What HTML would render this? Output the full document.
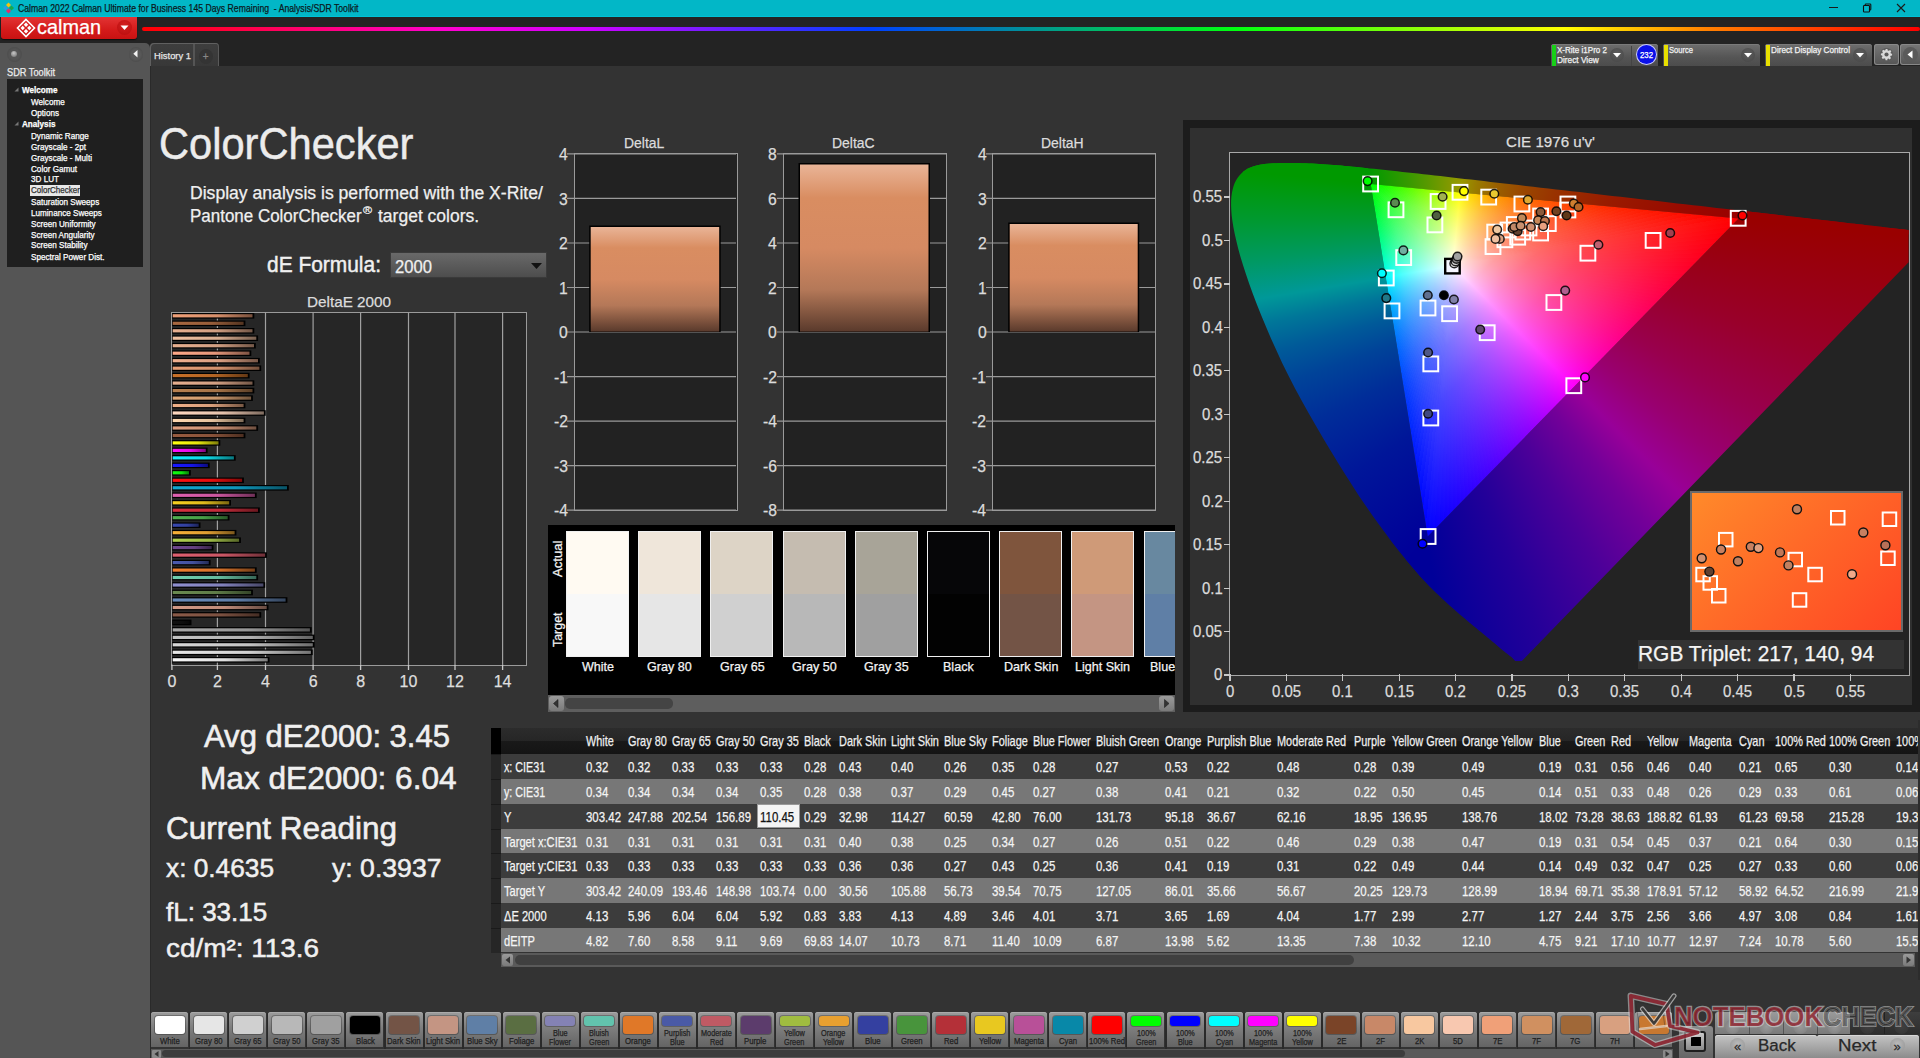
<!DOCTYPE html>
<html><head><meta charset="utf-8"><style>
html,body{margin:0;padding:0;width:1920px;height:1058px;overflow:hidden;background:#333;font-family:"Liberation Sans",sans-serif}
.a{position:absolute}
.t{position:absolute;white-space:nowrap;line-height:1;transform-origin:0 0;-webkit-text-stroke:.25px currentColor}
.wg stop{stop-color:#fff}
</style></head><body>
<div class="a" style="left:0;top:0;width:1920px;height:17px;background:#02b7c7;box-shadow:inset 0 -1px 0 #00c2d6"></div>
<svg class="a" style="left:1px;top:1px" width="14" height="14" viewBox="0 0 14 14">
<path d="M7.5 1.5 L10 4 L7.5 6.5 L5 4Z" fill="#f4c20d"/><path d="M10.5 4.5 L13 7 L10.5 9.5 L8 7Z" fill="#1aa84a"/>
<path d="M4.5 4.5 L7 7 L4.5 9.5 L2 7Z" fill="#2a9de0"/><path d="M7.5 7.5 L10 10 L7.5 12.5 L5 10Z" fill="#e0306a"/></svg>
<div class="t" style="left:18.0px;top:3.7px;font-size:10.20px;color:#0b1a1e;transform:scaleX(0.851);">Calman 2022 Calman Ultimate for Business 145 Days Remaining  - Analysis/SDR Toolkit</div>
<div class="a" style="left:1829px;top:7px;width:9px;height:1px;background:#1a1a1a"></div>
<svg class="a" style="left:1862px;top:3px" width="11" height="11"><rect x="1.5" y="2.5" width="6" height="6.5" rx=".8" fill="none" stroke="#111" stroke-width="1.1"/><path d="M3.2 2.3V1.5Q3.2 1 4 1H8Q8.8 1 8.8 1.8V6.2Q8.8 7 8 7H7.5" fill="none" stroke="#111" stroke-width="1.1"/></svg>
<svg class="a" style="left:1896px;top:3px" width="11" height="11"><path d="M1 1L9 9M9 1L1 9" stroke="#1a1a1a" stroke-width="1.1"/></svg>
<div class="a" style="left:0;top:17px;width:1920px;height:49px;background:#232323"></div>
<div class="a" style="left:1px;top:17px;width:136px;height:22px;border-radius:0 0 3px 3px;background:linear-gradient(#e23434,#d41a1a 60%,#c81212);box-shadow:0 1px 1px rgba(0,0,0,.6)"></div>
<svg class="a" style="left:16px;top:18px" width="20" height="20" viewBox="0 0 20 20">
<g fill="none" stroke="#fff" stroke-width="1.6"><path d="M10 1.5L18.5 10L10 18.5L1.5 10Z"/></g>
<g fill="#fff"><path d="M10 4.5L12.2 6.7L10 8.9L7.8 6.7Z"/><path d="M13.3 7.8L15.5 10L13.3 12.2L11.1 10Z"/><path d="M6.7 7.8L8.9 10L6.7 12.2L4.5 10Z"/><path d="M10 11.1L12.2 13.3L10 15.5L7.8 13.3Z"/></g></svg>
<div class="t" style="left:37.0px;top:17.1px;font-size:20.00px;color:#fff;transform:scaleX(0.993);">calman</div>
<div class="a" style="left:117px;top:20px;width:15px;height:15px;border-radius:50%;background:radial-gradient(circle at 50% 35%,#d42020,#b80c0c)"></div>
<svg class="a" style="left:120px;top:25px" width="9" height="6"><path d="M0.5 0.5H8.5L4.5 5Z" fill="#fff"/></svg>
<div class="a" style="left:142px;top:26.5px;width:1778px;height:4px;border-radius:2px;background:linear-gradient(90deg,#ff0000 0%,#ff00d0 17%,#d000ff 25%,#0040ff 41%,#00ff10 61.5%,#ffff00 80%,#ff8000 88%,#ff0000 100%)"></div>
<div class="a" style="left:0;top:43px;width:150px;height:1015px;background:#555;border-radius:0 5px 0 0"></div><div class="a" style="left:150px;top:66px;width:1px;height:992px;background:#2a2a2a"></div>
<div class="a" style="left:6.5px;top:47px;width:15px;height:15px;border-radius:50%;background:radial-gradient(circle,#555 45%,#4a4a4a 80%,#505050 100%)"></div><div class="a" style="left:11px;top:50.8px;width:6px;height:6px;border-radius:50%;background:radial-gradient(circle at 45% 35%,#c8c8c8,#7a7a7a 80%)"></div>
<div class="a" style="left:128.5px;top:47.2px;width:14.5px;height:14.5px;border-radius:50%;background:radial-gradient(circle,#585858 45%,#4a4a4a 80%,#525252 100%)"></div>
<svg class="a" style="left:133px;top:49.8px" width="6" height="8"><path d="M4.5 0V7.5L0.3 3.8Z" fill="#f4f4f4"/></svg>
<div class="t" style="left:7.0px;top:67.1px;font-size:10.50px;color:#ececec;transform:scaleX(0.878);">SDR Toolkit</div>
<div class="a" style="left:7px;top:79px;width:136px;height:188px;background:#1f1f1f"></div>
<div class="t" style="left:22.0px;top:86.1px;font-size:8.40px;color:#fff;font-weight:bold;transform:scaleX(0.970);">Welcome</div>
<div class="t" style="left:31.0px;top:98.1px;font-size:8.40px;color:#fff;transform:scaleX(0.970);">Welcome</div>
<div class="t" style="left:31.0px;top:109.1px;font-size:8.40px;color:#fff;transform:scaleX(0.970);">Options</div>
<div class="t" style="left:22.0px;top:120.1px;font-size:8.40px;color:#fff;font-weight:bold;transform:scaleX(0.970);">Analysis</div>
<div class="t" style="left:31.0px;top:132.1px;font-size:8.40px;color:#fff;transform:scaleX(0.970);">Dynamic Range</div>
<div class="t" style="left:31.0px;top:142.6px;font-size:8.40px;color:#fff;transform:scaleX(0.970);">Grayscale - 2pt</div>
<div class="t" style="left:31.0px;top:153.6px;font-size:8.40px;color:#fff;transform:scaleX(0.970);">Grayscale - Multi</div>
<div class="t" style="left:31.0px;top:164.6px;font-size:8.40px;color:#fff;transform:scaleX(0.970);">Color Gamut</div>
<div class="t" style="left:31.0px;top:175.1px;font-size:8.40px;color:#fff;transform:scaleX(0.970);">3D LUT</div>
<div class="a" style="left:30px;top:185.2px;width:50px;height:10.6px;background:#e8e8e8"></div>
<div class="t" style="left:31.0px;top:186.3px;font-size:8.40px;color:#333;transform:scaleX(0.954);">ColorChecker</div>
<div class="t" style="left:31.0px;top:197.6px;font-size:8.40px;color:#fff;transform:scaleX(0.970);">Saturation Sweeps</div>
<div class="t" style="left:31.0px;top:208.6px;font-size:8.40px;color:#fff;transform:scaleX(0.970);">Luminance Sweeps</div>
<div class="t" style="left:31.0px;top:219.6px;font-size:8.40px;color:#fff;transform:scaleX(0.970);">Screen Uniformity</div>
<div class="t" style="left:31.0px;top:230.6px;font-size:8.40px;color:#fff;transform:scaleX(0.970);">Screen Angularity</div>
<div class="t" style="left:31.0px;top:241.1px;font-size:8.40px;color:#fff;transform:scaleX(0.970);">Screen Stability</div>
<div class="t" style="left:31.0px;top:252.6px;font-size:8.40px;color:#fff;transform:scaleX(0.970);">Spectral Power Dist.</div>
<svg class="a" style="left:14px;top:87px" width="5" height="5"><path d="M4.5 0.5V4.5H0.5Z" fill="#777"/></svg>
<svg class="a" style="left:14px;top:121px" width="5" height="5"><path d="M4.5 0.5V4.5H0.5Z" fill="#777"/></svg>
<div class="a" style="left:150px;top:43px;width:69px;height:23px;background:linear-gradient(#3e3e3e,#383838);border-radius:4px 4px 0 0;box-shadow:inset 1px 1px 0 #606060,inset -1px 0 0 #5a5a5a"></div>
<div class="a" style="left:193px;top:44px;width:1.5px;height:22px;background:#555"></div>
<div class="t" style="left:154.0px;top:51.0px;font-size:9.40px;color:#e6e6e6;">History 1</div>
<div class="a" style="left:199px;top:48.5px;width:14px;height:15px;border-radius:50%;background:#343434"></div>
<div class="t" style="left:202.8px;top:51.5px;font-size:10.00px;color:#888;">+</div>
<div class="a" style="left:151px;top:66px;width:1769px;height:992px;background:#333"></div>
<div class="a" style="left:1551px;top:44px;width:107px;height:22px;border-radius:3px 3px 0 0;background:linear-gradient(#6e6e6e,#555 60%,#4c4c4c);box-shadow:inset 0 1px 0 #7a7a7a"></div><div class="a" style="left:1552px;top:45px;width:4px;height:21px;background:#18d018"></div>
<div class="t" style="left:1557.0px;top:46.0px;font-size:8.30px;color:#f2f2f2;transform:scaleX(0.968);">X-Rite i1Pro 2</div>
<div class="t" style="left:1557.0px;top:56.0px;font-size:8.30px;color:#f2f2f2;">Direct View</div>
<div class="a" style="left:1610.0px;top:48px;width:14px;height:14px;border-radius:50%;background:radial-gradient(circle at 50% 40%,#5e5e5e,#454545)"></div><svg class="a" style="left:1613.0px;top:53px" width="8" height="5"><path d="M0 0H8L4 4.5Z" fill="#fff"/></svg>
<div class="a" style="left:1631px;top:46px;width:1px;height:20px;background:#444"></div>
<div class="a" style="left:1637px;top:45px;width:19px;height:19px;border-radius:50%;background:#0a10e8;box-shadow:0 0 0 1px #c8c8ff"></div>
<div class="t" style="left:1640.0px;top:50.8px;font-size:8.50px;color:#fff;transform:scaleX(0.917);">232</div>
<div class="a" style="left:1663px;top:44px;width:97px;height:22px;border-radius:3px 3px 0 0;background:linear-gradient(#6e6e6e,#555 60%,#4c4c4c);box-shadow:inset 0 1px 0 #7a7a7a"></div><div class="a" style="left:1664px;top:45px;width:4px;height:21px;background:#e8e000"></div>
<div class="t" style="left:1669.0px;top:46.0px;font-size:8.30px;color:#f2f2f2;transform:scaleX(0.913);">Source</div>
<div class="a" style="left:1741.0px;top:48px;width:14px;height:14px;border-radius:50%;background:radial-gradient(circle at 50% 40%,#5e5e5e,#454545)"></div><svg class="a" style="left:1744.0px;top:53px" width="8" height="5"><path d="M0 0H8L4 4.5Z" fill="#fff"/></svg>
<div class="a" style="left:1765px;top:44px;width:107px;height:22px;border-radius:3px 3px 0 0;background:linear-gradient(#6e6e6e,#555 60%,#4c4c4c);box-shadow:inset 0 1px 0 #7a7a7a"></div><div class="a" style="left:1766px;top:45px;width:4px;height:21px;background:#e8e000"></div>
<div class="t" style="left:1771.0px;top:46.0px;font-size:8.30px;color:#f2f2f2;transform:scaleX(0.984);">Direct Display Control</div>
<div class="a" style="left:1853.0px;top:48px;width:14px;height:14px;border-radius:50%;background:radial-gradient(circle at 50% 40%,#5e5e5e,#454545)"></div><svg class="a" style="left:1856.0px;top:53px" width="8" height="5"><path d="M0 0H8L4 4.5Z" fill="#fff"/></svg>
<div class="a" style="left:1874px;top:44px;width:25px;height:21px;border-radius:3px;background:linear-gradient(#777,#555);box-shadow:inset 0 0 0 1px #888"></div>
<svg class="a" style="left:1879px;top:47px" width="15" height="15" viewBox="0 0 16 16"><circle cx="8" cy="8" r="7" fill="#5a5a5a"/><path fill="#d8d8d8" d="M7 2h2l.3 1.6 1.2.5 1.3-.9 1.4 1.4-.9 1.3.5 1.2L14 7v2l-1.6.3-.5 1.2.9 1.3-1.4 1.4-1.3-.9-1.2.5L9 14H7l-.3-1.6-1.2-.5-1.3.9-1.4-1.4.9-1.3-.5-1.2L2 9V7l1.6-.3.5-1.2-.9-1.3 1.4-1.4 1.3.9 1.2-.5Z"/><circle cx="8" cy="8" r="2.2" fill="#5a5a5a"/></svg>
<div class="a" style="left:1900px;top:44px;width:22px;height:21px;border-radius:3px;background:linear-gradient(#777,#555);box-shadow:inset 0 0 0 1px #888"></div>
<div class="a" style="left:1903px;top:47px;width:15px;height:15px;border-radius:50%;background:#5a5a5a"></div>
<svg class="a" style="left:1907px;top:50px" width="6" height="9"><path d="M5.5 0.5V8.5L0.5 4.5Z" fill="#fff"/></svg>
<div class="t" style="left:159.0px;top:120.5px;font-size:45.00px;color:#ececec;transform:scaleX(0.925);-webkit-text-stroke:.5px #ececec;">ColorChecker</div>
<div class="t" style="left:190.0px;top:184.7px;font-size:17.50px;color:#f0f0f0;transform:scaleX(1.005);">Display analysis is performed with the X-Rite/</div>
<div class="t" style="left:190.0px;top:207.7px;font-size:17.50px;color:#f0f0f0;transform:scaleX(0.969);">Pantone ColorChecker</div>
<div class="t" style="left:363.0px;top:205.5px;font-size:10.00px;color:#f0f0f0;transform:scaleX(1.222);">®</div>
<div class="t" style="left:378.0px;top:207.7px;font-size:17.50px;color:#f0f0f0;">target colors.</div>
<div class="t" style="left:267.0px;top:254.0px;font-size:22.50px;color:#f0f0f0;transform:scaleX(0.930);-webkit-text-stroke:.45px #f0f0f0;">dE Formula:</div>
<div class="a" style="left:390px;top:251.5px;width:156.5px;height:26.5px;background:linear-gradient(#6a6a6a,#4c4c4c);box-shadow:inset 0 0 0 1px #3a3a3a"></div>
<div class="t" style="left:395.0px;top:258.7px;font-size:17.50px;color:#f0f0f0;transform:scaleX(0.950);">2000</div>
<svg class="a" style="left:531px;top:262.5px" width="11" height="6"><path d="M0 0H11L5.5 6Z" fill="#111"/></svg>
<div class="t" style="left:307.0px;top:293.9px;font-size:15.50px;color:#dcdcdc;transform:scaleX(0.985);">DeltaE 2000</div>
<div class="a" style="left:172px;top:312.5px;width:354px;height:352px;background:#262626;box-shadow:0 0 0 1px #9a9a9a"></div>
<svg class="a" style="left:160px;top:300px" width="380" height="400">
<defs><linearGradient id="bg0"><stop offset="0" stop-color="#f8f8f8"/><stop offset="0.55" stop-color="#f8f8f8" stop-opacity=".9"/><stop offset="1" stop-color="#f8f8f8" stop-opacity=".5"/></linearGradient><linearGradient id="bg1"><stop offset="0" stop-color="#e8e8e8"/><stop offset="0.55" stop-color="#e8e8e8" stop-opacity=".9"/><stop offset="1" stop-color="#e8e8e8" stop-opacity=".5"/></linearGradient><linearGradient id="bg2"><stop offset="0" stop-color="#d8d8d8"/><stop offset="0.55" stop-color="#d8d8d8" stop-opacity=".9"/><stop offset="1" stop-color="#d8d8d8" stop-opacity=".5"/></linearGradient><linearGradient id="bg3"><stop offset="0" stop-color="#c4c4c4"/><stop offset="0.55" stop-color="#c4c4c4" stop-opacity=".9"/><stop offset="1" stop-color="#c4c4c4" stop-opacity=".5"/></linearGradient><linearGradient id="bg4"><stop offset="0" stop-color="#a8a8a8"/><stop offset="0.55" stop-color="#a8a8a8" stop-opacity=".9"/><stop offset="1" stop-color="#a8a8a8" stop-opacity=".5"/></linearGradient><linearGradient id="bg5"><stop offset="0" stop-color="#101010"/><stop offset="0.55" stop-color="#101010" stop-opacity=".9"/><stop offset="1" stop-color="#101010" stop-opacity=".5"/></linearGradient><linearGradient id="bg6"><stop offset="0" stop-color="#8a5a48"/><stop offset="0.55" stop-color="#8a5a48" stop-opacity=".9"/><stop offset="1" stop-color="#8a5a48" stop-opacity=".5"/></linearGradient><linearGradient id="bg7"><stop offset="0" stop-color="#d49a86"/><stop offset="0.55" stop-color="#d49a86" stop-opacity=".9"/><stop offset="1" stop-color="#d49a86" stop-opacity=".5"/></linearGradient><linearGradient id="bg8"><stop offset="0" stop-color="#6a8cbc"/><stop offset="0.55" stop-color="#6a8cbc" stop-opacity=".9"/><stop offset="1" stop-color="#6a8cbc" stop-opacity=".5"/></linearGradient><linearGradient id="bg9"><stop offset="0" stop-color="#6a8a50"/><stop offset="0.55" stop-color="#6a8a50" stop-opacity=".9"/><stop offset="1" stop-color="#6a8a50" stop-opacity=".5"/></linearGradient><linearGradient id="bg10"><stop offset="0" stop-color="#9090d0"/><stop offset="0.55" stop-color="#9090d0" stop-opacity=".9"/><stop offset="1" stop-color="#9090d0" stop-opacity=".5"/></linearGradient><linearGradient id="bg11"><stop offset="0" stop-color="#70d0b0"/><stop offset="0.55" stop-color="#70d0b0" stop-opacity=".9"/><stop offset="1" stop-color="#70d0b0" stop-opacity=".5"/></linearGradient><linearGradient id="bg12"><stop offset="0" stop-color="#f08030"/><stop offset="0.55" stop-color="#f08030" stop-opacity=".9"/><stop offset="1" stop-color="#f08030" stop-opacity=".5"/></linearGradient><linearGradient id="bg13"><stop offset="0" stop-color="#4a5ab0"/><stop offset="0.55" stop-color="#4a5ab0" stop-opacity=".9"/><stop offset="1" stop-color="#4a5ab0" stop-opacity=".5"/></linearGradient><linearGradient id="bg14"><stop offset="0" stop-color="#e06070"/><stop offset="0.55" stop-color="#e06070" stop-opacity=".9"/><stop offset="1" stop-color="#e06070" stop-opacity=".5"/></linearGradient><linearGradient id="bg15"><stop offset="0" stop-color="#704890"/><stop offset="0.55" stop-color="#704890" stop-opacity=".9"/><stop offset="1" stop-color="#704890" stop-opacity=".5"/></linearGradient><linearGradient id="bg16"><stop offset="0" stop-color="#b0d050"/><stop offset="0.55" stop-color="#b0d050" stop-opacity=".9"/><stop offset="1" stop-color="#b0d050" stop-opacity=".5"/></linearGradient><linearGradient id="bg17"><stop offset="0" stop-color="#f8b038"/><stop offset="0.55" stop-color="#f8b038" stop-opacity=".9"/><stop offset="1" stop-color="#f8b038" stop-opacity=".5"/></linearGradient><linearGradient id="bg18"><stop offset="0" stop-color="#3848b0"/><stop offset="0.55" stop-color="#3848b0" stop-opacity=".9"/><stop offset="1" stop-color="#3848b0" stop-opacity=".5"/></linearGradient><linearGradient id="bg19"><stop offset="0" stop-color="#50b050"/><stop offset="0.55" stop-color="#50b050" stop-opacity=".9"/><stop offset="1" stop-color="#50b050" stop-opacity=".5"/></linearGradient><linearGradient id="bg20"><stop offset="0" stop-color="#d83040"/><stop offset="0.55" stop-color="#d83040" stop-opacity=".9"/><stop offset="1" stop-color="#d83040" stop-opacity=".5"/></linearGradient><linearGradient id="bg21"><stop offset="0" stop-color="#f8d020"/><stop offset="0.55" stop-color="#f8d020" stop-opacity=".9"/><stop offset="1" stop-color="#f8d020" stop-opacity=".5"/></linearGradient><linearGradient id="bg22"><stop offset="0" stop-color="#e060b0"/><stop offset="0.55" stop-color="#e060b0" stop-opacity=".9"/><stop offset="1" stop-color="#e060b0" stop-opacity=".5"/></linearGradient><linearGradient id="bg23"><stop offset="0" stop-color="#10a8d0"/><stop offset="0.55" stop-color="#10a8d0" stop-opacity=".9"/><stop offset="1" stop-color="#10a8d0" stop-opacity=".5"/></linearGradient><linearGradient id="bg24"><stop offset="0" stop-color="#ff1010"/><stop offset="0.55" stop-color="#ff1010" stop-opacity=".9"/><stop offset="1" stop-color="#ff1010" stop-opacity=".5"/></linearGradient><linearGradient id="bg25"><stop offset="0" stop-color="#10ff10"/><stop offset="0.55" stop-color="#10ff10" stop-opacity=".9"/><stop offset="1" stop-color="#10ff10" stop-opacity=".5"/></linearGradient><linearGradient id="bg26"><stop offset="0" stop-color="#1818ff"/><stop offset="0.55" stop-color="#1818ff" stop-opacity=".9"/><stop offset="1" stop-color="#1818ff" stop-opacity=".5"/></linearGradient><linearGradient id="bg27"><stop offset="0" stop-color="#10f0ff"/><stop offset="0.55" stop-color="#10f0ff" stop-opacity=".9"/><stop offset="1" stop-color="#10f0ff" stop-opacity=".5"/></linearGradient><linearGradient id="bg28"><stop offset="0" stop-color="#ff10ff"/><stop offset="0.55" stop-color="#ff10ff" stop-opacity=".9"/><stop offset="1" stop-color="#ff10ff" stop-opacity=".5"/></linearGradient><linearGradient id="bg29"><stop offset="0" stop-color="#ffff10"/><stop offset="0.55" stop-color="#ffff10" stop-opacity=".9"/><stop offset="1" stop-color="#ffff10" stop-opacity=".5"/></linearGradient><linearGradient id="bg30"><stop offset="0" stop-color="#985c40"/><stop offset="0.55" stop-color="#985c40" stop-opacity=".9"/><stop offset="1" stop-color="#985c40" stop-opacity=".5"/></linearGradient><linearGradient id="bg31"><stop offset="0" stop-color="#e0a080"/><stop offset="0.55" stop-color="#e0a080" stop-opacity=".9"/><stop offset="1" stop-color="#e0a080" stop-opacity=".5"/></linearGradient><linearGradient id="bg32"><stop offset="0" stop-color="#ffd8b0"/><stop offset="0.55" stop-color="#ffd8b0" stop-opacity=".9"/><stop offset="1" stop-color="#ffd8b0" stop-opacity=".5"/></linearGradient><linearGradient id="bg33"><stop offset="0" stop-color="#ffd8c0"/><stop offset="0.55" stop-color="#ffd8c0" stop-opacity=".9"/><stop offset="1" stop-color="#ffd8c0" stop-opacity=".5"/></linearGradient><linearGradient id="bg34"><stop offset="0" stop-color="#f0b088"/><stop offset="0.55" stop-color="#f0b088" stop-opacity=".9"/><stop offset="1" stop-color="#f0b088" stop-opacity=".5"/></linearGradient><linearGradient id="bg35"><stop offset="0" stop-color="#e0a878"/><stop offset="0.55" stop-color="#e0a878" stop-opacity=".9"/><stop offset="1" stop-color="#e0a878" stop-opacity=".5"/></linearGradient><linearGradient id="bg36"><stop offset="0" stop-color="#b88050"/><stop offset="0.55" stop-color="#b88050" stop-opacity=".9"/><stop offset="1" stop-color="#b88050" stop-opacity=".5"/></linearGradient><linearGradient id="bg37"><stop offset="0" stop-color="#e8b090"/><stop offset="0.55" stop-color="#e8b090" stop-opacity=".9"/><stop offset="1" stop-color="#e8b090" stop-opacity=".5"/></linearGradient><linearGradient id="bg38"><stop offset="0" stop-color="#c87028"/><stop offset="0.55" stop-color="#c87028" stop-opacity=".9"/><stop offset="1" stop-color="#c87028" stop-opacity=".5"/></linearGradient><linearGradient id="bg39"><stop offset="0" stop-color="#e8a078"/><stop offset="0.55" stop-color="#e8a078" stop-opacity=".9"/><stop offset="1" stop-color="#e8a078" stop-opacity=".5"/></linearGradient><linearGradient id="bg40"><stop offset="0" stop-color="#f0b090"/><stop offset="0.55" stop-color="#f0b090" stop-opacity=".9"/><stop offset="1" stop-color="#f0b090" stop-opacity=".5"/></linearGradient><linearGradient id="bg41"><stop offset="0" stop-color="#ffa888"/><stop offset="0.55" stop-color="#ffa888" stop-opacity=".9"/><stop offset="1" stop-color="#ffa888" stop-opacity=".5"/></linearGradient><linearGradient id="bg42"><stop offset="0" stop-color="#e8b090"/><stop offset="0.55" stop-color="#e8b090" stop-opacity=".9"/><stop offset="1" stop-color="#e8b090" stop-opacity=".5"/></linearGradient><linearGradient id="bg43"><stop offset="0" stop-color="#f0c0a0"/><stop offset="0.55" stop-color="#f0c0a0" stop-opacity=".9"/><stop offset="1" stop-color="#f0c0a0" stop-opacity=".5"/></linearGradient><linearGradient id="bg44"><stop offset="0" stop-color="#e8b090"/><stop offset="0.55" stop-color="#e8b090" stop-opacity=".9"/><stop offset="1" stop-color="#e8b090" stop-opacity=".5"/></linearGradient><linearGradient id="bg45"><stop offset="0" stop-color="#a86840"/><stop offset="0.55" stop-color="#a86840" stop-opacity=".9"/><stop offset="1" stop-color="#a86840" stop-opacity=".5"/></linearGradient><linearGradient id="bg46"><stop offset="0" stop-color="#f0a078"/><stop offset="0.55" stop-color="#f0a078" stop-opacity=".9"/><stop offset="1" stop-color="#f0a078" stop-opacity=".5"/></linearGradient></defs>
<line x1="57.4" y1="12" x2="57.4" y2="364.5" stroke="#a0a0a0" stroke-width="1.2"/>
<line x1="105.5" y1="12" x2="105.5" y2="364.5" stroke="#a0a0a0" stroke-width="1.2"/>
<line x1="153.1" y1="12" x2="153.1" y2="364.5" stroke="#a0a0a0" stroke-width="1.2"/>
<line x1="200.6" y1="12" x2="200.6" y2="364.5" stroke="#a0a0a0" stroke-width="1.2"/>
<line x1="248.5" y1="12" x2="248.5" y2="364.5" stroke="#a0a0a0" stroke-width="1.2"/>
<line x1="295.0" y1="12" x2="295.0" y2="364.5" stroke="#a0a0a0" stroke-width="1.2"/>
<line x1="342.6" y1="12" x2="342.6" y2="364.5" stroke="#a0a0a0" stroke-width="1.2"/>
<line x1="11.9" y1="364.5" x2="11.9" y2="370" stroke="#c8c8c8" stroke-width="1.3"/>
<line x1="57.4" y1="364.5" x2="57.4" y2="370" stroke="#c8c8c8" stroke-width="1.3"/>
<line x1="105.5" y1="364.5" x2="105.5" y2="370" stroke="#c8c8c8" stroke-width="1.3"/>
<line x1="153.1" y1="364.5" x2="153.1" y2="370" stroke="#c8c8c8" stroke-width="1.3"/>
<line x1="200.6" y1="364.5" x2="200.6" y2="370" stroke="#c8c8c8" stroke-width="1.3"/>
<line x1="248.5" y1="364.5" x2="248.5" y2="370" stroke="#c8c8c8" stroke-width="1.3"/>
<line x1="295.0" y1="364.5" x2="295.0" y2="370" stroke="#c8c8c8" stroke-width="1.3"/>
<line x1="342.6" y1="364.5" x2="342.6" y2="370" stroke="#c8c8c8" stroke-width="1.3"/>
<rect x="12.2" y="357.0" width="97.3" height="5.6" fill="#000"/>
<rect x="12.7" y="358.2" width="95.0" height="3.2" fill="url(#bg0)"/>
<rect x="12.2" y="349.5" width="140.5" height="5.6" fill="#000"/>
<rect x="12.7" y="350.7" width="138.2" height="3.2" fill="url(#bg1)"/>
<rect x="12.2" y="342.0" width="142.4" height="5.6" fill="#000"/>
<rect x="12.7" y="343.2" width="140.1" height="3.2" fill="url(#bg2)"/>
<rect x="12.2" y="334.6" width="142.4" height="5.6" fill="#000"/>
<rect x="12.7" y="335.8" width="140.1" height="3.2" fill="url(#bg3)"/>
<rect x="12.2" y="327.1" width="139.5" height="5.6" fill="#000"/>
<rect x="12.7" y="328.3" width="137.2" height="3.2" fill="url(#bg4)"/>
<rect x="12.2" y="319.6" width="19.3" height="5.6" fill="#000"/>
<rect x="12.7" y="320.8" width="17.0" height="3.2" fill="url(#bg5)"/>
<rect x="12.2" y="312.1" width="89.0" height="5.6" fill="#000"/>
<rect x="12.7" y="313.3" width="86.7" height="3.2" fill="url(#bg6)"/>
<rect x="12.2" y="304.7" width="96.3" height="5.6" fill="#000"/>
<rect x="12.7" y="305.9" width="94.0" height="3.2" fill="url(#bg7)"/>
<rect x="12.2" y="297.2" width="115.2" height="5.6" fill="#000"/>
<rect x="12.7" y="298.4" width="112.9" height="3.2" fill="url(#bg8)"/>
<rect x="12.2" y="289.7" width="80.7" height="5.6" fill="#000"/>
<rect x="12.7" y="290.9" width="78.4" height="3.2" fill="url(#bg9)"/>
<rect x="12.2" y="282.2" width="93.0" height="5.6" fill="#000"/>
<rect x="12.7" y="283.4" width="90.7" height="3.2" fill="url(#bg10)"/>
<rect x="12.2" y="274.7" width="85.9" height="5.6" fill="#000"/>
<rect x="12.7" y="275.9" width="83.6" height="3.2" fill="url(#bg11)"/>
<rect x="12.2" y="267.3" width="84.5" height="5.6" fill="#000"/>
<rect x="12.7" y="268.5" width="82.2" height="3.2" fill="url(#bg12)"/>
<rect x="12.2" y="259.8" width="38.4" height="5.6" fill="#000"/>
<rect x="12.7" y="261.0" width="36.1" height="3.2" fill="url(#bg13)"/>
<rect x="12.2" y="252.3" width="94.7" height="5.6" fill="#000"/>
<rect x="12.7" y="253.5" width="92.4" height="3.2" fill="url(#bg14)"/>
<rect x="12.2" y="244.8" width="41.3" height="5.6" fill="#000"/>
<rect x="12.7" y="246.0" width="39.0" height="3.2" fill="url(#bg15)"/>
<rect x="12.2" y="237.4" width="68.7" height="5.6" fill="#000"/>
<rect x="12.7" y="238.6" width="66.4" height="3.2" fill="url(#bg16)"/>
<rect x="12.2" y="229.9" width="64.2" height="5.6" fill="#000"/>
<rect x="12.7" y="231.1" width="61.9" height="3.2" fill="url(#bg17)"/>
<rect x="12.2" y="222.4" width="28.3" height="5.6" fill="#000"/>
<rect x="12.7" y="223.6" width="26.0" height="3.2" fill="url(#bg18)"/>
<rect x="12.2" y="214.9" width="57.3" height="5.6" fill="#000"/>
<rect x="12.7" y="216.1" width="55.0" height="3.2" fill="url(#bg19)"/>
<rect x="12.2" y="207.4" width="87.6" height="5.6" fill="#000"/>
<rect x="12.7" y="208.6" width="85.3" height="3.2" fill="url(#bg20)"/>
<rect x="12.2" y="200.0" width="58.8" height="5.6" fill="#000"/>
<rect x="12.7" y="201.2" width="56.5" height="3.2" fill="url(#bg21)"/>
<rect x="12.2" y="192.5" width="84.5" height="5.6" fill="#000"/>
<rect x="12.7" y="193.7" width="82.2" height="3.2" fill="url(#bg22)"/>
<rect x="12.2" y="185.0" width="116.6" height="5.6" fill="#000"/>
<rect x="12.7" y="186.2" width="114.3" height="3.2" fill="url(#bg23)"/>
<rect x="12.2" y="177.5" width="71.7" height="5.6" fill="#000"/>
<rect x="12.7" y="178.7" width="69.4" height="3.2" fill="url(#bg24)"/>
<rect x="12.2" y="170.0" width="18.6" height="5.6" fill="#000"/>
<rect x="12.7" y="171.2" width="16.3" height="3.2" fill="url(#bg25)"/>
<rect x="12.2" y="162.6" width="37.5" height="5.6" fill="#000"/>
<rect x="12.7" y="163.8" width="35.2" height="3.2" fill="url(#bg26)"/>
<rect x="12.2" y="155.1" width="63.5" height="5.6" fill="#000"/>
<rect x="12.7" y="156.3" width="61.2" height="3.2" fill="url(#bg27)"/>
<rect x="12.2" y="147.6" width="35.4" height="5.6" fill="#000"/>
<rect x="12.7" y="148.8" width="33.1" height="3.2" fill="url(#bg28)"/>
<rect x="12.2" y="140.1" width="48.1" height="5.6" fill="#000"/>
<rect x="12.7" y="141.3" width="45.8" height="3.2" fill="url(#bg29)"/>
<rect x="12.2" y="132.7" width="73.2" height="5.6" fill="#000"/>
<rect x="12.7" y="133.9" width="70.9" height="3.2" fill="url(#bg30)"/>
<rect x="12.2" y="125.2" width="85.9" height="5.6" fill="#000"/>
<rect x="12.7" y="126.4" width="83.6" height="3.2" fill="url(#bg31)"/>
<rect x="12.2" y="117.7" width="73.2" height="5.6" fill="#000"/>
<rect x="12.7" y="118.9" width="70.9" height="3.2" fill="url(#bg32)"/>
<rect x="12.2" y="110.2" width="93.5" height="5.6" fill="#000"/>
<rect x="12.7" y="111.4" width="91.2" height="3.2" fill="url(#bg33)"/>
<rect x="12.2" y="102.7" width="73.2" height="5.6" fill="#000"/>
<rect x="12.7" y="103.9" width="70.9" height="3.2" fill="url(#bg34)"/>
<rect x="12.2" y="95.3" width="80.7" height="5.6" fill="#000"/>
<rect x="12.7" y="96.5" width="78.4" height="3.2" fill="url(#bg35)"/>
<rect x="12.2" y="87.8" width="82.1" height="5.6" fill="#000"/>
<rect x="12.7" y="89.0" width="79.8" height="3.2" fill="url(#bg36)"/>
<rect x="12.2" y="80.3" width="82.1" height="5.6" fill="#000"/>
<rect x="12.7" y="81.5" width="79.8" height="3.2" fill="url(#bg37)"/>
<rect x="12.2" y="72.8" width="77.4" height="5.6" fill="#000"/>
<rect x="12.7" y="74.0" width="75.1" height="3.2" fill="url(#bg38)"/>
<rect x="12.2" y="65.4" width="89.0" height="5.6" fill="#000"/>
<rect x="12.7" y="66.6" width="86.7" height="3.2" fill="url(#bg39)"/>
<rect x="12.2" y="57.9" width="87.6" height="5.6" fill="#000"/>
<rect x="12.7" y="59.1" width="85.3" height="3.2" fill="url(#bg40)"/>
<rect x="12.2" y="50.4" width="79.1" height="5.6" fill="#000"/>
<rect x="12.7" y="51.6" width="76.8" height="3.2" fill="url(#bg41)"/>
<rect x="12.2" y="42.9" width="83.6" height="5.6" fill="#000"/>
<rect x="12.7" y="44.1" width="81.3" height="3.2" fill="url(#bg42)"/>
<rect x="12.2" y="35.4" width="85.9" height="5.6" fill="#000"/>
<rect x="12.7" y="36.6" width="83.6" height="3.2" fill="url(#bg43)"/>
<rect x="12.2" y="28.0" width="82.1" height="5.6" fill="#000"/>
<rect x="12.7" y="29.2" width="79.8" height="3.2" fill="url(#bg44)"/>
<rect x="12.2" y="20.5" width="73.2" height="5.6" fill="#000"/>
<rect x="12.7" y="21.7" width="70.9" height="3.2" fill="url(#bg45)"/>
<rect x="12.2" y="13.0" width="82.1" height="5.6" fill="#000"/>
<rect x="12.7" y="14.2" width="79.8" height="3.2" fill="url(#bg46)"/>
</svg>
<div class="t" style="left:167.5px;top:674.3px;font-size:16.00px;color:#dedede;">0</div>
<div class="t" style="left:213.0px;top:674.3px;font-size:16.00px;color:#dedede;">2</div>
<div class="t" style="left:261.1px;top:674.3px;font-size:16.00px;color:#dedede;">4</div>
<div class="t" style="left:308.7px;top:674.3px;font-size:16.00px;color:#dedede;">6</div>
<div class="t" style="left:356.2px;top:674.3px;font-size:16.00px;color:#dedede;">8</div>
<div class="t" style="left:399.6px;top:674.3px;font-size:16.00px;color:#dedede;">10</div>
<div class="t" style="left:446.1px;top:674.3px;font-size:16.00px;color:#dedede;">12</div>
<div class="t" style="left:493.7px;top:674.3px;font-size:16.00px;color:#dedede;">14</div>
<div class="t" style="left:204.3px;top:719.9px;font-size:32.00px;color:#f0f0f0;transform:scaleX(0.969);-webkit-text-stroke:.6px #f0f0f0;">Avg dE2000: 3.45</div>
<div class="t" style="left:199.5px;top:761.9px;font-size:32.00px;color:#f0f0f0;transform:scaleX(0.988);-webkit-text-stroke:.6px #f0f0f0;">Max dE2000: 6.04</div>
<div class="t" style="left:166.0px;top:813.3px;font-size:31.50px;color:#f0f0f0;-webkit-text-stroke:.6px #f0f0f0;">Current Reading</div>
<div class="t" style="left:166.0px;top:855.0px;font-size:26.00px;color:#f0f0f0;transform:scaleX(1.010);-webkit-text-stroke:.5px #f0f0f0;">x: 0.4635</div>
<div class="t" style="left:331.5px;top:855.0px;font-size:26.00px;color:#f0f0f0;transform:scaleX(1.024);-webkit-text-stroke:.5px #f0f0f0;">y: 0.3937</div>
<div class="t" style="left:166.0px;top:898.5px;font-size:26.00px;color:#f0f0f0;-webkit-text-stroke:.5px #f0f0f0;">fL: 33.15</div>
<div class="t" style="left:166.0px;top:935.0px;font-size:26.00px;color:#f0f0f0;transform:scaleX(1.073);-webkit-text-stroke:.5px #f0f0f0;">cd/m²: 113.6</div>
<div class="t" style="left:623.6px;top:135.3px;font-size:15.50px;color:#dcdcdc;transform:scaleX(0.900);">DeltaL</div>
<div class="a" style="left:574.8px;top:153.9px;width:162.0px;height:356.3px;background:#222;box-shadow:0 0 0 1px #9a9a9a"></div>
<svg class="a" style="left:554px;top:140px" width="192" height="390">
<line x1="13" y1="13.9" x2="182.0" y2="13.9" stroke="#9a9a9a" stroke-width="1.2"/>
<line x1="13" y1="58.4" x2="182.0" y2="58.4" stroke="#9a9a9a" stroke-width="1.2"/>
<line x1="13" y1="103.0" x2="182.0" y2="103.0" stroke="#9a9a9a" stroke-width="1.2"/>
<line x1="13" y1="147.5" x2="182.0" y2="147.5" stroke="#9a9a9a" stroke-width="1.2"/>
<line x1="13" y1="192.0" x2="182.0" y2="192.0" stroke="#9a9a9a" stroke-width="1.2"/>
<line x1="13" y1="236.6" x2="182.0" y2="236.6" stroke="#9a9a9a" stroke-width="1.2"/>
<line x1="13" y1="281.1" x2="182.0" y2="281.1" stroke="#9a9a9a" stroke-width="1.2"/>
<line x1="13" y1="325.7" x2="182.0" y2="325.7" stroke="#9a9a9a" stroke-width="1.2"/>
<line x1="13" y1="370.2" x2="182.0" y2="370.2" stroke="#9a9a9a" stroke-width="1.2"/>
<defs><linearGradient id="gDeltaL" x1="0" y1="0" x2="0" y2="1"><stop offset="0" stop-color="#e9b497"/><stop offset="0.2" stop-color="#d98d61"/><stop offset="0.5" stop-color="#d68a62"/><stop offset="0.75" stop-color="#b47858"/><stop offset="1" stop-color="#5a3a2c"/></linearGradient></defs>
<rect x="35.2" y="85.5" width="131.5" height="106.6" fill="#000"/>
<rect x="36.7" y="87.0" width="128.5" height="104.6" fill="url(#gDeltaL)"/>
</svg>
<div class="t" style="left:559.1px;top:146.1px;font-size:16.50px;color:#dcdcdc;transform:scaleX(0.950);">4</div>
<div class="t" style="left:559.1px;top:190.7px;font-size:16.50px;color:#dcdcdc;transform:scaleX(0.950);">3</div>
<div class="t" style="left:559.1px;top:235.2px;font-size:16.50px;color:#dcdcdc;transform:scaleX(0.950);">2</div>
<div class="t" style="left:559.1px;top:279.7px;font-size:16.50px;color:#dcdcdc;transform:scaleX(0.950);">1</div>
<div class="t" style="left:559.1px;top:324.3px;font-size:16.50px;color:#dcdcdc;transform:scaleX(0.950);">0</div>
<div class="t" style="left:553.9px;top:368.8px;font-size:16.50px;color:#dcdcdc;transform:scaleX(0.950);">-1</div>
<div class="t" style="left:553.9px;top:413.4px;font-size:16.50px;color:#dcdcdc;transform:scaleX(0.950);">-2</div>
<div class="t" style="left:553.9px;top:457.9px;font-size:16.50px;color:#dcdcdc;transform:scaleX(0.950);">-3</div>
<div class="t" style="left:553.9px;top:502.4px;font-size:16.50px;color:#dcdcdc;transform:scaleX(0.950);">-4</div>
<div class="t" style="left:831.8px;top:135.3px;font-size:15.50px;color:#dcdcdc;transform:scaleX(0.900);">DeltaC</div>
<div class="a" style="left:784.0px;top:153.9px;width:162.2px;height:356.3px;background:#222;box-shadow:0 0 0 1px #9a9a9a"></div>
<svg class="a" style="left:764px;top:140px" width="192" height="390">
<line x1="13" y1="13.9" x2="182.2" y2="13.9" stroke="#9a9a9a" stroke-width="1.2"/>
<line x1="13" y1="58.4" x2="182.2" y2="58.4" stroke="#9a9a9a" stroke-width="1.2"/>
<line x1="13" y1="103.0" x2="182.2" y2="103.0" stroke="#9a9a9a" stroke-width="1.2"/>
<line x1="13" y1="147.5" x2="182.2" y2="147.5" stroke="#9a9a9a" stroke-width="1.2"/>
<line x1="13" y1="192.0" x2="182.2" y2="192.0" stroke="#9a9a9a" stroke-width="1.2"/>
<line x1="13" y1="236.6" x2="182.2" y2="236.6" stroke="#9a9a9a" stroke-width="1.2"/>
<line x1="13" y1="281.1" x2="182.2" y2="281.1" stroke="#9a9a9a" stroke-width="1.2"/>
<line x1="13" y1="325.7" x2="182.2" y2="325.7" stroke="#9a9a9a" stroke-width="1.2"/>
<line x1="13" y1="370.2" x2="182.2" y2="370.2" stroke="#9a9a9a" stroke-width="1.2"/>
<defs><linearGradient id="gDeltaC" x1="0" y1="0" x2="0" y2="1"><stop offset="0" stop-color="#e9b497"/><stop offset="0.2" stop-color="#d98d61"/><stop offset="0.5" stop-color="#d68a62"/><stop offset="0.75" stop-color="#b47858"/><stop offset="1" stop-color="#5a3a2c"/></linearGradient></defs>
<rect x="34.5" y="23.0" width="131.5" height="169.1" fill="#000"/>
<rect x="36.0" y="24.5" width="128.5" height="167.1" fill="url(#gDeltaC)"/>
</svg>
<div class="t" style="left:768.3px;top:146.1px;font-size:16.50px;color:#dcdcdc;transform:scaleX(0.950);">8</div>
<div class="t" style="left:768.3px;top:190.7px;font-size:16.50px;color:#dcdcdc;transform:scaleX(0.950);">6</div>
<div class="t" style="left:768.3px;top:235.2px;font-size:16.50px;color:#dcdcdc;transform:scaleX(0.950);">4</div>
<div class="t" style="left:768.3px;top:279.7px;font-size:16.50px;color:#dcdcdc;transform:scaleX(0.950);">2</div>
<div class="t" style="left:768.3px;top:324.3px;font-size:16.50px;color:#dcdcdc;transform:scaleX(0.950);">0</div>
<div class="t" style="left:763.1px;top:368.8px;font-size:16.50px;color:#dcdcdc;transform:scaleX(0.950);">-2</div>
<div class="t" style="left:763.1px;top:413.4px;font-size:16.50px;color:#dcdcdc;transform:scaleX(0.950);">-4</div>
<div class="t" style="left:763.1px;top:457.9px;font-size:16.50px;color:#dcdcdc;transform:scaleX(0.950);">-6</div>
<div class="t" style="left:763.1px;top:502.4px;font-size:16.50px;color:#dcdcdc;transform:scaleX(0.950);">-8</div>
<div class="t" style="left:1041.0px;top:135.3px;font-size:15.50px;color:#dcdcdc;transform:scaleX(0.900);">DeltaH</div>
<div class="a" style="left:993.3px;top:153.9px;width:162.0px;height:356.3px;background:#222;box-shadow:0 0 0 1px #9a9a9a"></div>
<svg class="a" style="left:973px;top:140px" width="192" height="390">
<line x1="13" y1="13.9" x2="182.0" y2="13.9" stroke="#9a9a9a" stroke-width="1.2"/>
<line x1="13" y1="58.4" x2="182.0" y2="58.4" stroke="#9a9a9a" stroke-width="1.2"/>
<line x1="13" y1="103.0" x2="182.0" y2="103.0" stroke="#9a9a9a" stroke-width="1.2"/>
<line x1="13" y1="147.5" x2="182.0" y2="147.5" stroke="#9a9a9a" stroke-width="1.2"/>
<line x1="13" y1="192.0" x2="182.0" y2="192.0" stroke="#9a9a9a" stroke-width="1.2"/>
<line x1="13" y1="236.6" x2="182.0" y2="236.6" stroke="#9a9a9a" stroke-width="1.2"/>
<line x1="13" y1="281.1" x2="182.0" y2="281.1" stroke="#9a9a9a" stroke-width="1.2"/>
<line x1="13" y1="325.7" x2="182.0" y2="325.7" stroke="#9a9a9a" stroke-width="1.2"/>
<line x1="13" y1="370.2" x2="182.0" y2="370.2" stroke="#9a9a9a" stroke-width="1.2"/>
<defs><linearGradient id="gDeltaH" x1="0" y1="0" x2="0" y2="1"><stop offset="0" stop-color="#e9b497"/><stop offset="0.2" stop-color="#d98d61"/><stop offset="0.5" stop-color="#d68a62"/><stop offset="0.75" stop-color="#b47858"/><stop offset="1" stop-color="#5a3a2c"/></linearGradient></defs>
<rect x="35.2" y="82.5" width="131.0" height="109.6" fill="#000"/>
<rect x="36.7" y="84.0" width="128.0" height="107.6" fill="url(#gDeltaH)"/>
</svg>
<div class="t" style="left:977.6px;top:146.1px;font-size:16.50px;color:#dcdcdc;transform:scaleX(0.950);">4</div>
<div class="t" style="left:977.6px;top:190.7px;font-size:16.50px;color:#dcdcdc;transform:scaleX(0.950);">3</div>
<div class="t" style="left:977.6px;top:235.2px;font-size:16.50px;color:#dcdcdc;transform:scaleX(0.950);">2</div>
<div class="t" style="left:977.6px;top:279.7px;font-size:16.50px;color:#dcdcdc;transform:scaleX(0.950);">1</div>
<div class="t" style="left:977.6px;top:324.3px;font-size:16.50px;color:#dcdcdc;transform:scaleX(0.950);">0</div>
<div class="t" style="left:972.4px;top:368.8px;font-size:16.50px;color:#dcdcdc;transform:scaleX(0.950);">-1</div>
<div class="t" style="left:972.4px;top:413.4px;font-size:16.50px;color:#dcdcdc;transform:scaleX(0.950);">-2</div>
<div class="t" style="left:972.4px;top:457.9px;font-size:16.50px;color:#dcdcdc;transform:scaleX(0.950);">-3</div>
<div class="t" style="left:972.4px;top:502.4px;font-size:16.50px;color:#dcdcdc;transform:scaleX(0.950);">-4</div>
<div class="a" style="left:548px;top:525px;width:627px;height:170px;background:#000;overflow:hidden">
<div class="a" style="left:18.0px;top:6px;width:61px;height:124px;border:1px solid #f0f0f0;background:linear-gradient(#fffaf2 0,#fffaf2 50%,#f8f8f8 50%,#f8f8f8 100%)"></div>
<div class="t" style="left:33.5px;top:136.0px;font-size:12.80px;color:#f4f4f4;transform:scaleX(0.980);">White</div>
<div class="a" style="left:90.2px;top:6px;width:61px;height:124px;border:1px solid #f0f0f0;background:linear-gradient(#efe6da 0,#efe6da 50%,#e6e6e6 50%,#e6e6e6 100%)"></div>
<div class="t" style="left:99.4px;top:136.0px;font-size:12.80px;color:#f4f4f4;transform:scaleX(0.980);">Gray 80</div>
<div class="a" style="left:162.4px;top:6px;width:61px;height:124px;border:1px solid #f0f0f0;background:linear-gradient(#ddd4c6 0,#ddd4c6 50%,#d0d0d0 50%,#d0d0d0 100%)"></div>
<div class="t" style="left:171.6px;top:136.0px;font-size:12.80px;color:#f4f4f4;transform:scaleX(0.980);">Gray 65</div>
<div class="a" style="left:234.6px;top:6px;width:61px;height:124px;border:1px solid #f0f0f0;background:linear-gradient(#c5bcb0 0,#c5bcb0 50%,#b8b8b8 50%,#b8b8b8 100%)"></div>
<div class="t" style="left:243.8px;top:136.0px;font-size:12.80px;color:#f4f4f4;transform:scaleX(0.980);">Gray 50</div>
<div class="a" style="left:306.8px;top:6px;width:61px;height:124px;border:1px solid #f0f0f0;background:linear-gradient(#a8a498 0,#a8a498 50%,#a0a0a0 50%,#a0a0a0 100%)"></div>
<div class="t" style="left:316.0px;top:136.0px;font-size:12.80px;color:#f4f4f4;transform:scaleX(0.980);">Gray 35</div>
<div class="a" style="left:379.0px;top:6px;width:61px;height:124px;border:1px solid #f0f0f0;background:linear-gradient(#060608 0,#060608 50%,#020202 50%,#020202 100%)"></div>
<div class="t" style="left:395.2px;top:136.0px;font-size:12.80px;color:#f4f4f4;transform:scaleX(0.980);">Black</div>
<div class="a" style="left:451.2px;top:6px;width:61px;height:124px;border:1px solid #f0f0f0;background:linear-gradient(#7f553d 0,#7f553d 50%,#735446 50%,#735446 100%)"></div>
<div class="t" style="left:455.5px;top:136.0px;font-size:12.80px;color:#f4f4f4;transform:scaleX(0.980);">Dark Skin</div>
<div class="a" style="left:523.4px;top:6px;width:61px;height:124px;border:1px solid #f0f0f0;background:linear-gradient(#cf9a78 0,#cf9a78 50%,#c49583 50%,#c49583 100%)"></div>
<div class="t" style="left:527.4px;top:136.0px;font-size:12.80px;color:#f4f4f4;transform:scaleX(0.980);">Light Skin</div>
<div class="a" style="left:595.6px;top:6px;width:61px;height:124px;border:1px solid #f0f0f0;background:linear-gradient(#6888a0 0,#6888a0 50%,#5f7fa6 50%,#5f7fa6 100%)"></div>
<div class="t" style="left:602.3px;top:136.0px;font-size:12.80px;color:#f4f4f4;transform:scaleX(0.980);">Blue Sky</div>
<div class="t" style="left:2px;top:34px;width:22px;font-size:12px;transform:rotate(-90deg);transform-origin:0 0;"></div>
</div>
<div class="t" style="left:550.5px;top:577px;font-size:13.5px;color:#f4f4f4;transform:rotate(-90deg) scaleX(.97);transform-origin:0 0">Actual</div>
<div class="t" style="left:550.5px;top:647px;font-size:13.5px;color:#f4f4f4;transform:rotate(-90deg) scaleX(.92);transform-origin:0 0">Target</div>
<div class="a" style="left:548px;top:695px;width:627px;height:17px;background:#5e5e5e"></div>
<div class="a" style="left:565px;top:698px;width:108px;height:11px;border-radius:5px;background:#444"></div>
<div class="a" style="left:549px;top:696px;width:15px;height:15px;background:linear-gradient(#9a9a9a,#7a7a7a);border-radius:3px"></div>
<svg class="a" style="left:553px;top:699px" width="6" height="9"><path d="M5 0.5V8.5L0.5 4.5Z" fill="#333" stroke="#222" stroke-width=".6"/></svg>
<div class="a" style="left:1159px;top:696px;width:15px;height:15px;background:linear-gradient(#9a9a9a,#7a7a7a);border-radius:3px"></div>
<svg class="a" style="left:1164px;top:699px" width="6" height="9"><path d="M0.5 0.5V8.5L5 4.5Z" fill="#333" stroke="#222" stroke-width=".6"/></svg>
<div class="a" style="left:1183px;top:120px;width:737px;height:592px;background:#1c1c1c"></div>
<div class="a" style="left:1190px;top:128px;width:722px;height:577px;background:#303030"></div>
<div class="t" style="left:1506.0px;top:134.8px;font-size:14.80px;color:#dedede;transform:scaleX(1.022);">CIE 1976 u'v'</div>
<div class="a" style="left:1229.5px;top:152.5px;width:679px;height:522px;background:#232323;box-shadow:0 0 0 1px #a8a8a8"></div>
<div class="a" style="left:1229px;top:152px;width:690px;height:525px;clip-path:polygon(286.2px 509.0px,282.4px 505.1px,281.7px 504.6px,281.0px 504.1px,280.2px 503.5px,279.4px 502.8px,278.5px 502.1px,277.5px 501.3px,276.4px 500.4px,275.3px 499.5px,274.0px 498.5px,272.8px 497.5px,271.5px 496.4px,270.1px 495.2px,268.7px 494.0px,267.2px 492.7px,265.6px 491.3px,263.9px 489.9px,262.2px 488.5px,260.4px 487.0px,258.5px 485.5px,256.5px 483.8px,254.3px 482.0px,252.0px 480.1px,249.6px 478.2px,247.1px 476.1px,244.5px 474.0px,241.9px 471.8px,239.1px 469.5px,236.3px 467.1px,233.3px 464.6px,230.2px 461.9px,226.9px 459.1px,223.5px 456.1px,220.0px 452.9px,216.3px 449.6px,212.5px 446.0px,208.6px 442.2px,204.6px 438.3px,200.5px 434.2px,196.1px 429.6px,191.3px 424.4px,186.2px 418.5px,180.8px 412.2px,175.2px 405.5px,169.3px 398.2px,163.2px 390.4px,157.0px 382.1px,150.5px 373.2px,143.8px 363.9px,136.9px 354.1px,130.0px 343.9px,123.0px 333.1px,115.8px 321.8px,108.5px 310.1px,101.2px 298.1px,94.0px 286.0px,86.9px 273.8px,79.7px 261.2px,72.6px 248.6px,65.8px 235.9px,59.4px 223.5px,53.3px 211.2px,47.6px 198.8px,42.1px 186.7px,37.0px 174.8px,32.3px 163.4px,27.9px 152.5px,23.9px 141.9px,20.2px 131.7px,16.9px 121.9px,13.9px 112.8px,11.3px 104.3px,9.1px 96.3px,7.3px 88.8px,5.7px 81.8px,4.4px 75.2px,3.4px 69.1px,2.7px 63.5px,2.3px 58.3px,2.1px 53.5px,2.1px 49.0px,2.4px 44.7px,2.9px 40.9px,3.7px 37.3px,4.6px 34.0px,5.7px 31.0px,7.1px 28.2px,8.7px 25.7px,10.4px 23.4px,12.3px 21.4px,14.4px 19.5px,16.6px 18.0px,18.9px 16.6px,21.4px 15.5px,24.0px 14.6px,26.6px 13.7px,29.4px 13.0px,32.2px 12.5px,35.1px 12.1px,38.1px 11.8px,41.2px 11.6px,44.3px 11.3px,47.4px 11.2px,50.6px 11.1px,53.8px 11.1px,57.0px 11.0px,60.2px 11.0px,63.4px 11.0px,66.7px 11.1px,69.9px 11.1px,73.2px 11.2px,76.5px 11.3px,79.8px 11.5px,83.1px 11.6px,86.5px 11.8px,90.0px 12.0px,93.5px 12.2px,97.1px 12.5px,100.7px 12.7px,104.4px 13.0px,108.1px 13.3px,111.9px 13.6px,115.8px 14.0px,119.7px 14.3px,123.7px 14.7px,127.8px 15.1px,132.0px 15.5px,136.2px 15.9px,140.5px 16.4px,144.9px 16.8px,149.4px 17.3px,154.0px 17.8px,158.7px 18.3px,163.5px 18.8px,168.4px 19.3px,173.4px 19.9px,178.5px 20.4px,183.7px 21.0px,189.0px 21.6px,194.4px 22.2px,200.0px 22.8px,205.6px 23.5px,211.4px 24.1px,217.2px 24.8px,223.2px 25.5px,229.3px 26.2px,235.6px 26.9px,241.9px 27.6px,248.3px 28.3px,254.9px 29.1px,261.6px 29.9px,268.4px 30.7px,275.3px 31.5px,282.4px 32.3px,289.6px 33.1px,296.8px 33.9px,304.2px 34.8px,311.7px 35.7px,319.3px 36.5px,327.0px 37.4px,334.8px 38.3px,342.7px 39.2px,350.6px 40.1px,358.7px 41.1px,366.8px 42.0px,375.0px 42.9px,383.2px 43.9px,391.4px 44.8px,399.8px 45.8px,408.0px 46.8px,416.2px 47.7px,424.3px 48.6px,432.4px 49.6px,440.4px 50.5px,448.3px 51.4px,456.2px 52.3px,464.1px 53.2px,472.1px 54.1px,479.9px 55.0px,487.6px 55.9px,495.2px 56.8px,502.5px 57.6px,509.7px 58.5px,516.8px 59.3px,523.7px 60.0px,530.4px 60.8px,537.0px 61.6px,543.4px 62.3px,549.7px 63.0px,555.7px 63.7px,561.6px 64.4px,567.3px 65.1px,572.8px 65.7px,578.1px 66.3px,583.2px 66.9px,588.1px 67.5px,592.9px 68.0px,597.5px 68.6px,601.9px 69.1px,606.2px 69.6px,610.3px 70.0px,614.3px 70.5px,618.2px 70.9px,621.9px 71.4px,625.5px 71.8px,629.1px 72.2px,632.5px 72.6px,635.9px 73.0px,639.1px 73.4px,642.3px 73.7px,645.3px 74.1px,648.3px 74.4px,651.1px 74.7px,653.9px 75.1px,656.5px 75.4px,659.0px 75.7px,661.5px 75.9px,663.8px 76.2px,666.0px 76.4px,668.1px 76.7px,670.1px 76.9px,672.1px 77.1px,673.9px 77.3px,675.6px 77.5px,677.2px 77.7px,678.8px 77.9px,679.6px 78.0px,679.6px 110.2px,292.8px 509.0px)">
<div class="a" style="left:0;top:0;width:690px;height:525px;background:conic-gradient(at 509.6px 66.6px,#009900 0deg,#009900 44deg,#000000 44.5deg,#000000 95deg,#000099 95.5deg,#000199 225deg,#001699 236.5deg,#002d99 244.5deg,#004399 250deg,#005a99 254deg,#007699 257.5deg,#009299 260deg,#009899 260.5deg,#009962 265deg,#00992e 270deg,#009903 275deg,#009900 275.5deg,#009900 360deg);clip-path:polygon(-337.3px -2929.4px,620.7px 2993.7px,-2340.8px 3472.7px,-3298.8px -2450.3px)"></div>
<div class="a" style="left:0;top:0;width:690px;height:525px;background:conic-gradient(at 198.7px 384.4px,#589900 0deg,#8e9900 4.5deg,#999700 5.5deg,#997a00 8deg,#996100 11deg,#994900 15deg,#993200 20.5deg,#991b00 28.5deg,#990600 40deg,#990000 45.5deg,#990000 170.5deg,#000000 171deg,#000000 224deg,#009900 224.5deg,#009900 350.5deg,#019900 351deg,#389900 357deg,#589900 360deg);clip-path:polygon(-2845.2px -247.8px,3128.6px 312.1px,3408.6px -2674.8px,-2565.2px -3234.7px)"></div>
<div class="a" style="left:0;top:0;width:690px;height:525px;background:conic-gradient(at 141.7px 32.1px,#990000 0deg,#990000 95.5deg,#99002a 110.5deg,#99004e 120.5deg,#990070 128deg,#990093 134deg,#980099 135deg,#730099 141deg,#4d0099 149deg,#240099 159.5deg,#000099 171deg,#000099 275deg,#000000 275.5deg,#000000 350.5deg,#990000 351deg,#990000 360deg);clip-path:polygon(2607.8px -2077.6px,-1588.6px 2210.8px,555.6px 4309.0px,4752.0px 20.6px)"></div>
<div class="a" style="left:0;top:0;width:690px;height:525px;clip-path:polygon(509.6px 66.6px,141.7px 32.1px,198.7px 384.4px)">
<div class="a" style="left:0;top:0;width:690px;height:525px;background:conic-gradient(at 223.9px 114.1px,#e6ff00 0deg,#fffe00 5.5deg,#ffd600 15deg,#ffa700 28.5deg,#ff3a00 65deg,#ff0e00 77.25deg,#ff0001 80.75deg,#ff008a 113.5deg,#ff00c0 124.5deg,#ff00f1 132.75deg,#fe00ff 135deg,#c900ff 143.5deg,#8d00ff 155deg,#0001ff 185.5deg,#0029ff 195deg,#0058ff 208.5deg,#00c5ff 245deg,#00f1ff 257.25deg,#00fffe 260.75deg,#00ff75 293.5deg,#00ff3f 304.5deg,#00ff0e 312.75deg,#01ff00 315deg,#34ff00 323.25deg,#70ff00 334.5deg,#e6ff00 360deg)"></div>
<svg class="a wg" style="left:0;top:0" width="690" height="525"><defs>
<radialGradient id="w0" gradientUnits="userSpaceOnUse" cx="223.9" cy="114.1" r="74.2"><stop offset="0" stop-opacity="1"/><stop offset=".05" stop-opacity=".952"/><stop offset=".15" stop-opacity=".856"/><stop offset=".3" stop-opacity=".717"/><stop offset=".5" stop-opacity=".535"/><stop offset=".75" stop-opacity=".303"/><stop offset="1" stop-opacity="0"/></radialGradient>
<radialGradient id="w1" gradientUnits="userSpaceOnUse" cx="223.9" cy="114.1" r="74.1"><stop offset="0" stop-opacity="1"/><stop offset=".05" stop-opacity=".952"/><stop offset=".15" stop-opacity=".857"/><stop offset=".3" stop-opacity=".718"/><stop offset=".5" stop-opacity=".536"/><stop offset=".75" stop-opacity=".304"/><stop offset="1" stop-opacity="0"/></radialGradient>
<radialGradient id="w2" gradientUnits="userSpaceOnUse" cx="223.9" cy="114.1" r="74.0"><stop offset="0" stop-opacity="1"/><stop offset=".05" stop-opacity=".952"/><stop offset=".15" stop-opacity=".857"/><stop offset=".3" stop-opacity=".719"/><stop offset=".5" stop-opacity=".537"/><stop offset=".75" stop-opacity=".305"/><stop offset="1" stop-opacity="0"/></radialGradient>
<radialGradient id="w3" gradientUnits="userSpaceOnUse" cx="223.9" cy="114.1" r="74.0"><stop offset="0" stop-opacity="1"/><stop offset=".05" stop-opacity=".952"/><stop offset=".15" stop-opacity=".858"/><stop offset=".3" stop-opacity=".72"/><stop offset=".5" stop-opacity=".538"/><stop offset=".75" stop-opacity=".306"/><stop offset="1" stop-opacity="0"/></radialGradient>
<radialGradient id="w4" gradientUnits="userSpaceOnUse" cx="223.9" cy="114.1" r="74.0"><stop offset="0" stop-opacity="1"/><stop offset=".05" stop-opacity=".952"/><stop offset=".15" stop-opacity=".859"/><stop offset=".3" stop-opacity=".721"/><stop offset=".5" stop-opacity=".539"/><stop offset=".75" stop-opacity=".307"/><stop offset="1" stop-opacity="0"/></radialGradient>
<radialGradient id="w5" gradientUnits="userSpaceOnUse" cx="223.9" cy="114.1" r="73.9"><stop offset="0" stop-opacity="1"/><stop offset=".05" stop-opacity=".952"/><stop offset=".15" stop-opacity=".859"/><stop offset=".3" stop-opacity=".721"/><stop offset=".5" stop-opacity=".54"/><stop offset=".75" stop-opacity=".307"/><stop offset="1" stop-opacity="0"/></radialGradient>
<radialGradient id="w6" gradientUnits="userSpaceOnUse" cx="223.9" cy="114.1" r="74.0"><stop offset="0" stop-opacity="1"/><stop offset=".05" stop-opacity=".952"/><stop offset=".15" stop-opacity=".857"/><stop offset=".3" stop-opacity=".718"/><stop offset=".5" stop-opacity=".537"/><stop offset=".75" stop-opacity=".305"/><stop offset="1" stop-opacity="0"/></radialGradient>
<radialGradient id="w7" gradientUnits="userSpaceOnUse" cx="223.9" cy="114.1" r="74.0"><stop offset="0" stop-opacity="1"/><stop offset=".05" stop-opacity=".951"/><stop offset=".15" stop-opacity=".855"/><stop offset=".3" stop-opacity=".716"/><stop offset=".5" stop-opacity=".533"/><stop offset=".75" stop-opacity=".302"/><stop offset="1" stop-opacity="0"/></radialGradient>
<radialGradient id="w8" gradientUnits="userSpaceOnUse" cx="223.9" cy="114.1" r="74.1"><stop offset="0" stop-opacity="1"/><stop offset=".05" stop-opacity=".951"/><stop offset=".15" stop-opacity=".854"/><stop offset=".3" stop-opacity=".713"/><stop offset=".5" stop-opacity=".53"/><stop offset=".75" stop-opacity=".299"/><stop offset="1" stop-opacity="0"/></radialGradient>
<radialGradient id="w9" gradientUnits="userSpaceOnUse" cx="223.9" cy="114.1" r="74.1"><stop offset="0" stop-opacity="1"/><stop offset=".05" stop-opacity=".95"/><stop offset=".15" stop-opacity=".852"/><stop offset=".3" stop-opacity=".71"/><stop offset=".5" stop-opacity=".527"/><stop offset=".75" stop-opacity=".297"/><stop offset="1" stop-opacity="0"/></radialGradient>
<radialGradient id="w10" gradientUnits="userSpaceOnUse" cx="223.9" cy="114.1" r="74.2"><stop offset="0" stop-opacity="1"/><stop offset=".05" stop-opacity=".949"/><stop offset=".15" stop-opacity=".85"/><stop offset=".3" stop-opacity=".708"/><stop offset=".5" stop-opacity=".524"/><stop offset=".75" stop-opacity=".295"/><stop offset="1" stop-opacity="0"/></radialGradient>
<radialGradient id="w11" gradientUnits="userSpaceOnUse" cx="223.9" cy="114.1" r="74.4"><stop offset="0" stop-opacity="1"/><stop offset=".05" stop-opacity=".949"/><stop offset=".15" stop-opacity=".849"/><stop offset=".3" stop-opacity=".705"/><stop offset=".5" stop-opacity=".521"/><stop offset=".75" stop-opacity=".292"/><stop offset="1" stop-opacity="0"/></radialGradient>
<radialGradient id="w12" gradientUnits="userSpaceOnUse" cx="223.9" cy="114.1" r="74.5"><stop offset="0" stop-opacity="1"/><stop offset=".05" stop-opacity=".948"/><stop offset=".15" stop-opacity=".847"/><stop offset=".3" stop-opacity=".702"/><stop offset=".5" stop-opacity=".518"/><stop offset=".75" stop-opacity=".29"/><stop offset="1" stop-opacity="0"/></radialGradient>
<radialGradient id="w13" gradientUnits="userSpaceOnUse" cx="223.9" cy="114.1" r="74.7"><stop offset="0" stop-opacity="1"/><stop offset=".05" stop-opacity=".947"/><stop offset=".15" stop-opacity=".845"/><stop offset=".3" stop-opacity=".7"/><stop offset=".5" stop-opacity=".515"/><stop offset=".75" stop-opacity=".288"/><stop offset="1" stop-opacity="0"/></radialGradient>
<radialGradient id="w14" gradientUnits="userSpaceOnUse" cx="223.9" cy="114.1" r="74.9"><stop offset="0" stop-opacity="1"/><stop offset=".05" stop-opacity=".947"/><stop offset=".15" stop-opacity=".844"/><stop offset=".3" stop-opacity=".697"/><stop offset=".5" stop-opacity=".512"/><stop offset=".75" stop-opacity=".285"/><stop offset="1" stop-opacity="0"/></radialGradient>
<radialGradient id="w15" gradientUnits="userSpaceOnUse" cx="223.9" cy="114.1" r="75.1"><stop offset="0" stop-opacity="1"/><stop offset=".05" stop-opacity=".946"/><stop offset=".15" stop-opacity=".842"/><stop offset=".3" stop-opacity=".695"/><stop offset=".5" stop-opacity=".509"/><stop offset=".75" stop-opacity=".283"/><stop offset="1" stop-opacity="0"/></radialGradient>
<radialGradient id="w16" gradientUnits="userSpaceOnUse" cx="223.9" cy="114.1" r="75.4"><stop offset="0" stop-opacity="1"/><stop offset=".05" stop-opacity=".945"/><stop offset=".15" stop-opacity=".84"/><stop offset=".3" stop-opacity=".692"/><stop offset=".5" stop-opacity=".506"/><stop offset=".75" stop-opacity=".281"/><stop offset="1" stop-opacity="0"/></radialGradient>
<radialGradient id="w17" gradientUnits="userSpaceOnUse" cx="223.9" cy="114.1" r="75.6"><stop offset="0" stop-opacity="1"/><stop offset=".05" stop-opacity=".945"/><stop offset=".15" stop-opacity=".839"/><stop offset=".3" stop-opacity=".689"/><stop offset=".5" stop-opacity=".503"/><stop offset=".75" stop-opacity=".279"/><stop offset="1" stop-opacity="0"/></radialGradient>
<radialGradient id="w18" gradientUnits="userSpaceOnUse" cx="223.9" cy="114.1" r="75.9"><stop offset="0" stop-opacity="1"/><stop offset=".05" stop-opacity=".944"/><stop offset=".15" stop-opacity=".837"/><stop offset=".3" stop-opacity=".687"/><stop offset=".5" stop-opacity=".5"/><stop offset=".75" stop-opacity=".276"/><stop offset="1" stop-opacity="0"/></radialGradient>
<radialGradient id="w19" gradientUnits="userSpaceOnUse" cx="223.9" cy="114.1" r="76.3"><stop offset="0" stop-opacity="1"/><stop offset=".05" stop-opacity=".943"/><stop offset=".15" stop-opacity=".835"/><stop offset=".3" stop-opacity=".684"/><stop offset=".5" stop-opacity=".497"/><stop offset=".75" stop-opacity=".274"/><stop offset="1" stop-opacity="0"/></radialGradient>
<radialGradient id="w20" gradientUnits="userSpaceOnUse" cx="223.9" cy="114.1" r="76.6"><stop offset="0" stop-opacity="1"/><stop offset=".05" stop-opacity=".943"/><stop offset=".15" stop-opacity=".834"/><stop offset=".3" stop-opacity=".682"/><stop offset=".5" stop-opacity=".495"/><stop offset=".75" stop-opacity=".272"/><stop offset="1" stop-opacity="0"/></radialGradient>
<radialGradient id="w21" gradientUnits="userSpaceOnUse" cx="223.9" cy="114.1" r="77.0"><stop offset="0" stop-opacity="1"/><stop offset=".05" stop-opacity=".942"/><stop offset=".15" stop-opacity=".832"/><stop offset=".3" stop-opacity=".679"/><stop offset=".5" stop-opacity=".492"/><stop offset=".75" stop-opacity=".27"/><stop offset="1" stop-opacity="0"/></radialGradient>
<radialGradient id="w22" gradientUnits="userSpaceOnUse" cx="223.9" cy="114.1" r="77.4"><stop offset="0" stop-opacity="1"/><stop offset=".05" stop-opacity=".941"/><stop offset=".15" stop-opacity=".83"/><stop offset=".3" stop-opacity=".676"/><stop offset=".5" stop-opacity=".489"/><stop offset=".75" stop-opacity=".268"/><stop offset="1" stop-opacity="0"/></radialGradient>
<radialGradient id="w23" gradientUnits="userSpaceOnUse" cx="223.9" cy="114.1" r="77.8"><stop offset="0" stop-opacity="1"/><stop offset=".05" stop-opacity=".941"/><stop offset=".15" stop-opacity=".828"/><stop offset=".3" stop-opacity=".674"/><stop offset=".5" stop-opacity=".486"/><stop offset=".75" stop-opacity=".266"/><stop offset="1" stop-opacity="0"/></radialGradient>
<radialGradient id="w24" gradientUnits="userSpaceOnUse" cx="223.9" cy="114.1" r="78.3"><stop offset="0" stop-opacity="1"/><stop offset=".05" stop-opacity=".94"/><stop offset=".15" stop-opacity=".827"/><stop offset=".3" stop-opacity=".671"/><stop offset=".5" stop-opacity=".483"/><stop offset=".75" stop-opacity=".264"/><stop offset="1" stop-opacity="0"/></radialGradient>
<radialGradient id="w25" gradientUnits="userSpaceOnUse" cx="223.9" cy="114.1" r="78.8"><stop offset="0" stop-opacity="1"/><stop offset=".05" stop-opacity=".939"/><stop offset=".15" stop-opacity=".825"/><stop offset=".3" stop-opacity=".669"/><stop offset=".5" stop-opacity=".48"/><stop offset=".75" stop-opacity=".262"/><stop offset="1" stop-opacity="0"/></radialGradient>
<radialGradient id="w26" gradientUnits="userSpaceOnUse" cx="223.9" cy="114.1" r="79.3"><stop offset="0" stop-opacity="1"/><stop offset=".05" stop-opacity=".938"/><stop offset=".15" stop-opacity=".823"/><stop offset=".3" stop-opacity=".666"/><stop offset=".5" stop-opacity=".478"/><stop offset=".75" stop-opacity=".26"/><stop offset="1" stop-opacity="0"/></radialGradient>
<radialGradient id="w27" gradientUnits="userSpaceOnUse" cx="223.9" cy="114.1" r="79.8"><stop offset="0" stop-opacity="1"/><stop offset=".05" stop-opacity=".938"/><stop offset=".15" stop-opacity=".821"/><stop offset=".3" stop-opacity=".663"/><stop offset=".5" stop-opacity=".475"/><stop offset=".75" stop-opacity=".258"/><stop offset="1" stop-opacity="0"/></radialGradient>
<radialGradient id="w28" gradientUnits="userSpaceOnUse" cx="223.9" cy="114.1" r="80.4"><stop offset="0" stop-opacity="1"/><stop offset=".05" stop-opacity=".937"/><stop offset=".15" stop-opacity=".82"/><stop offset=".3" stop-opacity=".661"/><stop offset=".5" stop-opacity=".472"/><stop offset=".75" stop-opacity=".256"/><stop offset="1" stop-opacity="0"/></radialGradient>
<radialGradient id="w29" gradientUnits="userSpaceOnUse" cx="223.9" cy="114.1" r="81.0"><stop offset="0" stop-opacity="1"/><stop offset=".05" stop-opacity=".936"/><stop offset=".15" stop-opacity=".818"/><stop offset=".3" stop-opacity=".658"/><stop offset=".5" stop-opacity=".469"/><stop offset=".75" stop-opacity=".254"/><stop offset="1" stop-opacity="0"/></radialGradient>
<radialGradient id="w30" gradientUnits="userSpaceOnUse" cx="223.9" cy="114.1" r="81.7"><stop offset="0" stop-opacity="1"/><stop offset=".05" stop-opacity=".936"/><stop offset=".15" stop-opacity=".816"/><stop offset=".3" stop-opacity=".655"/><stop offset=".5" stop-opacity=".466"/><stop offset=".75" stop-opacity=".252"/><stop offset="1" stop-opacity="0"/></radialGradient>
<radialGradient id="w31" gradientUnits="userSpaceOnUse" cx="223.9" cy="114.1" r="82.4"><stop offset="0" stop-opacity="1"/><stop offset=".05" stop-opacity=".935"/><stop offset=".15" stop-opacity=".814"/><stop offset=".3" stop-opacity=".653"/><stop offset=".5" stop-opacity=".463"/><stop offset=".75" stop-opacity=".25"/><stop offset="1" stop-opacity="0"/></radialGradient>
<radialGradient id="w32" gradientUnits="userSpaceOnUse" cx="223.9" cy="114.1" r="83.1"><stop offset="0" stop-opacity="1"/><stop offset=".05" stop-opacity=".934"/><stop offset=".15" stop-opacity=".812"/><stop offset=".3" stop-opacity=".65"/><stop offset=".5" stop-opacity=".461"/><stop offset=".75" stop-opacity=".248"/><stop offset="1" stop-opacity="0"/></radialGradient>
<radialGradient id="w33" gradientUnits="userSpaceOnUse" cx="223.9" cy="114.1" r="83.9"><stop offset="0" stop-opacity="1"/><stop offset=".05" stop-opacity=".933"/><stop offset=".15" stop-opacity=".81"/><stop offset=".3" stop-opacity=".647"/><stop offset=".5" stop-opacity=".458"/><stop offset=".75" stop-opacity=".246"/><stop offset="1" stop-opacity="0"/></radialGradient>
<radialGradient id="w34" gradientUnits="userSpaceOnUse" cx="223.9" cy="114.1" r="84.7"><stop offset="0" stop-opacity="1"/><stop offset=".05" stop-opacity=".932"/><stop offset=".15" stop-opacity=".808"/><stop offset=".3" stop-opacity=".644"/><stop offset=".5" stop-opacity=".455"/><stop offset=".75" stop-opacity=".244"/><stop offset="1" stop-opacity="0"/></radialGradient>
<radialGradient id="w35" gradientUnits="userSpaceOnUse" cx="223.9" cy="114.1" r="85.5"><stop offset="0" stop-opacity="1"/><stop offset=".05" stop-opacity=".932"/><stop offset=".15" stop-opacity=".806"/><stop offset=".3" stop-opacity=".642"/><stop offset=".5" stop-opacity=".452"/><stop offset=".75" stop-opacity=".242"/><stop offset="1" stop-opacity="0"/></radialGradient>
<radialGradient id="w36" gradientUnits="userSpaceOnUse" cx="223.9" cy="114.1" r="86.4"><stop offset="0" stop-opacity="1"/><stop offset=".05" stop-opacity=".931"/><stop offset=".15" stop-opacity=".804"/><stop offset=".3" stop-opacity=".639"/><stop offset=".5" stop-opacity=".449"/><stop offset=".75" stop-opacity=".24"/><stop offset="1" stop-opacity="0"/></radialGradient>
<radialGradient id="w37" gradientUnits="userSpaceOnUse" cx="223.9" cy="114.1" r="87.3"><stop offset="0" stop-opacity="1"/><stop offset=".05" stop-opacity=".93"/><stop offset=".15" stop-opacity=".802"/><stop offset=".3" stop-opacity=".636"/><stop offset=".5" stop-opacity=".446"/><stop offset=".75" stop-opacity=".238"/><stop offset="1" stop-opacity="0"/></radialGradient>
<radialGradient id="w38" gradientUnits="userSpaceOnUse" cx="223.9" cy="114.1" r="88.3"><stop offset="0" stop-opacity="1"/><stop offset=".05" stop-opacity=".929"/><stop offset=".15" stop-opacity=".8"/><stop offset=".3" stop-opacity=".633"/><stop offset=".5" stop-opacity=".443"/><stop offset=".75" stop-opacity=".236"/><stop offset="1" stop-opacity="0"/></radialGradient>
<radialGradient id="w39" gradientUnits="userSpaceOnUse" cx="223.9" cy="114.1" r="89.4"><stop offset="0" stop-opacity="1"/><stop offset=".05" stop-opacity=".928"/><stop offset=".15" stop-opacity=".798"/><stop offset=".3" stop-opacity=".63"/><stop offset=".5" stop-opacity=".44"/><stop offset=".75" stop-opacity=".233"/><stop offset="1" stop-opacity="0"/></radialGradient>
<radialGradient id="w40" gradientUnits="userSpaceOnUse" cx="223.9" cy="114.1" r="90.4"><stop offset="0" stop-opacity="1"/><stop offset=".05" stop-opacity=".927"/><stop offset=".15" stop-opacity=".796"/><stop offset=".3" stop-opacity=".627"/><stop offset=".5" stop-opacity=".437"/><stop offset=".75" stop-opacity=".231"/><stop offset="1" stop-opacity="0"/></radialGradient>
<radialGradient id="w41" gradientUnits="userSpaceOnUse" cx="223.9" cy="114.1" r="91.6"><stop offset="0" stop-opacity="1"/><stop offset=".05" stop-opacity=".926"/><stop offset=".15" stop-opacity=".794"/><stop offset=".3" stop-opacity=".624"/><stop offset=".5" stop-opacity=".434"/><stop offset=".75" stop-opacity=".229"/><stop offset="1" stop-opacity="0"/></radialGradient>
<radialGradient id="w42" gradientUnits="userSpaceOnUse" cx="223.9" cy="114.1" r="92.8"><stop offset="0" stop-opacity="1"/><stop offset=".05" stop-opacity=".925"/><stop offset=".15" stop-opacity=".792"/><stop offset=".3" stop-opacity=".621"/><stop offset=".5" stop-opacity=".431"/><stop offset=".75" stop-opacity=".227"/><stop offset="1" stop-opacity="0"/></radialGradient>
<radialGradient id="w43" gradientUnits="userSpaceOnUse" cx="223.9" cy="114.1" r="94.0"><stop offset="0" stop-opacity="1"/><stop offset=".05" stop-opacity=".924"/><stop offset=".15" stop-opacity=".79"/><stop offset=".3" stop-opacity=".618"/><stop offset=".5" stop-opacity=".428"/><stop offset=".75" stop-opacity=".225"/><stop offset="1" stop-opacity="0"/></radialGradient>
<radialGradient id="w44" gradientUnits="userSpaceOnUse" cx="223.9" cy="114.1" r="95.4"><stop offset="0" stop-opacity="1"/><stop offset=".05" stop-opacity=".923"/><stop offset=".15" stop-opacity=".787"/><stop offset=".3" stop-opacity=".615"/><stop offset=".5" stop-opacity=".425"/><stop offset=".75" stop-opacity=".223"/><stop offset="1" stop-opacity="0"/></radialGradient>
<radialGradient id="w45" gradientUnits="userSpaceOnUse" cx="223.9" cy="114.1" r="96.7"><stop offset="0" stop-opacity="1"/><stop offset=".05" stop-opacity=".922"/><stop offset=".15" stop-opacity=".785"/><stop offset=".3" stop-opacity=".612"/><stop offset=".5" stop-opacity=".422"/><stop offset=".75" stop-opacity=".221"/><stop offset="1" stop-opacity="0"/></radialGradient>
<radialGradient id="w46" gradientUnits="userSpaceOnUse" cx="223.9" cy="114.1" r="98.2"><stop offset="0" stop-opacity="1"/><stop offset=".05" stop-opacity=".921"/><stop offset=".15" stop-opacity=".783"/><stop offset=".3" stop-opacity=".609"/><stop offset=".5" stop-opacity=".419"/><stop offset=".75" stop-opacity=".219"/><stop offset="1" stop-opacity="0"/></radialGradient>
<radialGradient id="w47" gradientUnits="userSpaceOnUse" cx="223.9" cy="114.1" r="99.7"><stop offset="0" stop-opacity="1"/><stop offset=".05" stop-opacity=".92"/><stop offset=".15" stop-opacity=".78"/><stop offset=".3" stop-opacity=".605"/><stop offset=".5" stop-opacity=".416"/><stop offset=".75" stop-opacity=".217"/><stop offset="1" stop-opacity="0"/></radialGradient>
<radialGradient id="w48" gradientUnits="userSpaceOnUse" cx="223.9" cy="114.1" r="101.4"><stop offset="0" stop-opacity="1"/><stop offset=".05" stop-opacity=".919"/><stop offset=".15" stop-opacity=".778"/><stop offset=".3" stop-opacity=".602"/><stop offset=".5" stop-opacity=".412"/><stop offset=".75" stop-opacity=".215"/><stop offset="1" stop-opacity="0"/></radialGradient>
<radialGradient id="w49" gradientUnits="userSpaceOnUse" cx="223.9" cy="114.1" r="103.1"><stop offset="0" stop-opacity="1"/><stop offset=".05" stop-opacity=".918"/><stop offset=".15" stop-opacity=".775"/><stop offset=".3" stop-opacity=".599"/><stop offset=".5" stop-opacity=".409"/><stop offset=".75" stop-opacity=".213"/><stop offset="1" stop-opacity="0"/></radialGradient>
<radialGradient id="w50" gradientUnits="userSpaceOnUse" cx="223.9" cy="114.1" r="104.8"><stop offset="0" stop-opacity="1"/><stop offset=".05" stop-opacity=".917"/><stop offset=".15" stop-opacity=".772"/><stop offset=".3" stop-opacity=".595"/><stop offset=".5" stop-opacity=".406"/><stop offset=".75" stop-opacity=".211"/><stop offset="1" stop-opacity="0"/></radialGradient>
<radialGradient id="w51" gradientUnits="userSpaceOnUse" cx="223.9" cy="114.1" r="106.7"><stop offset="0" stop-opacity="1"/><stop offset=".05" stop-opacity=".916"/><stop offset=".15" stop-opacity=".77"/><stop offset=".3" stop-opacity=".591"/><stop offset=".5" stop-opacity=".402"/><stop offset=".75" stop-opacity=".208"/><stop offset="1" stop-opacity="0"/></radialGradient>
<radialGradient id="w52" gradientUnits="userSpaceOnUse" cx="223.9" cy="114.1" r="108.7"><stop offset="0" stop-opacity="1"/><stop offset=".05" stop-opacity=".914"/><stop offset=".15" stop-opacity=".767"/><stop offset=".3" stop-opacity=".588"/><stop offset=".5" stop-opacity=".399"/><stop offset=".75" stop-opacity=".206"/><stop offset="1" stop-opacity="0"/></radialGradient>
<radialGradient id="w53" gradientUnits="userSpaceOnUse" cx="223.9" cy="114.1" r="110.8"><stop offset="0" stop-opacity="1"/><stop offset=".05" stop-opacity=".913"/><stop offset=".15" stop-opacity=".764"/><stop offset=".3" stop-opacity=".584"/><stop offset=".5" stop-opacity=".395"/><stop offset=".75" stop-opacity=".204"/><stop offset="1" stop-opacity="0"/></radialGradient>
<radialGradient id="w54" gradientUnits="userSpaceOnUse" cx="223.9" cy="114.1" r="113.0"><stop offset="0" stop-opacity="1"/><stop offset=".05" stop-opacity=".912"/><stop offset=".15" stop-opacity=".761"/><stop offset=".3" stop-opacity=".58"/><stop offset=".5" stop-opacity=".392"/><stop offset=".75" stop-opacity=".202"/><stop offset="1" stop-opacity="0"/></radialGradient>
<radialGradient id="w55" gradientUnits="userSpaceOnUse" cx="223.9" cy="114.1" r="115.4"><stop offset="0" stop-opacity="1"/><stop offset=".05" stop-opacity=".91"/><stop offset=".15" stop-opacity=".758"/><stop offset=".3" stop-opacity=".576"/><stop offset=".5" stop-opacity=".388"/><stop offset=".75" stop-opacity=".199"/><stop offset="1" stop-opacity="0"/></radialGradient>
<radialGradient id="w56" gradientUnits="userSpaceOnUse" cx="223.9" cy="114.1" r="117.9"><stop offset="0" stop-opacity="1"/><stop offset=".05" stop-opacity=".909"/><stop offset=".15" stop-opacity=".755"/><stop offset=".3" stop-opacity=".572"/><stop offset=".5" stop-opacity=".384"/><stop offset=".75" stop-opacity=".197"/><stop offset="1" stop-opacity="0"/></radialGradient>
<radialGradient id="w57" gradientUnits="userSpaceOnUse" cx="223.9" cy="114.1" r="120.5"><stop offset="0" stop-opacity="1"/><stop offset=".05" stop-opacity=".908"/><stop offset=".15" stop-opacity=".752"/><stop offset=".3" stop-opacity=".568"/><stop offset=".5" stop-opacity=".381"/><stop offset=".75" stop-opacity=".195"/><stop offset="1" stop-opacity="0"/></radialGradient>
<radialGradient id="w58" gradientUnits="userSpaceOnUse" cx="223.9" cy="114.1" r="123.3"><stop offset="0" stop-opacity="1"/><stop offset=".05" stop-opacity=".906"/><stop offset=".15" stop-opacity=".748"/><stop offset=".3" stop-opacity=".564"/><stop offset=".5" stop-opacity=".377"/><stop offset=".75" stop-opacity=".192"/><stop offset="1" stop-opacity="0"/></radialGradient>
<radialGradient id="w59" gradientUnits="userSpaceOnUse" cx="223.9" cy="114.1" r="126.2"><stop offset="0" stop-opacity="1"/><stop offset=".05" stop-opacity=".904"/><stop offset=".15" stop-opacity=".745"/><stop offset=".3" stop-opacity=".56"/><stop offset=".5" stop-opacity=".373"/><stop offset=".75" stop-opacity=".19"/><stop offset="1" stop-opacity="0"/></radialGradient>
<radialGradient id="w60" gradientUnits="userSpaceOnUse" cx="223.9" cy="114.1" r="129.4"><stop offset="0" stop-opacity="1"/><stop offset=".05" stop-opacity=".903"/><stop offset=".15" stop-opacity=".741"/><stop offset=".3" stop-opacity=".555"/><stop offset=".5" stop-opacity=".369"/><stop offset=".75" stop-opacity=".187"/><stop offset="1" stop-opacity="0"/></radialGradient>
<radialGradient id="w61" gradientUnits="userSpaceOnUse" cx="223.9" cy="114.1" r="132.7"><stop offset="0" stop-opacity="1"/><stop offset=".05" stop-opacity=".901"/><stop offset=".15" stop-opacity=".737"/><stop offset=".3" stop-opacity=".55"/><stop offset=".5" stop-opacity=".365"/><stop offset=".75" stop-opacity=".185"/><stop offset="1" stop-opacity="0"/></radialGradient>
<radialGradient id="w62" gradientUnits="userSpaceOnUse" cx="223.9" cy="114.1" r="136.3"><stop offset="0" stop-opacity="1"/><stop offset=".05" stop-opacity=".899"/><stop offset=".15" stop-opacity=".734"/><stop offset=".3" stop-opacity=".546"/><stop offset=".5" stop-opacity=".36"/><stop offset=".75" stop-opacity=".182"/><stop offset="1" stop-opacity="0"/></radialGradient>
<radialGradient id="w63" gradientUnits="userSpaceOnUse" cx="223.9" cy="114.1" r="140.1"><stop offset="0" stop-opacity="1"/><stop offset=".05" stop-opacity=".897"/><stop offset=".15" stop-opacity=".729"/><stop offset=".3" stop-opacity=".541"/><stop offset=".5" stop-opacity=".356"/><stop offset=".75" stop-opacity=".179"/><stop offset="1" stop-opacity="0"/></radialGradient>
<radialGradient id="w64" gradientUnits="userSpaceOnUse" cx="223.9" cy="114.1" r="144.2"><stop offset="0" stop-opacity="1"/><stop offset=".05" stop-opacity=".895"/><stop offset=".15" stop-opacity=".725"/><stop offset=".3" stop-opacity=".536"/><stop offset=".5" stop-opacity=".351"/><stop offset=".75" stop-opacity=".177"/><stop offset="1" stop-opacity="0"/></radialGradient>
<radialGradient id="w65" gradientUnits="userSpaceOnUse" cx="223.9" cy="114.1" r="148.6"><stop offset="0" stop-opacity="1"/><stop offset=".05" stop-opacity=".893"/><stop offset=".15" stop-opacity=".721"/><stop offset=".3" stop-opacity=".53"/><stop offset=".5" stop-opacity=".347"/><stop offset=".75" stop-opacity=".174"/><stop offset="1" stop-opacity="0"/></radialGradient>
<radialGradient id="w66" gradientUnits="userSpaceOnUse" cx="223.9" cy="114.1" r="153.2"><stop offset="0" stop-opacity="1"/><stop offset=".05" stop-opacity=".89"/><stop offset=".15" stop-opacity=".716"/><stop offset=".3" stop-opacity=".525"/><stop offset=".5" stop-opacity=".342"/><stop offset=".75" stop-opacity=".171"/><stop offset="1" stop-opacity="0"/></radialGradient>
<radialGradient id="w67" gradientUnits="userSpaceOnUse" cx="223.9" cy="114.1" r="158.3"><stop offset="0" stop-opacity="1"/><stop offset=".05" stop-opacity=".888"/><stop offset=".15" stop-opacity=".711"/><stop offset=".3" stop-opacity=".519"/><stop offset=".5" stop-opacity=".337"/><stop offset=".75" stop-opacity=".168"/><stop offset="1" stop-opacity="0"/></radialGradient>
<radialGradient id="w68" gradientUnits="userSpaceOnUse" cx="223.9" cy="114.1" r="163.7"><stop offset="0" stop-opacity="1"/><stop offset=".05" stop-opacity=".885"/><stop offset=".15" stop-opacity=".706"/><stop offset=".3" stop-opacity=".513"/><stop offset=".5" stop-opacity=".332"/><stop offset=".75" stop-opacity=".165"/><stop offset="1" stop-opacity="0"/></radialGradient>
<radialGradient id="w69" gradientUnits="userSpaceOnUse" cx="223.9" cy="114.1" r="169.6"><stop offset="0" stop-opacity="1"/><stop offset=".05" stop-opacity=".883"/><stop offset=".15" stop-opacity=".701"/><stop offset=".3" stop-opacity=".507"/><stop offset=".5" stop-opacity=".327"/><stop offset=".75" stop-opacity=".162"/><stop offset="1" stop-opacity="0"/></radialGradient>
<radialGradient id="w70" gradientUnits="userSpaceOnUse" cx="223.9" cy="114.1" r="175.9"><stop offset="0" stop-opacity="1"/><stop offset=".05" stop-opacity=".88"/><stop offset=".15" stop-opacity=".695"/><stop offset=".3" stop-opacity=".5"/><stop offset=".5" stop-opacity=".321"/><stop offset=".75" stop-opacity=".159"/><stop offset="1" stop-opacity="0"/></radialGradient>
<radialGradient id="w71" gradientUnits="userSpaceOnUse" cx="223.9" cy="114.1" r="182.9"><stop offset="0" stop-opacity="1"/><stop offset=".05" stop-opacity=".877"/><stop offset=".15" stop-opacity=".689"/><stop offset=".3" stop-opacity=".494"/><stop offset=".5" stop-opacity=".316"/><stop offset=".75" stop-opacity=".156"/><stop offset="1" stop-opacity="0"/></radialGradient>
<radialGradient id="w72" gradientUnits="userSpaceOnUse" cx="223.9" cy="114.1" r="190.4"><stop offset="0" stop-opacity="1"/><stop offset=".05" stop-opacity=".873"/><stop offset=".15" stop-opacity=".682"/><stop offset=".3" stop-opacity=".486"/><stop offset=".5" stop-opacity=".31"/><stop offset=".75" stop-opacity=".152"/><stop offset="1" stop-opacity="0"/></radialGradient>
<radialGradient id="w73" gradientUnits="userSpaceOnUse" cx="223.9" cy="114.1" r="198.7"><stop offset="0" stop-opacity="1"/><stop offset=".05" stop-opacity=".87"/><stop offset=".15" stop-opacity=".676"/><stop offset=".3" stop-opacity=".479"/><stop offset=".5" stop-opacity=".304"/><stop offset=".75" stop-opacity=".149"/><stop offset="1" stop-opacity="0"/></radialGradient>
<radialGradient id="w74" gradientUnits="userSpaceOnUse" cx="223.9" cy="114.1" r="207.7"><stop offset="0" stop-opacity="1"/><stop offset=".05" stop-opacity=".866"/><stop offset=".15" stop-opacity=".668"/><stop offset=".3" stop-opacity=".471"/><stop offset=".5" stop-opacity=".298"/><stop offset=".75" stop-opacity=".145"/><stop offset="1" stop-opacity="0"/></radialGradient>
<radialGradient id="w75" gradientUnits="userSpaceOnUse" cx="223.9" cy="114.1" r="217.7"><stop offset="0" stop-opacity="1"/><stop offset=".05" stop-opacity=".861"/><stop offset=".15" stop-opacity=".661"/><stop offset=".3" stop-opacity=".463"/><stop offset=".5" stop-opacity=".291"/><stop offset=".75" stop-opacity=".142"/><stop offset="1" stop-opacity="0"/></radialGradient>
<radialGradient id="w76" gradientUnits="userSpaceOnUse" cx="223.9" cy="114.1" r="228.8"><stop offset="0" stop-opacity="1"/><stop offset=".05" stop-opacity=".857"/><stop offset=".15" stop-opacity=".652"/><stop offset=".3" stop-opacity=".454"/><stop offset=".5" stop-opacity=".284"/><stop offset=".75" stop-opacity=".138"/><stop offset="1" stop-opacity="0"/></radialGradient>
<radialGradient id="w77" gradientUnits="userSpaceOnUse" cx="223.9" cy="114.1" r="241.2"><stop offset="0" stop-opacity="1"/><stop offset=".05" stop-opacity=".852"/><stop offset=".15" stop-opacity=".643"/><stop offset=".3" stop-opacity=".445"/><stop offset=".5" stop-opacity=".277"/><stop offset=".75" stop-opacity=".134"/><stop offset="1" stop-opacity="0"/></radialGradient>
<radialGradient id="w78" gradientUnits="userSpaceOnUse" cx="223.9" cy="114.1" r="255.0"><stop offset="0" stop-opacity="1"/><stop offset=".05" stop-opacity=".846"/><stop offset=".15" stop-opacity=".634"/><stop offset=".3" stop-opacity=".435"/><stop offset=".5" stop-opacity=".27"/><stop offset=".75" stop-opacity=".13"/><stop offset="1" stop-opacity="0"/></radialGradient>
<radialGradient id="w79" gradientUnits="userSpaceOnUse" cx="223.9" cy="114.1" r="270.7"><stop offset="0" stop-opacity="1"/><stop offset=".05" stop-opacity=".84"/><stop offset=".15" stop-opacity=".623"/><stop offset=".3" stop-opacity=".425"/><stop offset=".5" stop-opacity=".262"/><stop offset=".75" stop-opacity=".125"/><stop offset="1" stop-opacity="0"/></radialGradient>
<radialGradient id="w80" gradientUnits="userSpaceOnUse" cx="223.9" cy="114.1" r="284.3"><stop offset="0" stop-opacity="1"/><stop offset=".05" stop-opacity=".835"/><stop offset=".15" stop-opacity=".615"/><stop offset=".3" stop-opacity=".416"/><stop offset=".5" stop-opacity=".255"/><stop offset=".75" stop-opacity=".122"/><stop offset="1" stop-opacity="0"/></radialGradient>
<radialGradient id="w81" gradientUnits="userSpaceOnUse" cx="223.9" cy="114.1" r="288.0"><stop offset="0" stop-opacity="1"/><stop offset=".05" stop-opacity=".833"/><stop offset=".15" stop-opacity=".612"/><stop offset=".3" stop-opacity=".414"/><stop offset=".5" stop-opacity=".254"/><stop offset=".75" stop-opacity=".121"/><stop offset="1" stop-opacity="0"/></radialGradient>
<radialGradient id="w82" gradientUnits="userSpaceOnUse" cx="223.9" cy="114.1" r="283.2"><stop offset="0" stop-opacity="1"/><stop offset=".05" stop-opacity=".835"/><stop offset=".15" stop-opacity=".615"/><stop offset=".3" stop-opacity=".417"/><stop offset=".5" stop-opacity=".256"/><stop offset=".75" stop-opacity=".122"/><stop offset="1" stop-opacity="0"/></radialGradient>
<radialGradient id="w83" gradientUnits="userSpaceOnUse" cx="223.9" cy="114.1" r="276.9"><stop offset="0" stop-opacity="1"/><stop offset=".05" stop-opacity=".838"/><stop offset=".15" stop-opacity=".62"/><stop offset=".3" stop-opacity=".421"/><stop offset=".5" stop-opacity=".259"/><stop offset=".75" stop-opacity=".124"/><stop offset="1" stop-opacity="0"/></radialGradient>
<radialGradient id="w84" gradientUnits="userSpaceOnUse" cx="223.9" cy="114.1" r="270.9"><stop offset="0" stop-opacity="1"/><stop offset=".05" stop-opacity=".84"/><stop offset=".15" stop-opacity=".623"/><stop offset=".3" stop-opacity=".425"/><stop offset=".5" stop-opacity=".262"/><stop offset=".75" stop-opacity=".125"/><stop offset="1" stop-opacity="0"/></radialGradient>
<radialGradient id="w85" gradientUnits="userSpaceOnUse" cx="223.9" cy="114.1" r="265.2"><stop offset="0" stop-opacity="1"/><stop offset=".05" stop-opacity=".842"/><stop offset=".15" stop-opacity=".627"/><stop offset=".3" stop-opacity=".429"/><stop offset=".5" stop-opacity=".265"/><stop offset=".75" stop-opacity=".127"/><stop offset="1" stop-opacity="0"/></radialGradient>
<radialGradient id="w86" gradientUnits="userSpaceOnUse" cx="223.9" cy="114.1" r="259.9"><stop offset="0" stop-opacity="1"/><stop offset=".05" stop-opacity=".845"/><stop offset=".15" stop-opacity=".631"/><stop offset=".3" stop-opacity=".432"/><stop offset=".5" stop-opacity=".267"/><stop offset=".75" stop-opacity=".129"/><stop offset="1" stop-opacity="0"/></radialGradient>
<radialGradient id="w87" gradientUnits="userSpaceOnUse" cx="223.9" cy="114.1" r="254.8"><stop offset="0" stop-opacity="1"/><stop offset=".05" stop-opacity=".847"/><stop offset=".15" stop-opacity=".635"/><stop offset=".3" stop-opacity=".436"/><stop offset=".5" stop-opacity=".27"/><stop offset=".75" stop-opacity=".13"/><stop offset="1" stop-opacity="0"/></radialGradient>
<radialGradient id="w88" gradientUnits="userSpaceOnUse" cx="223.9" cy="114.1" r="250.1"><stop offset="0" stop-opacity="1"/><stop offset=".05" stop-opacity=".849"/><stop offset=".15" stop-opacity=".638"/><stop offset=".3" stop-opacity=".44"/><stop offset=".5" stop-opacity=".273"/><stop offset=".75" stop-opacity=".132"/><stop offset="1" stop-opacity="0"/></radialGradient>
<radialGradient id="w89" gradientUnits="userSpaceOnUse" cx="223.9" cy="114.1" r="245.5"><stop offset="0" stop-opacity="1"/><stop offset=".05" stop-opacity=".851"/><stop offset=".15" stop-opacity=".642"/><stop offset=".3" stop-opacity=".443"/><stop offset=".5" stop-opacity=".276"/><stop offset=".75" stop-opacity=".133"/><stop offset="1" stop-opacity="0"/></radialGradient>
<radialGradient id="w90" gradientUnits="userSpaceOnUse" cx="223.9" cy="114.1" r="241.2"><stop offset="0" stop-opacity="1"/><stop offset=".05" stop-opacity=".853"/><stop offset=".15" stop-opacity=".645"/><stop offset=".3" stop-opacity=".447"/><stop offset=".5" stop-opacity=".278"/><stop offset=".75" stop-opacity=".135"/><stop offset="1" stop-opacity="0"/></radialGradient>
<radialGradient id="w91" gradientUnits="userSpaceOnUse" cx="223.9" cy="114.1" r="237.1"><stop offset="0" stop-opacity="1"/><stop offset=".05" stop-opacity=".855"/><stop offset=".15" stop-opacity=".648"/><stop offset=".3" stop-opacity=".45"/><stop offset=".5" stop-opacity=".281"/><stop offset=".75" stop-opacity=".136"/><stop offset="1" stop-opacity="0"/></radialGradient>
<radialGradient id="w92" gradientUnits="userSpaceOnUse" cx="223.9" cy="114.1" r="233.2"><stop offset="0" stop-opacity="1"/><stop offset=".05" stop-opacity=".856"/><stop offset=".15" stop-opacity=".652"/><stop offset=".3" stop-opacity=".453"/><stop offset=".5" stop-opacity=".284"/><stop offset=".75" stop-opacity=".137"/><stop offset="1" stop-opacity="0"/></radialGradient>
<radialGradient id="w93" gradientUnits="userSpaceOnUse" cx="223.9" cy="114.1" r="229.6"><stop offset="0" stop-opacity="1"/><stop offset=".05" stop-opacity=".858"/><stop offset=".15" stop-opacity=".655"/><stop offset=".3" stop-opacity=".457"/><stop offset=".5" stop-opacity=".286"/><stop offset=".75" stop-opacity=".139"/><stop offset="1" stop-opacity="0"/></radialGradient>
<radialGradient id="w94" gradientUnits="userSpaceOnUse" cx="223.9" cy="114.1" r="226.1"><stop offset="0" stop-opacity="1"/><stop offset=".05" stop-opacity=".86"/><stop offset=".15" stop-opacity=".658"/><stop offset=".3" stop-opacity=".46"/><stop offset=".5" stop-opacity=".289"/><stop offset=".75" stop-opacity=".14"/><stop offset="1" stop-opacity="0"/></radialGradient>
<radialGradient id="w95" gradientUnits="userSpaceOnUse" cx="223.9" cy="114.1" r="222.7"><stop offset="0" stop-opacity="1"/><stop offset=".05" stop-opacity=".862"/><stop offset=".15" stop-opacity=".661"/><stop offset=".3" stop-opacity=".463"/><stop offset=".5" stop-opacity=".291"/><stop offset=".75" stop-opacity=".142"/><stop offset="1" stop-opacity="0"/></radialGradient>
<radialGradient id="w96" gradientUnits="userSpaceOnUse" cx="223.9" cy="114.1" r="219.6"><stop offset="0" stop-opacity="1"/><stop offset=".05" stop-opacity=".863"/><stop offset=".15" stop-opacity=".664"/><stop offset=".3" stop-opacity=".466"/><stop offset=".5" stop-opacity=".294"/><stop offset=".75" stop-opacity=".143"/><stop offset="1" stop-opacity="0"/></radialGradient>
<radialGradient id="w97" gradientUnits="userSpaceOnUse" cx="223.9" cy="114.1" r="216.5"><stop offset="0" stop-opacity="1"/><stop offset=".05" stop-opacity=".865"/><stop offset=".15" stop-opacity=".667"/><stop offset=".3" stop-opacity=".47"/><stop offset=".5" stop-opacity=".296"/><stop offset=".75" stop-opacity=".145"/><stop offset="1" stop-opacity="0"/></radialGradient>
<radialGradient id="w98" gradientUnits="userSpaceOnUse" cx="223.9" cy="114.1" r="213.7"><stop offset="0" stop-opacity="1"/><stop offset=".05" stop-opacity=".866"/><stop offset=".15" stop-opacity=".67"/><stop offset=".3" stop-opacity=".473"/><stop offset=".5" stop-opacity=".299"/><stop offset=".75" stop-opacity=".146"/><stop offset="1" stop-opacity="0"/></radialGradient>
<radialGradient id="w99" gradientUnits="userSpaceOnUse" cx="223.9" cy="114.1" r="210.9"><stop offset="0" stop-opacity="1"/><stop offset=".05" stop-opacity=".868"/><stop offset=".15" stop-opacity=".673"/><stop offset=".3" stop-opacity=".476"/><stop offset=".5" stop-opacity=".301"/><stop offset=".75" stop-opacity=".147"/><stop offset="1" stop-opacity="0"/></radialGradient>
<radialGradient id="w100" gradientUnits="userSpaceOnUse" cx="223.9" cy="114.1" r="208.3"><stop offset="0" stop-opacity="1"/><stop offset=".05" stop-opacity=".869"/><stop offset=".15" stop-opacity=".675"/><stop offset=".3" stop-opacity=".479"/><stop offset=".5" stop-opacity=".304"/><stop offset=".75" stop-opacity=".149"/><stop offset="1" stop-opacity="0"/></radialGradient>
<radialGradient id="w101" gradientUnits="userSpaceOnUse" cx="223.9" cy="114.1" r="205.9"><stop offset="0" stop-opacity="1"/><stop offset=".05" stop-opacity=".871"/><stop offset=".15" stop-opacity=".678"/><stop offset=".3" stop-opacity=".482"/><stop offset=".5" stop-opacity=".306"/><stop offset=".75" stop-opacity=".15"/><stop offset="1" stop-opacity="0"/></radialGradient>
<radialGradient id="w102" gradientUnits="userSpaceOnUse" cx="223.9" cy="114.1" r="203.5"><stop offset="0" stop-opacity="1"/><stop offset=".05" stop-opacity=".872"/><stop offset=".15" stop-opacity=".681"/><stop offset=".3" stop-opacity=".485"/><stop offset=".5" stop-opacity=".309"/><stop offset=".75" stop-opacity=".151"/><stop offset="1" stop-opacity="0"/></radialGradient>
<radialGradient id="w103" gradientUnits="userSpaceOnUse" cx="223.9" cy="114.1" r="201.3"><stop offset="0" stop-opacity="1"/><stop offset=".05" stop-opacity=".874"/><stop offset=".15" stop-opacity=".683"/><stop offset=".3" stop-opacity=".488"/><stop offset=".5" stop-opacity=".311"/><stop offset=".75" stop-opacity=".153"/><stop offset="1" stop-opacity="0"/></radialGradient>
<radialGradient id="w104" gradientUnits="userSpaceOnUse" cx="223.9" cy="114.1" r="199.1"><stop offset="0" stop-opacity="1"/><stop offset=".05" stop-opacity=".875"/><stop offset=".15" stop-opacity=".686"/><stop offset=".3" stop-opacity=".491"/><stop offset=".5" stop-opacity=".313"/><stop offset=".75" stop-opacity=".154"/><stop offset="1" stop-opacity="0"/></radialGradient>
<radialGradient id="w105" gradientUnits="userSpaceOnUse" cx="223.9" cy="114.1" r="197.1"><stop offset="0" stop-opacity="1"/><stop offset=".05" stop-opacity=".877"/><stop offset=".15" stop-opacity=".689"/><stop offset=".3" stop-opacity=".494"/><stop offset=".5" stop-opacity=".316"/><stop offset=".75" stop-opacity=".156"/><stop offset="1" stop-opacity="0"/></radialGradient>
<radialGradient id="w106" gradientUnits="userSpaceOnUse" cx="223.9" cy="114.1" r="195.2"><stop offset="0" stop-opacity="1"/><stop offset=".05" stop-opacity=".878"/><stop offset=".15" stop-opacity=".691"/><stop offset=".3" stop-opacity=".496"/><stop offset=".5" stop-opacity=".318"/><stop offset=".75" stop-opacity=".157"/><stop offset="1" stop-opacity="0"/></radialGradient>
<radialGradient id="w107" gradientUnits="userSpaceOnUse" cx="223.9" cy="114.1" r="193.4"><stop offset="0" stop-opacity="1"/><stop offset=".05" stop-opacity=".879"/><stop offset=".15" stop-opacity=".694"/><stop offset=".3" stop-opacity=".499"/><stop offset=".5" stop-opacity=".321"/><stop offset=".75" stop-opacity=".158"/><stop offset="1" stop-opacity="0"/></radialGradient>
<radialGradient id="w108" gradientUnits="userSpaceOnUse" cx="223.9" cy="114.1" r="191.6"><stop offset="0" stop-opacity="1"/><stop offset=".05" stop-opacity=".881"/><stop offset=".15" stop-opacity=".696"/><stop offset=".3" stop-opacity=".502"/><stop offset=".5" stop-opacity=".323"/><stop offset=".75" stop-opacity=".16"/><stop offset="1" stop-opacity="0"/></radialGradient>
<radialGradient id="w109" gradientUnits="userSpaceOnUse" cx="223.9" cy="114.1" r="190.0"><stop offset="0" stop-opacity="1"/><stop offset=".05" stop-opacity=".882"/><stop offset=".15" stop-opacity=".699"/><stop offset=".3" stop-opacity=".505"/><stop offset=".5" stop-opacity=".325"/><stop offset=".75" stop-opacity=".161"/><stop offset="1" stop-opacity="0"/></radialGradient>
<radialGradient id="w110" gradientUnits="userSpaceOnUse" cx="223.9" cy="114.1" r="188.4"><stop offset="0" stop-opacity="1"/><stop offset=".05" stop-opacity=".883"/><stop offset=".15" stop-opacity=".701"/><stop offset=".3" stop-opacity=".508"/><stop offset=".5" stop-opacity=".328"/><stop offset=".75" stop-opacity=".162"/><stop offset="1" stop-opacity="0"/></radialGradient>
<radialGradient id="w111" gradientUnits="userSpaceOnUse" cx="223.9" cy="114.1" r="186.9"><stop offset="0" stop-opacity="1"/><stop offset=".05" stop-opacity=".884"/><stop offset=".15" stop-opacity=".704"/><stop offset=".3" stop-opacity=".511"/><stop offset=".5" stop-opacity=".33"/><stop offset=".75" stop-opacity=".164"/><stop offset="1" stop-opacity="0"/></radialGradient>
<radialGradient id="w112" gradientUnits="userSpaceOnUse" cx="223.9" cy="114.1" r="185.5"><stop offset="0" stop-opacity="1"/><stop offset=".05" stop-opacity=".886"/><stop offset=".15" stop-opacity=".706"/><stop offset=".3" stop-opacity=".513"/><stop offset=".5" stop-opacity=".332"/><stop offset=".75" stop-opacity=".165"/><stop offset="1" stop-opacity="0"/></radialGradient>
<radialGradient id="w113" gradientUnits="userSpaceOnUse" cx="223.9" cy="114.1" r="184.2"><stop offset="0" stop-opacity="1"/><stop offset=".05" stop-opacity=".887"/><stop offset=".15" stop-opacity=".709"/><stop offset=".3" stop-opacity=".516"/><stop offset=".5" stop-opacity=".335"/><stop offset=".75" stop-opacity=".167"/><stop offset="1" stop-opacity="0"/></radialGradient>
<radialGradient id="w114" gradientUnits="userSpaceOnUse" cx="223.9" cy="114.1" r="182.9"><stop offset="0" stop-opacity="1"/><stop offset=".05" stop-opacity=".888"/><stop offset=".15" stop-opacity=".711"/><stop offset=".3" stop-opacity=".519"/><stop offset=".5" stop-opacity=".337"/><stop offset=".75" stop-opacity=".168"/><stop offset="1" stop-opacity="0"/></radialGradient>
<radialGradient id="w115" gradientUnits="userSpaceOnUse" cx="223.9" cy="114.1" r="181.7"><stop offset="0" stop-opacity="1"/><stop offset=".05" stop-opacity=".889"/><stop offset=".15" stop-opacity=".714"/><stop offset=".3" stop-opacity=".522"/><stop offset=".5" stop-opacity=".34"/><stop offset=".75" stop-opacity=".17"/><stop offset="1" stop-opacity="0"/></radialGradient>
<radialGradient id="w116" gradientUnits="userSpaceOnUse" cx="223.9" cy="114.1" r="180.6"><stop offset="0" stop-opacity="1"/><stop offset=".05" stop-opacity=".89"/><stop offset=".15" stop-opacity=".716"/><stop offset=".3" stop-opacity=".525"/><stop offset=".5" stop-opacity=".342"/><stop offset=".75" stop-opacity=".171"/><stop offset="1" stop-opacity="0"/></radialGradient>
<radialGradient id="w117" gradientUnits="userSpaceOnUse" cx="223.9" cy="114.1" r="179.6"><stop offset="0" stop-opacity="1"/><stop offset=".05" stop-opacity=".892"/><stop offset=".15" stop-opacity=".718"/><stop offset=".3" stop-opacity=".528"/><stop offset=".5" stop-opacity=".344"/><stop offset=".75" stop-opacity=".172"/><stop offset="1" stop-opacity="0"/></radialGradient>
<radialGradient id="w118" gradientUnits="userSpaceOnUse" cx="223.9" cy="114.1" r="178.6"><stop offset="0" stop-opacity="1"/><stop offset=".05" stop-opacity=".893"/><stop offset=".15" stop-opacity=".721"/><stop offset=".3" stop-opacity=".53"/><stop offset=".5" stop-opacity=".347"/><stop offset=".75" stop-opacity=".174"/><stop offset="1" stop-opacity="0"/></radialGradient>
<radialGradient id="w119" gradientUnits="userSpaceOnUse" cx="223.9" cy="114.1" r="177.7"><stop offset="0" stop-opacity="1"/><stop offset=".05" stop-opacity=".894"/><stop offset=".15" stop-opacity=".723"/><stop offset=".3" stop-opacity=".533"/><stop offset=".5" stop-opacity=".349"/><stop offset=".75" stop-opacity=".175"/><stop offset="1" stop-opacity="0"/></radialGradient>
<radialGradient id="w120" gradientUnits="userSpaceOnUse" cx="223.9" cy="114.1" r="176.8"><stop offset="0" stop-opacity="1"/><stop offset=".05" stop-opacity=".895"/><stop offset=".15" stop-opacity=".725"/><stop offset=".3" stop-opacity=".536"/><stop offset=".5" stop-opacity=".352"/><stop offset=".75" stop-opacity=".177"/><stop offset="1" stop-opacity="0"/></radialGradient>
<radialGradient id="w121" gradientUnits="userSpaceOnUse" cx="223.9" cy="114.1" r="176.1"><stop offset="0" stop-opacity="1"/><stop offset=".05" stop-opacity=".896"/><stop offset=".15" stop-opacity=".728"/><stop offset=".3" stop-opacity=".539"/><stop offset=".5" stop-opacity=".354"/><stop offset=".75" stop-opacity=".178"/><stop offset="1" stop-opacity="0"/></radialGradient>
<radialGradient id="w122" gradientUnits="userSpaceOnUse" cx="223.9" cy="114.1" r="175.3"><stop offset="0" stop-opacity="1"/><stop offset=".05" stop-opacity=".897"/><stop offset=".15" stop-opacity=".73"/><stop offset=".3" stop-opacity=".542"/><stop offset=".5" stop-opacity=".357"/><stop offset=".75" stop-opacity=".18"/><stop offset="1" stop-opacity="0"/></radialGradient>
<radialGradient id="w123" gradientUnits="userSpaceOnUse" cx="223.9" cy="114.1" r="174.7"><stop offset="0" stop-opacity="1"/><stop offset=".05" stop-opacity=".898"/><stop offset=".15" stop-opacity=".733"/><stop offset=".3" stop-opacity=".545"/><stop offset=".5" stop-opacity=".359"/><stop offset=".75" stop-opacity=".181"/><stop offset="1" stop-opacity="0"/></radialGradient>
<radialGradient id="w124" gradientUnits="userSpaceOnUse" cx="223.9" cy="114.1" r="174.0"><stop offset="0" stop-opacity="1"/><stop offset=".05" stop-opacity=".9"/><stop offset=".15" stop-opacity=".735"/><stop offset=".3" stop-opacity=".547"/><stop offset=".5" stop-opacity=".362"/><stop offset=".75" stop-opacity=".183"/><stop offset="1" stop-opacity="0"/></radialGradient>
<radialGradient id="w125" gradientUnits="userSpaceOnUse" cx="223.9" cy="114.1" r="173.5"><stop offset="0" stop-opacity="1"/><stop offset=".05" stop-opacity=".901"/><stop offset=".15" stop-opacity=".737"/><stop offset=".3" stop-opacity=".55"/><stop offset=".5" stop-opacity=".364"/><stop offset=".75" stop-opacity=".184"/><stop offset="1" stop-opacity="0"/></radialGradient>
<radialGradient id="w126" gradientUnits="userSpaceOnUse" cx="223.9" cy="114.1" r="173.0"><stop offset="0" stop-opacity="1"/><stop offset=".05" stop-opacity=".902"/><stop offset=".15" stop-opacity=".74"/><stop offset=".3" stop-opacity=".553"/><stop offset=".5" stop-opacity=".367"/><stop offset=".75" stop-opacity=".186"/><stop offset="1" stop-opacity="0"/></radialGradient>
<radialGradient id="w127" gradientUnits="userSpaceOnUse" cx="223.9" cy="114.1" r="172.5"><stop offset="0" stop-opacity="1"/><stop offset=".05" stop-opacity=".903"/><stop offset=".15" stop-opacity=".742"/><stop offset=".3" stop-opacity=".556"/><stop offset=".5" stop-opacity=".37"/><stop offset=".75" stop-opacity=".188"/><stop offset="1" stop-opacity="0"/></radialGradient>
<radialGradient id="w128" gradientUnits="userSpaceOnUse" cx="223.9" cy="114.1" r="172.2"><stop offset="0" stop-opacity="1"/><stop offset=".05" stop-opacity=".904"/><stop offset=".15" stop-opacity=".744"/><stop offset=".3" stop-opacity=".559"/><stop offset=".5" stop-opacity=".372"/><stop offset=".75" stop-opacity=".189"/><stop offset="1" stop-opacity="0"/></radialGradient>
<radialGradient id="w129" gradientUnits="userSpaceOnUse" cx="223.9" cy="114.1" r="171.8"><stop offset="0" stop-opacity="1"/><stop offset=".05" stop-opacity=".905"/><stop offset=".15" stop-opacity=".747"/><stop offset=".3" stop-opacity=".562"/><stop offset=".5" stop-opacity=".375"/><stop offset=".75" stop-opacity=".191"/><stop offset="1" stop-opacity="0"/></radialGradient>
<radialGradient id="w130" gradientUnits="userSpaceOnUse" cx="223.9" cy="114.1" r="171.5"><stop offset="0" stop-opacity="1"/><stop offset=".05" stop-opacity=".906"/><stop offset=".15" stop-opacity=".749"/><stop offset=".3" stop-opacity=".565"/><stop offset=".5" stop-opacity=".378"/><stop offset=".75" stop-opacity=".193"/><stop offset="1" stop-opacity="0"/></radialGradient>
<radialGradient id="w131" gradientUnits="userSpaceOnUse" cx="223.9" cy="114.1" r="171.3"><stop offset="0" stop-opacity="1"/><stop offset=".05" stop-opacity=".907"/><stop offset=".15" stop-opacity=".752"/><stop offset=".3" stop-opacity=".568"/><stop offset=".5" stop-opacity=".381"/><stop offset=".75" stop-opacity=".194"/><stop offset="1" stop-opacity="0"/></radialGradient>
<radialGradient id="w132" gradientUnits="userSpaceOnUse" cx="223.9" cy="114.1" r="171.1"><stop offset="0" stop-opacity="1"/><stop offset=".05" stop-opacity=".909"/><stop offset=".15" stop-opacity=".754"/><stop offset=".3" stop-opacity=".571"/><stop offset=".5" stop-opacity=".383"/><stop offset=".75" stop-opacity=".196"/><stop offset="1" stop-opacity="0"/></radialGradient>
<radialGradient id="w133" gradientUnits="userSpaceOnUse" cx="223.9" cy="114.1" r="171.0"><stop offset="0" stop-opacity="1"/><stop offset=".05" stop-opacity=".91"/><stop offset=".15" stop-opacity=".756"/><stop offset=".3" stop-opacity=".574"/><stop offset=".5" stop-opacity=".386"/><stop offset=".75" stop-opacity=".198"/><stop offset="1" stop-opacity="0"/></radialGradient>
<radialGradient id="w134" gradientUnits="userSpaceOnUse" cx="223.9" cy="114.1" r="170.9"><stop offset="0" stop-opacity="1"/><stop offset=".05" stop-opacity=".911"/><stop offset=".15" stop-opacity=".759"/><stop offset=".3" stop-opacity=".577"/><stop offset=".5" stop-opacity=".389"/><stop offset=".75" stop-opacity=".2"/><stop offset="1" stop-opacity="0"/></radialGradient>
<radialGradient id="w135" gradientUnits="userSpaceOnUse" cx="223.9" cy="114.1" r="170.9"><stop offset="0" stop-opacity="1"/><stop offset=".05" stop-opacity=".912"/><stop offset=".15" stop-opacity=".761"/><stop offset=".3" stop-opacity=".58"/><stop offset=".5" stop-opacity=".392"/><stop offset=".75" stop-opacity=".202"/><stop offset="1" stop-opacity="0"/></radialGradient>
<radialGradient id="w136" gradientUnits="userSpaceOnUse" cx="223.9" cy="114.1" r="171.0"><stop offset="0" stop-opacity="1"/><stop offset=".05" stop-opacity=".912"/><stop offset=".15" stop-opacity=".761"/><stop offset=".3" stop-opacity=".58"/><stop offset=".5" stop-opacity=".392"/><stop offset=".75" stop-opacity=".201"/><stop offset="1" stop-opacity="0"/></radialGradient>
<radialGradient id="w137" gradientUnits="userSpaceOnUse" cx="223.9" cy="114.1" r="171.0"><stop offset="0" stop-opacity="1"/><stop offset=".05" stop-opacity=".911"/><stop offset=".15" stop-opacity=".759"/><stop offset=".3" stop-opacity=".577"/><stop offset=".5" stop-opacity=".389"/><stop offset=".75" stop-opacity=".2"/><stop offset="1" stop-opacity="0"/></radialGradient>
<radialGradient id="w138" gradientUnits="userSpaceOnUse" cx="223.9" cy="114.1" r="171.2"><stop offset="0" stop-opacity="1"/><stop offset=".05" stop-opacity=".91"/><stop offset=".15" stop-opacity=".757"/><stop offset=".3" stop-opacity=".574"/><stop offset=".5" stop-opacity=".386"/><stop offset=".75" stop-opacity=".198"/><stop offset="1" stop-opacity="0"/></radialGradient>
<radialGradient id="w139" gradientUnits="userSpaceOnUse" cx="223.9" cy="114.1" r="171.4"><stop offset="0" stop-opacity="1"/><stop offset=".05" stop-opacity=".909"/><stop offset=".15" stop-opacity=".754"/><stop offset=".3" stop-opacity=".572"/><stop offset=".5" stop-opacity=".384"/><stop offset=".75" stop-opacity=".196"/><stop offset="1" stop-opacity="0"/></radialGradient>
<radialGradient id="w140" gradientUnits="userSpaceOnUse" cx="223.9" cy="114.1" r="171.6"><stop offset="0" stop-opacity="1"/><stop offset=".05" stop-opacity=".908"/><stop offset=".15" stop-opacity=".752"/><stop offset=".3" stop-opacity=".569"/><stop offset=".5" stop-opacity=".381"/><stop offset=".75" stop-opacity=".195"/><stop offset="1" stop-opacity="0"/></radialGradient>
<radialGradient id="w141" gradientUnits="userSpaceOnUse" cx="223.9" cy="114.1" r="171.9"><stop offset="0" stop-opacity="1"/><stop offset=".05" stop-opacity=".907"/><stop offset=".15" stop-opacity=".75"/><stop offset=".3" stop-opacity=".566"/><stop offset=".5" stop-opacity=".379"/><stop offset=".75" stop-opacity=".193"/><stop offset="1" stop-opacity="0"/></radialGradient>
<radialGradient id="w142" gradientUnits="userSpaceOnUse" cx="223.9" cy="114.1" r="172.2"><stop offset="0" stop-opacity="1"/><stop offset=".05" stop-opacity=".906"/><stop offset=".15" stop-opacity=".748"/><stop offset=".3" stop-opacity=".564"/><stop offset=".5" stop-opacity=".376"/><stop offset=".75" stop-opacity=".192"/><stop offset="1" stop-opacity="0"/></radialGradient>
<radialGradient id="w143" gradientUnits="userSpaceOnUse" cx="223.9" cy="114.1" r="172.7"><stop offset="0" stop-opacity="1"/><stop offset=".05" stop-opacity=".905"/><stop offset=".15" stop-opacity=".746"/><stop offset=".3" stop-opacity=".561"/><stop offset=".5" stop-opacity=".374"/><stop offset=".75" stop-opacity=".19"/><stop offset="1" stop-opacity="0"/></radialGradient>
<radialGradient id="w144" gradientUnits="userSpaceOnUse" cx="223.9" cy="114.1" r="173.1"><stop offset="0" stop-opacity="1"/><stop offset=".05" stop-opacity=".904"/><stop offset=".15" stop-opacity=".744"/><stop offset=".3" stop-opacity=".558"/><stop offset=".5" stop-opacity=".372"/><stop offset=".75" stop-opacity=".189"/><stop offset="1" stop-opacity="0"/></radialGradient>
<radialGradient id="w145" gradientUnits="userSpaceOnUse" cx="223.9" cy="114.1" r="173.6"><stop offset="0" stop-opacity="1"/><stop offset=".05" stop-opacity=".903"/><stop offset=".15" stop-opacity=".742"/><stop offset=".3" stop-opacity=".556"/><stop offset=".5" stop-opacity=".369"/><stop offset=".75" stop-opacity=".187"/><stop offset="1" stop-opacity="0"/></radialGradient>
<radialGradient id="w146" gradientUnits="userSpaceOnUse" cx="223.9" cy="114.1" r="174.2"><stop offset="0" stop-opacity="1"/><stop offset=".05" stop-opacity=".902"/><stop offset=".15" stop-opacity=".739"/><stop offset=".3" stop-opacity=".553"/><stop offset=".5" stop-opacity=".367"/><stop offset=".75" stop-opacity=".186"/><stop offset="1" stop-opacity="0"/></radialGradient>
<radialGradient id="w147" gradientUnits="userSpaceOnUse" cx="223.9" cy="114.1" r="174.8"><stop offset="0" stop-opacity="1"/><stop offset=".05" stop-opacity=".901"/><stop offset=".15" stop-opacity=".737"/><stop offset=".3" stop-opacity=".55"/><stop offset=".5" stop-opacity=".364"/><stop offset=".75" stop-opacity=".184"/><stop offset="1" stop-opacity="0"/></radialGradient>
<radialGradient id="w148" gradientUnits="userSpaceOnUse" cx="223.9" cy="114.1" r="175.5"><stop offset="0" stop-opacity="1"/><stop offset=".05" stop-opacity=".9"/><stop offset=".15" stop-opacity=".735"/><stop offset=".3" stop-opacity=".548"/><stop offset=".5" stop-opacity=".362"/><stop offset=".75" stop-opacity=".183"/><stop offset="1" stop-opacity="0"/></radialGradient>
<radialGradient id="w149" gradientUnits="userSpaceOnUse" cx="223.9" cy="114.1" r="176.2"><stop offset="0" stop-opacity="1"/><stop offset=".05" stop-opacity=".899"/><stop offset=".15" stop-opacity=".733"/><stop offset=".3" stop-opacity=".545"/><stop offset=".5" stop-opacity=".36"/><stop offset=".75" stop-opacity=".182"/><stop offset="1" stop-opacity="0"/></radialGradient>
<radialGradient id="w150" gradientUnits="userSpaceOnUse" cx="223.9" cy="114.1" r="177.0"><stop offset="0" stop-opacity="1"/><stop offset=".05" stop-opacity=".898"/><stop offset=".15" stop-opacity=".731"/><stop offset=".3" stop-opacity=".542"/><stop offset=".5" stop-opacity=".358"/><stop offset=".75" stop-opacity=".18"/><stop offset="1" stop-opacity="0"/></radialGradient>
<radialGradient id="w151" gradientUnits="userSpaceOnUse" cx="223.9" cy="114.1" r="177.9"><stop offset="0" stop-opacity="1"/><stop offset=".05" stop-opacity=".897"/><stop offset=".15" stop-opacity=".729"/><stop offset=".3" stop-opacity=".54"/><stop offset=".5" stop-opacity=".355"/><stop offset=".75" stop-opacity=".179"/><stop offset="1" stop-opacity="0"/></radialGradient>
<radialGradient id="w152" gradientUnits="userSpaceOnUse" cx="223.9" cy="114.1" r="178.8"><stop offset="0" stop-opacity="1"/><stop offset=".05" stop-opacity=".896"/><stop offset=".15" stop-opacity=".727"/><stop offset=".3" stop-opacity=".537"/><stop offset=".5" stop-opacity=".353"/><stop offset=".75" stop-opacity=".177"/><stop offset="1" stop-opacity="0"/></radialGradient>
<radialGradient id="w153" gradientUnits="userSpaceOnUse" cx="223.9" cy="114.1" r="179.8"><stop offset="0" stop-opacity="1"/><stop offset=".05" stop-opacity=".895"/><stop offset=".15" stop-opacity=".724"/><stop offset=".3" stop-opacity=".535"/><stop offset=".5" stop-opacity=".351"/><stop offset=".75" stop-opacity=".176"/><stop offset="1" stop-opacity="0"/></radialGradient>
<radialGradient id="w154" gradientUnits="userSpaceOnUse" cx="223.9" cy="114.1" r="180.9"><stop offset="0" stop-opacity="1"/><stop offset=".05" stop-opacity=".894"/><stop offset=".15" stop-opacity=".722"/><stop offset=".3" stop-opacity=".532"/><stop offset=".5" stop-opacity=".348"/><stop offset=".75" stop-opacity=".175"/><stop offset="1" stop-opacity="0"/></radialGradient>
<radialGradient id="w155" gradientUnits="userSpaceOnUse" cx="223.9" cy="114.1" r="182.0"><stop offset="0" stop-opacity="1"/><stop offset=".05" stop-opacity=".892"/><stop offset=".15" stop-opacity=".72"/><stop offset=".3" stop-opacity=".53"/><stop offset=".5" stop-opacity=".346"/><stop offset=".75" stop-opacity=".173"/><stop offset="1" stop-opacity="0"/></radialGradient>
<radialGradient id="w156" gradientUnits="userSpaceOnUse" cx="223.9" cy="114.1" r="183.2"><stop offset="0" stop-opacity="1"/><stop offset=".05" stop-opacity=".891"/><stop offset=".15" stop-opacity=".718"/><stop offset=".3" stop-opacity=".527"/><stop offset=".5" stop-opacity=".344"/><stop offset=".75" stop-opacity=".172"/><stop offset="1" stop-opacity="0"/></radialGradient>
<radialGradient id="w157" gradientUnits="userSpaceOnUse" cx="223.9" cy="114.1" r="184.5"><stop offset="0" stop-opacity="1"/><stop offset=".05" stop-opacity=".89"/><stop offset=".15" stop-opacity=".716"/><stop offset=".3" stop-opacity=".524"/><stop offset=".5" stop-opacity=".342"/><stop offset=".75" stop-opacity=".171"/><stop offset="1" stop-opacity="0"/></radialGradient>
<radialGradient id="w158" gradientUnits="userSpaceOnUse" cx="223.9" cy="114.1" r="185.8"><stop offset="0" stop-opacity="1"/><stop offset=".05" stop-opacity=".889"/><stop offset=".15" stop-opacity=".713"/><stop offset=".3" stop-opacity=".522"/><stop offset=".5" stop-opacity=".34"/><stop offset=".75" stop-opacity=".169"/><stop offset="1" stop-opacity="0"/></radialGradient>
<radialGradient id="w159" gradientUnits="userSpaceOnUse" cx="223.9" cy="114.1" r="187.3"><stop offset="0" stop-opacity="1"/><stop offset=".05" stop-opacity=".888"/><stop offset=".15" stop-opacity=".711"/><stop offset=".3" stop-opacity=".519"/><stop offset=".5" stop-opacity=".337"/><stop offset=".75" stop-opacity=".168"/><stop offset="1" stop-opacity="0"/></radialGradient>
<radialGradient id="w160" gradientUnits="userSpaceOnUse" cx="223.9" cy="114.1" r="188.8"><stop offset="0" stop-opacity="1"/><stop offset=".05" stop-opacity=".887"/><stop offset=".15" stop-opacity=".709"/><stop offset=".3" stop-opacity=".516"/><stop offset=".5" stop-opacity=".335"/><stop offset=".75" stop-opacity=".167"/><stop offset="1" stop-opacity="0"/></radialGradient>
<radialGradient id="w161" gradientUnits="userSpaceOnUse" cx="223.9" cy="114.1" r="190.4"><stop offset="0" stop-opacity="1"/><stop offset=".05" stop-opacity=".886"/><stop offset=".15" stop-opacity=".707"/><stop offset=".3" stop-opacity=".514"/><stop offset=".5" stop-opacity=".333"/><stop offset=".75" stop-opacity=".165"/><stop offset="1" stop-opacity="0"/></radialGradient>
<radialGradient id="w162" gradientUnits="userSpaceOnUse" cx="223.9" cy="114.1" r="192.0"><stop offset="0" stop-opacity="1"/><stop offset=".05" stop-opacity=".885"/><stop offset=".15" stop-opacity=".704"/><stop offset=".3" stop-opacity=".511"/><stop offset=".5" stop-opacity=".331"/><stop offset=".75" stop-opacity=".164"/><stop offset="1" stop-opacity="0"/></radialGradient>
<radialGradient id="w163" gradientUnits="userSpaceOnUse" cx="223.9" cy="114.1" r="193.8"><stop offset="0" stop-opacity="1"/><stop offset=".05" stop-opacity=".883"/><stop offset=".15" stop-opacity=".702"/><stop offset=".3" stop-opacity=".509"/><stop offset=".5" stop-opacity=".328"/><stop offset=".75" stop-opacity=".163"/><stop offset="1" stop-opacity="0"/></radialGradient>
<radialGradient id="w164" gradientUnits="userSpaceOnUse" cx="223.9" cy="114.1" r="195.7"><stop offset="0" stop-opacity="1"/><stop offset=".05" stop-opacity=".882"/><stop offset=".15" stop-opacity=".7"/><stop offset=".3" stop-opacity=".506"/><stop offset=".5" stop-opacity=".326"/><stop offset=".75" stop-opacity=".162"/><stop offset="1" stop-opacity="0"/></radialGradient>
<radialGradient id="w165" gradientUnits="userSpaceOnUse" cx="223.9" cy="114.1" r="197.6"><stop offset="0" stop-opacity="1"/><stop offset=".05" stop-opacity=".881"/><stop offset=".15" stop-opacity=".697"/><stop offset=".3" stop-opacity=".503"/><stop offset=".5" stop-opacity=".324"/><stop offset=".75" stop-opacity=".16"/><stop offset="1" stop-opacity="0"/></radialGradient>
<radialGradient id="w166" gradientUnits="userSpaceOnUse" cx="223.9" cy="114.1" r="199.7"><stop offset="0" stop-opacity="1"/><stop offset=".05" stop-opacity=".88"/><stop offset=".15" stop-opacity=".695"/><stop offset=".3" stop-opacity=".5"/><stop offset=".5" stop-opacity=".322"/><stop offset=".75" stop-opacity=".159"/><stop offset="1" stop-opacity="0"/></radialGradient>
<radialGradient id="w167" gradientUnits="userSpaceOnUse" cx="223.9" cy="114.1" r="201.8"><stop offset="0" stop-opacity="1"/><stop offset=".05" stop-opacity=".878"/><stop offset=".15" stop-opacity=".692"/><stop offset=".3" stop-opacity=".498"/><stop offset=".5" stop-opacity=".319"/><stop offset=".75" stop-opacity=".158"/><stop offset="1" stop-opacity="0"/></radialGradient>
<radialGradient id="w168" gradientUnits="userSpaceOnUse" cx="223.9" cy="114.1" r="204.1"><stop offset="0" stop-opacity="1"/><stop offset=".05" stop-opacity=".877"/><stop offset=".15" stop-opacity=".69"/><stop offset=".3" stop-opacity=".495"/><stop offset=".5" stop-opacity=".317"/><stop offset=".75" stop-opacity=".156"/><stop offset="1" stop-opacity="0"/></radialGradient>
<radialGradient id="w169" gradientUnits="userSpaceOnUse" cx="223.9" cy="114.1" r="206.5"><stop offset="0" stop-opacity="1"/><stop offset=".05" stop-opacity=".876"/><stop offset=".15" stop-opacity=".688"/><stop offset=".3" stop-opacity=".492"/><stop offset=".5" stop-opacity=".315"/><stop offset=".75" stop-opacity=".155"/><stop offset="1" stop-opacity="0"/></radialGradient>
<radialGradient id="w170" gradientUnits="userSpaceOnUse" cx="223.9" cy="114.1" r="209.0"><stop offset="0" stop-opacity="1"/><stop offset=".05" stop-opacity=".875"/><stop offset=".15" stop-opacity=".685"/><stop offset=".3" stop-opacity=".489"/><stop offset=".5" stop-opacity=".312"/><stop offset=".75" stop-opacity=".154"/><stop offset="1" stop-opacity="0"/></radialGradient>
<radialGradient id="w171" gradientUnits="userSpaceOnUse" cx="223.9" cy="114.1" r="211.6"><stop offset="0" stop-opacity="1"/><stop offset=".05" stop-opacity=".873"/><stop offset=".15" stop-opacity=".682"/><stop offset=".3" stop-opacity=".486"/><stop offset=".5" stop-opacity=".31"/><stop offset=".75" stop-opacity=".152"/><stop offset="1" stop-opacity="0"/></radialGradient>
<radialGradient id="w172" gradientUnits="userSpaceOnUse" cx="223.9" cy="114.1" r="214.4"><stop offset="0" stop-opacity="1"/><stop offset=".05" stop-opacity=".872"/><stop offset=".15" stop-opacity=".68"/><stop offset=".3" stop-opacity=".484"/><stop offset=".5" stop-opacity=".308"/><stop offset=".75" stop-opacity=".151"/><stop offset="1" stop-opacity="0"/></radialGradient>
<radialGradient id="w173" gradientUnits="userSpaceOnUse" cx="223.9" cy="114.1" r="217.3"><stop offset="0" stop-opacity="1"/><stop offset=".05" stop-opacity=".87"/><stop offset=".15" stop-opacity=".677"/><stop offset=".3" stop-opacity=".481"/><stop offset=".5" stop-opacity=".305"/><stop offset=".75" stop-opacity=".15"/><stop offset="1" stop-opacity="0"/></radialGradient>
<radialGradient id="w174" gradientUnits="userSpaceOnUse" cx="223.9" cy="114.1" r="220.3"><stop offset="0" stop-opacity="1"/><stop offset=".05" stop-opacity=".869"/><stop offset=".15" stop-opacity=".674"/><stop offset=".3" stop-opacity=".478"/><stop offset=".5" stop-opacity=".303"/><stop offset=".75" stop-opacity=".148"/><stop offset="1" stop-opacity="0"/></radialGradient>
<radialGradient id="w175" gradientUnits="userSpaceOnUse" cx="223.9" cy="114.1" r="223.5"><stop offset="0" stop-opacity="1"/><stop offset=".05" stop-opacity=".867"/><stop offset=".15" stop-opacity=".672"/><stop offset=".3" stop-opacity=".475"/><stop offset=".5" stop-opacity=".3"/><stop offset=".75" stop-opacity=".147"/><stop offset="1" stop-opacity="0"/></radialGradient>
<radialGradient id="w176" gradientUnits="userSpaceOnUse" cx="223.9" cy="114.1" r="226.9"><stop offset="0" stop-opacity="1"/><stop offset=".05" stop-opacity=".866"/><stop offset=".15" stop-opacity=".669"/><stop offset=".3" stop-opacity=".472"/><stop offset=".5" stop-opacity=".298"/><stop offset=".75" stop-opacity=".145"/><stop offset="1" stop-opacity="0"/></radialGradient>
<radialGradient id="w177" gradientUnits="userSpaceOnUse" cx="223.9" cy="114.1" r="230.4"><stop offset="0" stop-opacity="1"/><stop offset=".05" stop-opacity=".864"/><stop offset=".15" stop-opacity=".666"/><stop offset=".3" stop-opacity=".469"/><stop offset=".5" stop-opacity=".296"/><stop offset=".75" stop-opacity=".144"/><stop offset="1" stop-opacity="0"/></radialGradient>
<radialGradient id="w178" gradientUnits="userSpaceOnUse" cx="223.9" cy="114.1" r="234.2"><stop offset="0" stop-opacity="1"/><stop offset=".05" stop-opacity=".863"/><stop offset=".15" stop-opacity=".663"/><stop offset=".3" stop-opacity=".465"/><stop offset=".5" stop-opacity=".293"/><stop offset=".75" stop-opacity=".143"/><stop offset="1" stop-opacity="0"/></radialGradient>
<radialGradient id="w179" gradientUnits="userSpaceOnUse" cx="223.9" cy="114.1" r="238.1"><stop offset="0" stop-opacity="1"/><stop offset=".05" stop-opacity=".861"/><stop offset=".15" stop-opacity=".66"/><stop offset=".3" stop-opacity=".462"/><stop offset=".5" stop-opacity=".291"/><stop offset=".75" stop-opacity=".141"/><stop offset="1" stop-opacity="0"/></radialGradient>
<radialGradient id="w180" gradientUnits="userSpaceOnUse" cx="223.9" cy="114.1" r="242.2"><stop offset="0" stop-opacity="1"/><stop offset=".05" stop-opacity=".859"/><stop offset=".15" stop-opacity=".657"/><stop offset=".3" stop-opacity=".459"/><stop offset=".5" stop-opacity=".288"/><stop offset=".75" stop-opacity=".14"/><stop offset="1" stop-opacity="0"/></radialGradient>
<radialGradient id="w181" gradientUnits="userSpaceOnUse" cx="223.9" cy="114.1" r="246.6"><stop offset="0" stop-opacity="1"/><stop offset=".05" stop-opacity=".857"/><stop offset=".15" stop-opacity=".654"/><stop offset=".3" stop-opacity=".456"/><stop offset=".5" stop-opacity=".285"/><stop offset=".75" stop-opacity=".138"/><stop offset="1" stop-opacity="0"/></radialGradient>
<radialGradient id="w182" gradientUnits="userSpaceOnUse" cx="223.9" cy="114.1" r="251.2"><stop offset="0" stop-opacity="1"/><stop offset=".05" stop-opacity=".856"/><stop offset=".15" stop-opacity=".65"/><stop offset=".3" stop-opacity=".452"/><stop offset=".5" stop-opacity=".283"/><stop offset=".75" stop-opacity=".137"/><stop offset="1" stop-opacity="0"/></radialGradient>
<radialGradient id="w183" gradientUnits="userSpaceOnUse" cx="223.9" cy="114.1" r="256.0"><stop offset="0" stop-opacity="1"/><stop offset=".05" stop-opacity=".854"/><stop offset=".15" stop-opacity=".647"/><stop offset=".3" stop-opacity=".449"/><stop offset=".5" stop-opacity=".28"/><stop offset=".75" stop-opacity=".135"/><stop offset="1" stop-opacity="0"/></radialGradient>
<radialGradient id="w184" gradientUnits="userSpaceOnUse" cx="223.9" cy="114.1" r="261.2"><stop offset="0" stop-opacity="1"/><stop offset=".05" stop-opacity=".852"/><stop offset=".15" stop-opacity=".644"/><stop offset=".3" stop-opacity=".445"/><stop offset=".5" stop-opacity=".277"/><stop offset=".75" stop-opacity=".134"/><stop offset="1" stop-opacity="0"/></radialGradient>
<radialGradient id="w185" gradientUnits="userSpaceOnUse" cx="223.9" cy="114.1" r="266.6"><stop offset="0" stop-opacity="1"/><stop offset=".05" stop-opacity=".85"/><stop offset=".15" stop-opacity=".64"/><stop offset=".3" stop-opacity=".442"/><stop offset=".5" stop-opacity=".275"/><stop offset=".75" stop-opacity=".132"/><stop offset="1" stop-opacity="0"/></radialGradient>
<radialGradient id="w186" gradientUnits="userSpaceOnUse" cx="223.9" cy="114.1" r="270.4"><stop offset="0" stop-opacity="1"/><stop offset=".05" stop-opacity=".848"/><stop offset=".15" stop-opacity=".638"/><stop offset=".3" stop-opacity=".439"/><stop offset=".5" stop-opacity=".273"/><stop offset=".75" stop-opacity=".131"/><stop offset="1" stop-opacity="0"/></radialGradient>
<radialGradient id="w187" gradientUnits="userSpaceOnUse" cx="223.9" cy="114.1" r="265.6"><stop offset="0" stop-opacity="1"/><stop offset=".05" stop-opacity=".85"/><stop offset=".15" stop-opacity=".641"/><stop offset=".3" stop-opacity=".442"/><stop offset=".5" stop-opacity=".275"/><stop offset=".75" stop-opacity=".133"/><stop offset="1" stop-opacity="0"/></radialGradient>
<radialGradient id="w188" gradientUnits="userSpaceOnUse" cx="223.9" cy="114.1" r="251.9"><stop offset="0" stop-opacity="1"/><stop offset=".05" stop-opacity=".855"/><stop offset=".15" stop-opacity=".65"/><stop offset=".3" stop-opacity=".451"/><stop offset=".5" stop-opacity=".282"/><stop offset=".75" stop-opacity=".137"/><stop offset="1" stop-opacity="0"/></radialGradient>
<radialGradient id="w189" gradientUnits="userSpaceOnUse" cx="223.9" cy="114.1" r="237.2"><stop offset="0" stop-opacity="1"/><stop offset=".05" stop-opacity=".861"/><stop offset=".15" stop-opacity=".659"/><stop offset=".3" stop-opacity=".462"/><stop offset=".5" stop-opacity=".29"/><stop offset=".75" stop-opacity=".141"/><stop offset="1" stop-opacity="0"/></radialGradient>
<radialGradient id="w190" gradientUnits="userSpaceOnUse" cx="223.9" cy="114.1" r="224.2"><stop offset="0" stop-opacity="1"/><stop offset=".05" stop-opacity=".866"/><stop offset=".15" stop-opacity=".669"/><stop offset=".3" stop-opacity=".471"/><stop offset=".5" stop-opacity=".298"/><stop offset=".75" stop-opacity=".145"/><stop offset="1" stop-opacity="0"/></radialGradient>
<radialGradient id="w191" gradientUnits="userSpaceOnUse" cx="223.9" cy="114.1" r="212.6"><stop offset="0" stop-opacity="1"/><stop offset=".05" stop-opacity=".87"/><stop offset=".15" stop-opacity=".677"/><stop offset=".3" stop-opacity=".48"/><stop offset=".5" stop-opacity=".305"/><stop offset=".75" stop-opacity=".15"/><stop offset="1" stop-opacity="0"/></radialGradient>
<radialGradient id="w192" gradientUnits="userSpaceOnUse" cx="223.9" cy="114.1" r="202.2"><stop offset="0" stop-opacity="1"/><stop offset=".05" stop-opacity=".874"/><stop offset=".15" stop-opacity=".685"/><stop offset=".3" stop-opacity=".489"/><stop offset=".5" stop-opacity=".312"/><stop offset=".75" stop-opacity=".153"/><stop offset="1" stop-opacity="0"/></radialGradient>
<radialGradient id="w193" gradientUnits="userSpaceOnUse" cx="223.9" cy="114.1" r="192.8"><stop offset="0" stop-opacity="1"/><stop offset=".05" stop-opacity=".878"/><stop offset=".15" stop-opacity=".692"/><stop offset=".3" stop-opacity=".497"/><stop offset=".5" stop-opacity=".319"/><stop offset=".75" stop-opacity=".157"/><stop offset="1" stop-opacity="0"/></radialGradient>
<radialGradient id="w194" gradientUnits="userSpaceOnUse" cx="223.9" cy="114.1" r="184.3"><stop offset="0" stop-opacity="1"/><stop offset=".05" stop-opacity=".882"/><stop offset=".15" stop-opacity=".699"/><stop offset=".3" stop-opacity=".505"/><stop offset=".5" stop-opacity=".325"/><stop offset=".75" stop-opacity=".161"/><stop offset="1" stop-opacity="0"/></radialGradient>
<radialGradient id="w195" gradientUnits="userSpaceOnUse" cx="223.9" cy="114.1" r="176.6"><stop offset="0" stop-opacity="1"/><stop offset=".05" stop-opacity=".885"/><stop offset=".15" stop-opacity=".705"/><stop offset=".3" stop-opacity=".512"/><stop offset=".5" stop-opacity=".331"/><stop offset=".75" stop-opacity=".165"/><stop offset="1" stop-opacity="0"/></radialGradient>
<radialGradient id="w196" gradientUnits="userSpaceOnUse" cx="223.9" cy="114.1" r="169.5"><stop offset="0" stop-opacity="1"/><stop offset=".05" stop-opacity=".888"/><stop offset=".15" stop-opacity=".711"/><stop offset=".3" stop-opacity=".519"/><stop offset=".5" stop-opacity=".337"/><stop offset=".75" stop-opacity=".168"/><stop offset="1" stop-opacity="0"/></radialGradient>
<radialGradient id="w197" gradientUnits="userSpaceOnUse" cx="223.9" cy="114.1" r="163.1"><stop offset="0" stop-opacity="1"/><stop offset=".05" stop-opacity=".891"/><stop offset=".15" stop-opacity=".717"/><stop offset=".3" stop-opacity=".525"/><stop offset=".5" stop-opacity=".343"/><stop offset=".75" stop-opacity=".171"/><stop offset="1" stop-opacity="0"/></radialGradient>
<radialGradient id="w198" gradientUnits="userSpaceOnUse" cx="223.9" cy="114.1" r="157.1"><stop offset="0" stop-opacity="1"/><stop offset=".05" stop-opacity=".893"/><stop offset=".15" stop-opacity=".722"/><stop offset=".3" stop-opacity=".532"/><stop offset=".5" stop-opacity=".348"/><stop offset=".75" stop-opacity=".175"/><stop offset="1" stop-opacity="0"/></radialGradient>
<radialGradient id="w199" gradientUnits="userSpaceOnUse" cx="223.9" cy="114.1" r="151.7"><stop offset="0" stop-opacity="1"/><stop offset=".05" stop-opacity=".896"/><stop offset=".15" stop-opacity=".727"/><stop offset=".3" stop-opacity=".538"/><stop offset=".5" stop-opacity=".353"/><stop offset=".75" stop-opacity=".178"/><stop offset="1" stop-opacity="0"/></radialGradient>
<radialGradient id="w200" gradientUnits="userSpaceOnUse" cx="223.9" cy="114.1" r="146.6"><stop offset="0" stop-opacity="1"/><stop offset=".05" stop-opacity=".898"/><stop offset=".15" stop-opacity=".732"/><stop offset=".3" stop-opacity=".543"/><stop offset=".5" stop-opacity=".358"/><stop offset=".75" stop-opacity=".181"/><stop offset="1" stop-opacity="0"/></radialGradient>
<radialGradient id="w201" gradientUnits="userSpaceOnUse" cx="223.9" cy="114.1" r="141.9"><stop offset="0" stop-opacity="1"/><stop offset=".05" stop-opacity=".9"/><stop offset=".15" stop-opacity=".736"/><stop offset=".3" stop-opacity=".549"/><stop offset=".5" stop-opacity=".363"/><stop offset=".75" stop-opacity=".184"/><stop offset="1" stop-opacity="0"/></radialGradient>
<radialGradient id="w202" gradientUnits="userSpaceOnUse" cx="223.9" cy="114.1" r="137.5"><stop offset="0" stop-opacity="1"/><stop offset=".05" stop-opacity=".902"/><stop offset=".15" stop-opacity=".74"/><stop offset=".3" stop-opacity=".554"/><stop offset=".5" stop-opacity=".368"/><stop offset=".75" stop-opacity=".186"/><stop offset="1" stop-opacity="0"/></radialGradient>
<radialGradient id="w203" gradientUnits="userSpaceOnUse" cx="223.9" cy="114.1" r="133.5"><stop offset="0" stop-opacity="1"/><stop offset=".05" stop-opacity=".904"/><stop offset=".15" stop-opacity=".744"/><stop offset=".3" stop-opacity=".559"/><stop offset=".5" stop-opacity=".372"/><stop offset=".75" stop-opacity=".189"/><stop offset="1" stop-opacity="0"/></radialGradient>
<radialGradient id="w204" gradientUnits="userSpaceOnUse" cx="223.9" cy="114.1" r="129.7"><stop offset="0" stop-opacity="1"/><stop offset=".05" stop-opacity=".906"/><stop offset=".15" stop-opacity=".748"/><stop offset=".3" stop-opacity=".564"/><stop offset=".5" stop-opacity=".377"/><stop offset=".75" stop-opacity=".192"/><stop offset="1" stop-opacity="0"/></radialGradient>
<radialGradient id="w205" gradientUnits="userSpaceOnUse" cx="223.9" cy="114.1" r="126.1"><stop offset="0" stop-opacity="1"/><stop offset=".05" stop-opacity=".908"/><stop offset=".15" stop-opacity=".752"/><stop offset=".3" stop-opacity=".569"/><stop offset=".5" stop-opacity=".381"/><stop offset=".75" stop-opacity=".195"/><stop offset="1" stop-opacity="0"/></radialGradient>
<radialGradient id="w206" gradientUnits="userSpaceOnUse" cx="223.9" cy="114.1" r="122.8"><stop offset="0" stop-opacity="1"/><stop offset=".05" stop-opacity=".909"/><stop offset=".15" stop-opacity=".755"/><stop offset=".3" stop-opacity=".573"/><stop offset=".5" stop-opacity=".385"/><stop offset=".75" stop-opacity=".197"/><stop offset="1" stop-opacity="0"/></radialGradient>
<radialGradient id="w207" gradientUnits="userSpaceOnUse" cx="223.9" cy="114.1" r="119.7"><stop offset="0" stop-opacity="1"/><stop offset=".05" stop-opacity=".911"/><stop offset=".15" stop-opacity=".759"/><stop offset=".3" stop-opacity=".577"/><stop offset=".5" stop-opacity=".389"/><stop offset=".75" stop-opacity=".2"/><stop offset="1" stop-opacity="0"/></radialGradient>
<radialGradient id="w208" gradientUnits="userSpaceOnUse" cx="223.9" cy="114.1" r="116.8"><stop offset="0" stop-opacity="1"/><stop offset=".05" stop-opacity=".912"/><stop offset=".15" stop-opacity=".762"/><stop offset=".3" stop-opacity=".582"/><stop offset=".5" stop-opacity=".393"/><stop offset=".75" stop-opacity=".202"/><stop offset="1" stop-opacity="0"/></radialGradient>
<radialGradient id="w209" gradientUnits="userSpaceOnUse" cx="223.9" cy="114.1" r="114.0"><stop offset="0" stop-opacity="1"/><stop offset=".05" stop-opacity=".914"/><stop offset=".15" stop-opacity=".765"/><stop offset=".3" stop-opacity=".586"/><stop offset=".5" stop-opacity=".397"/><stop offset=".75" stop-opacity=".205"/><stop offset="1" stop-opacity="0"/></radialGradient>
<radialGradient id="w210" gradientUnits="userSpaceOnUse" cx="223.9" cy="114.1" r="111.4"><stop offset="0" stop-opacity="1"/><stop offset=".05" stop-opacity=".915"/><stop offset=".15" stop-opacity=".768"/><stop offset=".3" stop-opacity=".59"/><stop offset=".5" stop-opacity=".401"/><stop offset=".75" stop-opacity=".207"/><stop offset="1" stop-opacity="0"/></radialGradient>
<radialGradient id="w211" gradientUnits="userSpaceOnUse" cx="223.9" cy="114.1" r="109.0"><stop offset="0" stop-opacity="1"/><stop offset=".05" stop-opacity=".916"/><stop offset=".15" stop-opacity=".771"/><stop offset=".3" stop-opacity=".594"/><stop offset=".5" stop-opacity=".404"/><stop offset=".75" stop-opacity=".21"/><stop offset="1" stop-opacity="0"/></radialGradient>
<radialGradient id="w212" gradientUnits="userSpaceOnUse" cx="223.9" cy="114.1" r="106.7"><stop offset="0" stop-opacity="1"/><stop offset=".05" stop-opacity=".918"/><stop offset=".15" stop-opacity=".774"/><stop offset=".3" stop-opacity=".597"/><stop offset=".5" stop-opacity=".408"/><stop offset=".75" stop-opacity=".212"/><stop offset="1" stop-opacity="0"/></radialGradient>
<radialGradient id="w213" gradientUnits="userSpaceOnUse" cx="223.9" cy="114.1" r="104.5"><stop offset="0" stop-opacity="1"/><stop offset=".05" stop-opacity=".919"/><stop offset=".15" stop-opacity=".777"/><stop offset=".3" stop-opacity=".601"/><stop offset=".5" stop-opacity=".411"/><stop offset=".75" stop-opacity=".214"/><stop offset="1" stop-opacity="0"/></radialGradient>
<radialGradient id="w214" gradientUnits="userSpaceOnUse" cx="223.9" cy="114.1" r="102.4"><stop offset="0" stop-opacity="1"/><stop offset=".05" stop-opacity=".92"/><stop offset=".15" stop-opacity=".779"/><stop offset=".3" stop-opacity=".604"/><stop offset=".5" stop-opacity=".415"/><stop offset=".75" stop-opacity=".216"/><stop offset="1" stop-opacity="0"/></radialGradient>
<radialGradient id="w215" gradientUnits="userSpaceOnUse" cx="223.9" cy="114.1" r="100.5"><stop offset="0" stop-opacity="1"/><stop offset=".05" stop-opacity=".921"/><stop offset=".15" stop-opacity=".782"/><stop offset=".3" stop-opacity=".608"/><stop offset=".5" stop-opacity=".418"/><stop offset=".75" stop-opacity=".219"/><stop offset="1" stop-opacity="0"/></radialGradient>
<radialGradient id="w216" gradientUnits="userSpaceOnUse" cx="223.9" cy="114.1" r="98.6"><stop offset="0" stop-opacity="1"/><stop offset=".05" stop-opacity=".922"/><stop offset=".15" stop-opacity=".785"/><stop offset=".3" stop-opacity=".611"/><stop offset=".5" stop-opacity=".421"/><stop offset=".75" stop-opacity=".221"/><stop offset="1" stop-opacity="0"/></radialGradient>
<radialGradient id="w217" gradientUnits="userSpaceOnUse" cx="223.9" cy="114.1" r="96.9"><stop offset="0" stop-opacity="1"/><stop offset=".05" stop-opacity=".923"/><stop offset=".15" stop-opacity=".787"/><stop offset=".3" stop-opacity=".615"/><stop offset=".5" stop-opacity=".425"/><stop offset=".75" stop-opacity=".223"/><stop offset="1" stop-opacity="0"/></radialGradient>
<radialGradient id="w218" gradientUnits="userSpaceOnUse" cx="223.9" cy="114.1" r="95.2"><stop offset="0" stop-opacity="1"/><stop offset=".05" stop-opacity=".924"/><stop offset=".15" stop-opacity=".789"/><stop offset=".3" stop-opacity=".618"/><stop offset=".5" stop-opacity=".428"/><stop offset=".75" stop-opacity=".225"/><stop offset="1" stop-opacity="0"/></radialGradient>
<radialGradient id="w219" gradientUnits="userSpaceOnUse" cx="223.9" cy="114.1" r="93.6"><stop offset="0" stop-opacity="1"/><stop offset=".05" stop-opacity=".925"/><stop offset=".15" stop-opacity=".792"/><stop offset=".3" stop-opacity=".621"/><stop offset=".5" stop-opacity=".431"/><stop offset=".75" stop-opacity=".227"/><stop offset="1" stop-opacity="0"/></radialGradient>
<radialGradient id="w220" gradientUnits="userSpaceOnUse" cx="223.9" cy="114.1" r="92.1"><stop offset="0" stop-opacity="1"/><stop offset=".05" stop-opacity=".926"/><stop offset=".15" stop-opacity=".794"/><stop offset=".3" stop-opacity=".624"/><stop offset=".5" stop-opacity=".434"/><stop offset=".75" stop-opacity=".229"/><stop offset="1" stop-opacity="0"/></radialGradient>
<radialGradient id="w221" gradientUnits="userSpaceOnUse" cx="223.9" cy="114.1" r="90.7"><stop offset="0" stop-opacity="1"/><stop offset=".05" stop-opacity=".927"/><stop offset=".15" stop-opacity=".796"/><stop offset=".3" stop-opacity=".627"/><stop offset=".5" stop-opacity=".437"/><stop offset=".75" stop-opacity=".231"/><stop offset="1" stop-opacity="0"/></radialGradient>
<radialGradient id="w222" gradientUnits="userSpaceOnUse" cx="223.9" cy="114.1" r="89.3"><stop offset="0" stop-opacity="1"/><stop offset=".05" stop-opacity=".928"/><stop offset=".15" stop-opacity=".798"/><stop offset=".3" stop-opacity=".63"/><stop offset=".5" stop-opacity=".44"/><stop offset=".75" stop-opacity=".233"/><stop offset="1" stop-opacity="0"/></radialGradient>
<radialGradient id="w223" gradientUnits="userSpaceOnUse" cx="223.9" cy="114.1" r="88.0"><stop offset="0" stop-opacity="1"/><stop offset=".05" stop-opacity=".929"/><stop offset=".15" stop-opacity=".8"/><stop offset=".3" stop-opacity=".633"/><stop offset=".5" stop-opacity=".443"/><stop offset=".75" stop-opacity=".235"/><stop offset="1" stop-opacity="0"/></radialGradient>
<radialGradient id="w224" gradientUnits="userSpaceOnUse" cx="223.9" cy="114.1" r="86.8"><stop offset="0" stop-opacity="1"/><stop offset=".05" stop-opacity=".93"/><stop offset=".15" stop-opacity=".802"/><stop offset=".3" stop-opacity=".636"/><stop offset=".5" stop-opacity=".446"/><stop offset=".75" stop-opacity=".237"/><stop offset="1" stop-opacity="0"/></radialGradient>
<radialGradient id="w225" gradientUnits="userSpaceOnUse" cx="223.9" cy="114.1" r="85.6"><stop offset="0" stop-opacity="1"/><stop offset=".05" stop-opacity=".931"/><stop offset=".15" stop-opacity=".804"/><stop offset=".3" stop-opacity=".638"/><stop offset=".5" stop-opacity=".449"/><stop offset=".75" stop-opacity=".239"/><stop offset="1" stop-opacity="0"/></radialGradient>
<radialGradient id="w226" gradientUnits="userSpaceOnUse" cx="223.9" cy="114.1" r="84.5"><stop offset="0" stop-opacity="1"/><stop offset=".05" stop-opacity=".931"/><stop offset=".15" stop-opacity=".806"/><stop offset=".3" stop-opacity=".641"/><stop offset=".5" stop-opacity=".452"/><stop offset=".75" stop-opacity=".241"/><stop offset="1" stop-opacity="0"/></radialGradient>
<radialGradient id="w227" gradientUnits="userSpaceOnUse" cx="223.9" cy="114.1" r="83.5"><stop offset="0" stop-opacity="1"/><stop offset=".05" stop-opacity=".932"/><stop offset=".15" stop-opacity=".808"/><stop offset=".3" stop-opacity=".644"/><stop offset=".5" stop-opacity=".454"/><stop offset=".75" stop-opacity=".243"/><stop offset="1" stop-opacity="0"/></radialGradient>
<radialGradient id="w228" gradientUnits="userSpaceOnUse" cx="223.9" cy="114.1" r="82.5"><stop offset="0" stop-opacity="1"/><stop offset=".05" stop-opacity=".933"/><stop offset=".15" stop-opacity=".81"/><stop offset=".3" stop-opacity=".647"/><stop offset=".5" stop-opacity=".457"/><stop offset=".75" stop-opacity=".245"/><stop offset="1" stop-opacity="0"/></radialGradient>
<radialGradient id="w229" gradientUnits="userSpaceOnUse" cx="223.9" cy="114.1" r="81.5"><stop offset="0" stop-opacity="1"/><stop offset=".05" stop-opacity=".934"/><stop offset=".15" stop-opacity=".812"/><stop offset=".3" stop-opacity=".649"/><stop offset=".5" stop-opacity=".46"/><stop offset=".75" stop-opacity=".247"/><stop offset="1" stop-opacity="0"/></radialGradient>
<radialGradient id="w230" gradientUnits="userSpaceOnUse" cx="223.9" cy="114.1" r="80.6"><stop offset="0" stop-opacity="1"/><stop offset=".05" stop-opacity=".935"/><stop offset=".15" stop-opacity=".813"/><stop offset=".3" stop-opacity=".652"/><stop offset=".5" stop-opacity=".463"/><stop offset=".75" stop-opacity=".249"/><stop offset="1" stop-opacity="0"/></radialGradient>
<radialGradient id="w231" gradientUnits="userSpaceOnUse" cx="223.9" cy="114.1" r="79.7"><stop offset="0" stop-opacity="1"/><stop offset=".05" stop-opacity=".935"/><stop offset=".15" stop-opacity=".815"/><stop offset=".3" stop-opacity=".654"/><stop offset=".5" stop-opacity=".465"/><stop offset=".75" stop-opacity=".251"/><stop offset="1" stop-opacity="0"/></radialGradient>
<radialGradient id="w232" gradientUnits="userSpaceOnUse" cx="223.9" cy="114.1" r="78.9"><stop offset="0" stop-opacity="1"/><stop offset=".05" stop-opacity=".936"/><stop offset=".15" stop-opacity=".817"/><stop offset=".3" stop-opacity=".657"/><stop offset=".5" stop-opacity=".468"/><stop offset=".75" stop-opacity=".253"/><stop offset="1" stop-opacity="0"/></radialGradient>
<radialGradient id="w233" gradientUnits="userSpaceOnUse" cx="223.9" cy="114.1" r="78.1"><stop offset="0" stop-opacity="1"/><stop offset=".05" stop-opacity=".937"/><stop offset=".15" stop-opacity=".819"/><stop offset=".3" stop-opacity=".659"/><stop offset=".5" stop-opacity=".471"/><stop offset=".75" stop-opacity=".255"/><stop offset="1" stop-opacity="0"/></radialGradient>
<radialGradient id="w234" gradientUnits="userSpaceOnUse" cx="223.9" cy="114.1" r="77.4"><stop offset="0" stop-opacity="1"/><stop offset=".05" stop-opacity=".937"/><stop offset=".15" stop-opacity=".82"/><stop offset=".3" stop-opacity=".662"/><stop offset=".5" stop-opacity=".473"/><stop offset=".75" stop-opacity=".257"/><stop offset="1" stop-opacity="0"/></radialGradient>
<radialGradient id="w235" gradientUnits="userSpaceOnUse" cx="223.9" cy="114.1" r="76.7"><stop offset="0" stop-opacity="1"/><stop offset=".05" stop-opacity=".938"/><stop offset=".15" stop-opacity=".822"/><stop offset=".3" stop-opacity=".664"/><stop offset=".5" stop-opacity=".476"/><stop offset=".75" stop-opacity=".258"/><stop offset="1" stop-opacity="0"/></radialGradient>
<radialGradient id="w236" gradientUnits="userSpaceOnUse" cx="223.9" cy="114.1" r="76.0"><stop offset="0" stop-opacity="1"/><stop offset=".05" stop-opacity=".939"/><stop offset=".15" stop-opacity=".824"/><stop offset=".3" stop-opacity=".667"/><stop offset=".5" stop-opacity=".478"/><stop offset=".75" stop-opacity=".26"/><stop offset="1" stop-opacity="0"/></radialGradient>
<radialGradient id="w237" gradientUnits="userSpaceOnUse" cx="223.9" cy="114.1" r="75.3"><stop offset="0" stop-opacity="1"/><stop offset=".05" stop-opacity=".939"/><stop offset=".15" stop-opacity=".825"/><stop offset=".3" stop-opacity=".669"/><stop offset=".5" stop-opacity=".481"/><stop offset=".75" stop-opacity=".262"/><stop offset="1" stop-opacity="0"/></radialGradient>
<radialGradient id="w238" gradientUnits="userSpaceOnUse" cx="223.9" cy="114.1" r="74.7"><stop offset="0" stop-opacity="1"/><stop offset=".05" stop-opacity=".94"/><stop offset=".15" stop-opacity=".827"/><stop offset=".3" stop-opacity=".672"/><stop offset=".5" stop-opacity=".484"/><stop offset=".75" stop-opacity=".264"/><stop offset="1" stop-opacity="0"/></radialGradient>
<radialGradient id="w239" gradientUnits="userSpaceOnUse" cx="223.9" cy="114.1" r="74.2"><stop offset="0" stop-opacity="1"/><stop offset=".05" stop-opacity=".941"/><stop offset=".15" stop-opacity=".829"/><stop offset=".3" stop-opacity=".674"/><stop offset=".5" stop-opacity=".486"/><stop offset=".75" stop-opacity=".266"/><stop offset="1" stop-opacity="0"/></radialGradient>
<radialGradient id="w240" gradientUnits="userSpaceOnUse" cx="223.9" cy="114.1" r="73.6"><stop offset="0" stop-opacity="1"/><stop offset=".05" stop-opacity=".941"/><stop offset=".15" stop-opacity=".83"/><stop offset=".3" stop-opacity=".676"/><stop offset=".5" stop-opacity=".489"/><stop offset=".75" stop-opacity=".268"/><stop offset="1" stop-opacity="0"/></radialGradient>
<radialGradient id="w241" gradientUnits="userSpaceOnUse" cx="223.9" cy="114.1" r="73.1"><stop offset="0" stop-opacity="1"/><stop offset=".05" stop-opacity=".942"/><stop offset=".15" stop-opacity=".832"/><stop offset=".3" stop-opacity=".679"/><stop offset=".5" stop-opacity=".491"/><stop offset=".75" stop-opacity=".27"/><stop offset="1" stop-opacity="0"/></radialGradient>
<radialGradient id="w242" gradientUnits="userSpaceOnUse" cx="223.9" cy="114.1" r="72.6"><stop offset="0" stop-opacity="1"/><stop offset=".05" stop-opacity=".942"/><stop offset=".15" stop-opacity=".833"/><stop offset=".3" stop-opacity=".681"/><stop offset=".5" stop-opacity=".494"/><stop offset=".75" stop-opacity=".272"/><stop offset="1" stop-opacity="0"/></radialGradient>
<radialGradient id="w243" gradientUnits="userSpaceOnUse" cx="223.9" cy="114.1" r="72.2"><stop offset="0" stop-opacity="1"/><stop offset=".05" stop-opacity=".943"/><stop offset=".15" stop-opacity=".835"/><stop offset=".3" stop-opacity=".683"/><stop offset=".5" stop-opacity=".496"/><stop offset=".75" stop-opacity=".274"/><stop offset="1" stop-opacity="0"/></radialGradient>
<radialGradient id="w244" gradientUnits="userSpaceOnUse" cx="223.9" cy="114.1" r="71.7"><stop offset="0" stop-opacity="1"/><stop offset=".05" stop-opacity=".944"/><stop offset=".15" stop-opacity=".836"/><stop offset=".3" stop-opacity=".686"/><stop offset=".5" stop-opacity=".499"/><stop offset=".75" stop-opacity=".275"/><stop offset="1" stop-opacity="0"/></radialGradient>
<radialGradient id="w245" gradientUnits="userSpaceOnUse" cx="223.9" cy="114.1" r="71.3"><stop offset="0" stop-opacity="1"/><stop offset=".05" stop-opacity=".944"/><stop offset=".15" stop-opacity=".838"/><stop offset=".3" stop-opacity=".688"/><stop offset=".5" stop-opacity=".502"/><stop offset=".75" stop-opacity=".277"/><stop offset="1" stop-opacity="0"/></radialGradient>
<radialGradient id="w246" gradientUnits="userSpaceOnUse" cx="223.9" cy="114.1" r="71.0"><stop offset="0" stop-opacity="1"/><stop offset=".05" stop-opacity=".945"/><stop offset=".15" stop-opacity=".839"/><stop offset=".3" stop-opacity=".69"/><stop offset=".5" stop-opacity=".504"/><stop offset=".75" stop-opacity=".279"/><stop offset="1" stop-opacity="0"/></radialGradient>
<radialGradient id="w247" gradientUnits="userSpaceOnUse" cx="223.9" cy="114.1" r="70.6"><stop offset="0" stop-opacity="1"/><stop offset=".05" stop-opacity=".945"/><stop offset=".15" stop-opacity=".841"/><stop offset=".3" stop-opacity=".692"/><stop offset=".5" stop-opacity=".507"/><stop offset=".75" stop-opacity=".281"/><stop offset="1" stop-opacity="0"/></radialGradient>
<radialGradient id="w248" gradientUnits="userSpaceOnUse" cx="223.9" cy="114.1" r="70.3"><stop offset="0" stop-opacity="1"/><stop offset=".05" stop-opacity=".946"/><stop offset=".15" stop-opacity=".842"/><stop offset=".3" stop-opacity=".695"/><stop offset=".5" stop-opacity=".509"/><stop offset=".75" stop-opacity=".283"/><stop offset="1" stop-opacity="0"/></radialGradient>
<radialGradient id="w249" gradientUnits="userSpaceOnUse" cx="223.9" cy="114.1" r="70.0"><stop offset="0" stop-opacity="1"/><stop offset=".05" stop-opacity=".947"/><stop offset=".15" stop-opacity=".844"/><stop offset=".3" stop-opacity=".697"/><stop offset=".5" stop-opacity=".512"/><stop offset=".75" stop-opacity=".285"/><stop offset="1" stop-opacity="0"/></radialGradient>
<radialGradient id="w250" gradientUnits="userSpaceOnUse" cx="223.9" cy="114.1" r="69.7"><stop offset="0" stop-opacity="1"/><stop offset=".05" stop-opacity=".947"/><stop offset=".15" stop-opacity=".845"/><stop offset=".3" stop-opacity=".699"/><stop offset=".5" stop-opacity=".514"/><stop offset=".75" stop-opacity=".287"/><stop offset="1" stop-opacity="0"/></radialGradient>
<radialGradient id="w251" gradientUnits="userSpaceOnUse" cx="223.9" cy="114.1" r="69.5"><stop offset="0" stop-opacity="1"/><stop offset=".05" stop-opacity=".948"/><stop offset=".15" stop-opacity=".847"/><stop offset=".3" stop-opacity=".702"/><stop offset=".5" stop-opacity=".517"/><stop offset=".75" stop-opacity=".289"/><stop offset="1" stop-opacity="0"/></radialGradient>
<radialGradient id="w252" gradientUnits="userSpaceOnUse" cx="223.9" cy="114.1" r="69.2"><stop offset="0" stop-opacity="1"/><stop offset=".05" stop-opacity=".948"/><stop offset=".15" stop-opacity=".848"/><stop offset=".3" stop-opacity=".704"/><stop offset=".5" stop-opacity=".52"/><stop offset=".75" stop-opacity=".291"/><stop offset="1" stop-opacity="0"/></radialGradient>
<radialGradient id="w253" gradientUnits="userSpaceOnUse" cx="223.9" cy="114.1" r="69.0"><stop offset="0" stop-opacity="1"/><stop offset=".05" stop-opacity=".949"/><stop offset=".15" stop-opacity=".849"/><stop offset=".3" stop-opacity=".706"/><stop offset=".5" stop-opacity=".522"/><stop offset=".75" stop-opacity=".293"/><stop offset="1" stop-opacity="0"/></radialGradient>
<radialGradient id="w254" gradientUnits="userSpaceOnUse" cx="223.9" cy="114.1" r="68.8"><stop offset="0" stop-opacity="1"/><stop offset=".05" stop-opacity=".949"/><stop offset=".15" stop-opacity=".851"/><stop offset=".3" stop-opacity=".708"/><stop offset=".5" stop-opacity=".525"/><stop offset=".75" stop-opacity=".295"/><stop offset="1" stop-opacity="0"/></radialGradient>
<radialGradient id="w255" gradientUnits="userSpaceOnUse" cx="223.9" cy="114.1" r="68.7"><stop offset="0" stop-opacity="1"/><stop offset=".05" stop-opacity=".95"/><stop offset=".15" stop-opacity=".852"/><stop offset=".3" stop-opacity=".711"/><stop offset=".5" stop-opacity=".528"/><stop offset=".75" stop-opacity=".297"/><stop offset="1" stop-opacity="0"/></radialGradient>
<radialGradient id="w256" gradientUnits="userSpaceOnUse" cx="223.9" cy="114.1" r="68.5"><stop offset="0" stop-opacity="1"/><stop offset=".05" stop-opacity=".951"/><stop offset=".15" stop-opacity=".854"/><stop offset=".3" stop-opacity=".713"/><stop offset=".5" stop-opacity=".53"/><stop offset=".75" stop-opacity=".3"/><stop offset="1" stop-opacity="0"/></radialGradient>
<radialGradient id="w257" gradientUnits="userSpaceOnUse" cx="223.9" cy="114.1" r="68.4"><stop offset="0" stop-opacity="1"/><stop offset=".05" stop-opacity=".951"/><stop offset=".15" stop-opacity=".855"/><stop offset=".3" stop-opacity=".715"/><stop offset=".5" stop-opacity=".533"/><stop offset=".75" stop-opacity=".302"/><stop offset="1" stop-opacity="0"/></radialGradient>
<radialGradient id="w258" gradientUnits="userSpaceOnUse" cx="223.9" cy="114.1" r="68.3"><stop offset="0" stop-opacity="1"/><stop offset=".05" stop-opacity=".952"/><stop offset=".15" stop-opacity=".857"/><stop offset=".3" stop-opacity=".718"/><stop offset=".5" stop-opacity=".536"/><stop offset=".75" stop-opacity=".304"/><stop offset="1" stop-opacity="0"/></radialGradient>
<radialGradient id="w259" gradientUnits="userSpaceOnUse" cx="223.9" cy="114.1" r="68.2"><stop offset="0" stop-opacity="1"/><stop offset=".05" stop-opacity=".952"/><stop offset=".15" stop-opacity=".858"/><stop offset=".3" stop-opacity=".72"/><stop offset=".5" stop-opacity=".538"/><stop offset=".75" stop-opacity=".306"/><stop offset="1" stop-opacity="0"/></radialGradient>
<radialGradient id="w260" gradientUnits="userSpaceOnUse" cx="223.9" cy="114.1" r="68.2"><stop offset="0" stop-opacity="1"/><stop offset=".05" stop-opacity=".953"/><stop offset=".15" stop-opacity=".86"/><stop offset=".3" stop-opacity=".722"/><stop offset=".5" stop-opacity=".541"/><stop offset=".75" stop-opacity=".308"/><stop offset="1" stop-opacity="0"/></radialGradient>
<radialGradient id="w261" gradientUnits="userSpaceOnUse" cx="223.9" cy="114.1" r="68.1"><stop offset="0" stop-opacity="1"/><stop offset=".05" stop-opacity=".953"/><stop offset=".15" stop-opacity=".861"/><stop offset=".3" stop-opacity=".725"/><stop offset=".5" stop-opacity=".544"/><stop offset=".75" stop-opacity=".311"/><stop offset="1" stop-opacity="0"/></radialGradient>
<radialGradient id="w262" gradientUnits="userSpaceOnUse" cx="223.9" cy="114.1" r="68.1"><stop offset="0" stop-opacity="1"/><stop offset=".05" stop-opacity=".954"/><stop offset=".15" stop-opacity=".862"/><stop offset=".3" stop-opacity=".727"/><stop offset=".5" stop-opacity=".547"/><stop offset=".75" stop-opacity=".313"/><stop offset="1" stop-opacity="0"/></radialGradient>
<radialGradient id="w263" gradientUnits="userSpaceOnUse" cx="223.9" cy="114.1" r="68.1"><stop offset="0" stop-opacity="1"/><stop offset=".05" stop-opacity=".954"/><stop offset=".15" stop-opacity=".862"/><stop offset=".3" stop-opacity=".726"/><stop offset=".5" stop-opacity=".546"/><stop offset=".75" stop-opacity=".312"/><stop offset="1" stop-opacity="0"/></radialGradient>
<radialGradient id="w264" gradientUnits="userSpaceOnUse" cx="223.9" cy="114.1" r="68.1"><stop offset="0" stop-opacity="1"/><stop offset=".05" stop-opacity=".953"/><stop offset=".15" stop-opacity=".862"/><stop offset=".3" stop-opacity=".725"/><stop offset=".5" stop-opacity=".545"/><stop offset=".75" stop-opacity=".311"/><stop offset="1" stop-opacity="0"/></radialGradient>
<radialGradient id="w265" gradientUnits="userSpaceOnUse" cx="223.9" cy="114.1" r="68.2"><stop offset="0" stop-opacity="1"/><stop offset=".05" stop-opacity=".953"/><stop offset=".15" stop-opacity=".861"/><stop offset=".3" stop-opacity=".725"/><stop offset=".5" stop-opacity=".544"/><stop offset=".75" stop-opacity=".311"/><stop offset="1" stop-opacity="0"/></radialGradient>
<radialGradient id="w266" gradientUnits="userSpaceOnUse" cx="223.9" cy="114.1" r="68.3"><stop offset="0" stop-opacity="1"/><stop offset=".05" stop-opacity=".953"/><stop offset=".15" stop-opacity=".86"/><stop offset=".3" stop-opacity=".724"/><stop offset=".5" stop-opacity=".543"/><stop offset=".75" stop-opacity=".31"/><stop offset="1" stop-opacity="0"/></radialGradient>
<radialGradient id="w267" gradientUnits="userSpaceOnUse" cx="223.9" cy="114.1" r="68.3"><stop offset="0" stop-opacity="1"/><stop offset=".05" stop-opacity=".953"/><stop offset=".15" stop-opacity=".86"/><stop offset=".3" stop-opacity=".723"/><stop offset=".5" stop-opacity=".542"/><stop offset=".75" stop-opacity=".309"/><stop offset="1" stop-opacity="0"/></radialGradient>
<radialGradient id="w268" gradientUnits="userSpaceOnUse" cx="223.9" cy="114.1" r="68.5"><stop offset="0" stop-opacity="1"/><stop offset=".05" stop-opacity=".953"/><stop offset=".15" stop-opacity=".859"/><stop offset=".3" stop-opacity=".722"/><stop offset=".5" stop-opacity=".541"/><stop offset=".75" stop-opacity=".308"/><stop offset="1" stop-opacity="0"/></radialGradient>
<radialGradient id="w269" gradientUnits="userSpaceOnUse" cx="223.9" cy="114.1" r="68.6"><stop offset="0" stop-opacity="1"/><stop offset=".05" stop-opacity=".952"/><stop offset=".15" stop-opacity=".859"/><stop offset=".3" stop-opacity=".721"/><stop offset=".5" stop-opacity=".54"/><stop offset=".75" stop-opacity=".307"/><stop offset="1" stop-opacity="0"/></radialGradient>
<radialGradient id="w270" gradientUnits="userSpaceOnUse" cx="223.9" cy="114.1" r="68.7"><stop offset="0" stop-opacity="1"/><stop offset=".05" stop-opacity=".952"/><stop offset=".15" stop-opacity=".858"/><stop offset=".3" stop-opacity=".72"/><stop offset=".5" stop-opacity=".539"/><stop offset=".75" stop-opacity=".306"/><stop offset="1" stop-opacity="0"/></radialGradient>
<radialGradient id="w271" gradientUnits="userSpaceOnUse" cx="223.9" cy="114.1" r="68.9"><stop offset="0" stop-opacity="1"/><stop offset=".05" stop-opacity=".952"/><stop offset=".15" stop-opacity=".858"/><stop offset=".3" stop-opacity=".72"/><stop offset=".5" stop-opacity=".538"/><stop offset=".75" stop-opacity=".306"/><stop offset="1" stop-opacity="0"/></radialGradient>
<radialGradient id="w272" gradientUnits="userSpaceOnUse" cx="223.9" cy="114.1" r="69.1"><stop offset="0" stop-opacity="1"/><stop offset=".05" stop-opacity=".952"/><stop offset=".15" stop-opacity=".857"/><stop offset=".3" stop-opacity=".719"/><stop offset=".5" stop-opacity=".537"/><stop offset=".75" stop-opacity=".305"/><stop offset="1" stop-opacity="0"/></radialGradient>
<radialGradient id="w273" gradientUnits="userSpaceOnUse" cx="223.9" cy="114.1" r="69.3"><stop offset="0" stop-opacity="1"/><stop offset=".05" stop-opacity=".952"/><stop offset=".15" stop-opacity=".857"/><stop offset=".3" stop-opacity=".718"/><stop offset=".5" stop-opacity=".536"/><stop offset=".75" stop-opacity=".304"/><stop offset="1" stop-opacity="0"/></radialGradient>
<radialGradient id="w274" gradientUnits="userSpaceOnUse" cx="223.9" cy="114.1" r="69.6"><stop offset="0" stop-opacity="1"/><stop offset=".05" stop-opacity=".951"/><stop offset=".15" stop-opacity=".856"/><stop offset=".3" stop-opacity=".717"/><stop offset=".5" stop-opacity=".535"/><stop offset=".75" stop-opacity=".303"/><stop offset="1" stop-opacity="0"/></radialGradient>
<radialGradient id="w275" gradientUnits="userSpaceOnUse" cx="223.9" cy="114.1" r="69.8"><stop offset="0" stop-opacity="1"/><stop offset=".05" stop-opacity=".951"/><stop offset=".15" stop-opacity=".856"/><stop offset=".3" stop-opacity=".716"/><stop offset=".5" stop-opacity=".534"/><stop offset=".75" stop-opacity=".302"/><stop offset="1" stop-opacity="0"/></radialGradient>
<radialGradient id="w276" gradientUnits="userSpaceOnUse" cx="223.9" cy="114.1" r="70.1"><stop offset="0" stop-opacity="1"/><stop offset=".05" stop-opacity=".951"/><stop offset=".15" stop-opacity=".855"/><stop offset=".3" stop-opacity=".715"/><stop offset=".5" stop-opacity=".533"/><stop offset=".75" stop-opacity=".302"/><stop offset="1" stop-opacity="0"/></radialGradient>
<radialGradient id="w277" gradientUnits="userSpaceOnUse" cx="223.9" cy="114.1" r="70.4"><stop offset="0" stop-opacity="1"/><stop offset=".05" stop-opacity=".951"/><stop offset=".15" stop-opacity=".855"/><stop offset=".3" stop-opacity=".714"/><stop offset=".5" stop-opacity=".532"/><stop offset=".75" stop-opacity=".301"/><stop offset="1" stop-opacity="0"/></radialGradient>
<radialGradient id="w278" gradientUnits="userSpaceOnUse" cx="223.9" cy="114.1" r="70.8"><stop offset="0" stop-opacity="1"/><stop offset=".05" stop-opacity=".951"/><stop offset=".15" stop-opacity=".854"/><stop offset=".3" stop-opacity=".713"/><stop offset=".5" stop-opacity=".531"/><stop offset=".75" stop-opacity=".3"/><stop offset="1" stop-opacity="0"/></radialGradient>
<radialGradient id="w279" gradientUnits="userSpaceOnUse" cx="223.9" cy="114.1" r="71.1"><stop offset="0" stop-opacity="1"/><stop offset=".05" stop-opacity=".95"/><stop offset=".15" stop-opacity=".853"/><stop offset=".3" stop-opacity=".713"/><stop offset=".5" stop-opacity=".53"/><stop offset=".75" stop-opacity=".299"/><stop offset="1" stop-opacity="0"/></radialGradient>
<radialGradient id="w280" gradientUnits="userSpaceOnUse" cx="223.9" cy="114.1" r="71.5"><stop offset="0" stop-opacity="1"/><stop offset=".05" stop-opacity=".95"/><stop offset=".15" stop-opacity=".853"/><stop offset=".3" stop-opacity=".712"/><stop offset=".5" stop-opacity=".529"/><stop offset=".75" stop-opacity=".298"/><stop offset="1" stop-opacity="0"/></radialGradient>
<radialGradient id="w281" gradientUnits="userSpaceOnUse" cx="223.9" cy="114.1" r="71.9"><stop offset="0" stop-opacity="1"/><stop offset=".05" stop-opacity=".95"/><stop offset=".15" stop-opacity=".852"/><stop offset=".3" stop-opacity=".711"/><stop offset=".5" stop-opacity=".528"/><stop offset=".75" stop-opacity=".297"/><stop offset="1" stop-opacity="0"/></radialGradient>
<radialGradient id="w282" gradientUnits="userSpaceOnUse" cx="223.9" cy="114.1" r="72.3"><stop offset="0" stop-opacity="1"/><stop offset=".05" stop-opacity=".95"/><stop offset=".15" stop-opacity=".852"/><stop offset=".3" stop-opacity=".71"/><stop offset=".5" stop-opacity=".527"/><stop offset=".75" stop-opacity=".297"/><stop offset="1" stop-opacity="0"/></radialGradient>
<radialGradient id="w283" gradientUnits="userSpaceOnUse" cx="223.9" cy="114.1" r="72.8"><stop offset="0" stop-opacity="1"/><stop offset=".05" stop-opacity=".95"/><stop offset=".15" stop-opacity=".851"/><stop offset=".3" stop-opacity=".709"/><stop offset=".5" stop-opacity=".526"/><stop offset=".75" stop-opacity=".296"/><stop offset="1" stop-opacity="0"/></radialGradient>
<radialGradient id="w284" gradientUnits="userSpaceOnUse" cx="223.9" cy="114.1" r="73.3"><stop offset="0" stop-opacity="1"/><stop offset=".05" stop-opacity=".949"/><stop offset=".15" stop-opacity=".851"/><stop offset=".3" stop-opacity=".708"/><stop offset=".5" stop-opacity=".524"/><stop offset=".75" stop-opacity=".295"/><stop offset="1" stop-opacity="0"/></radialGradient>
<radialGradient id="w285" gradientUnits="userSpaceOnUse" cx="223.9" cy="114.1" r="73.8"><stop offset="0" stop-opacity="1"/><stop offset=".05" stop-opacity=".949"/><stop offset=".15" stop-opacity=".85"/><stop offset=".3" stop-opacity=".707"/><stop offset=".5" stop-opacity=".523"/><stop offset=".75" stop-opacity=".294"/><stop offset="1" stop-opacity="0"/></radialGradient>
<radialGradient id="w286" gradientUnits="userSpaceOnUse" cx="223.9" cy="114.1" r="74.4"><stop offset="0" stop-opacity="1"/><stop offset=".05" stop-opacity=".949"/><stop offset=".15" stop-opacity=".849"/><stop offset=".3" stop-opacity=".706"/><stop offset=".5" stop-opacity=".522"/><stop offset=".75" stop-opacity=".293"/><stop offset="1" stop-opacity="0"/></radialGradient>
<radialGradient id="w287" gradientUnits="userSpaceOnUse" cx="223.9" cy="114.1" r="75.0"><stop offset="0" stop-opacity="1"/><stop offset=".05" stop-opacity=".949"/><stop offset=".15" stop-opacity=".849"/><stop offset=".3" stop-opacity=".705"/><stop offset=".5" stop-opacity=".521"/><stop offset=".75" stop-opacity=".292"/><stop offset="1" stop-opacity="0"/></radialGradient>
<radialGradient id="w288" gradientUnits="userSpaceOnUse" cx="223.9" cy="114.1" r="75.6"><stop offset="0" stop-opacity="1"/><stop offset=".05" stop-opacity=".948"/><stop offset=".15" stop-opacity=".848"/><stop offset=".3" stop-opacity=".704"/><stop offset=".5" stop-opacity=".52"/><stop offset=".75" stop-opacity=".292"/><stop offset="1" stop-opacity="0"/></radialGradient>
<radialGradient id="w289" gradientUnits="userSpaceOnUse" cx="223.9" cy="114.1" r="76.2"><stop offset="0" stop-opacity="1"/><stop offset=".05" stop-opacity=".948"/><stop offset=".15" stop-opacity=".848"/><stop offset=".3" stop-opacity=".703"/><stop offset=".5" stop-opacity=".519"/><stop offset=".75" stop-opacity=".291"/><stop offset="1" stop-opacity="0"/></radialGradient>
<radialGradient id="w290" gradientUnits="userSpaceOnUse" cx="223.9" cy="114.1" r="76.9"><stop offset="0" stop-opacity="1"/><stop offset=".05" stop-opacity=".948"/><stop offset=".15" stop-opacity=".847"/><stop offset=".3" stop-opacity=".702"/><stop offset=".5" stop-opacity=".518"/><stop offset=".75" stop-opacity=".29"/><stop offset="1" stop-opacity="0"/></radialGradient>
<radialGradient id="w291" gradientUnits="userSpaceOnUse" cx="223.9" cy="114.1" r="77.6"><stop offset="0" stop-opacity="1"/><stop offset=".05" stop-opacity=".948"/><stop offset=".15" stop-opacity=".846"/><stop offset=".3" stop-opacity=".701"/><stop offset=".5" stop-opacity=".517"/><stop offset=".75" stop-opacity=".289"/><stop offset="1" stop-opacity="0"/></radialGradient>
<radialGradient id="w292" gradientUnits="userSpaceOnUse" cx="223.9" cy="114.1" r="78.4"><stop offset="0" stop-opacity="1"/><stop offset=".05" stop-opacity=".947"/><stop offset=".15" stop-opacity=".846"/><stop offset=".3" stop-opacity=".7"/><stop offset=".5" stop-opacity=".515"/><stop offset=".75" stop-opacity=".288"/><stop offset="1" stop-opacity="0"/></radialGradient>
<radialGradient id="w293" gradientUnits="userSpaceOnUse" cx="223.9" cy="114.1" r="79.2"><stop offset="0" stop-opacity="1"/><stop offset=".05" stop-opacity=".947"/><stop offset=".15" stop-opacity=".845"/><stop offset=".3" stop-opacity=".699"/><stop offset=".5" stop-opacity=".514"/><stop offset=".75" stop-opacity=".287"/><stop offset="1" stop-opacity="0"/></radialGradient>
<radialGradient id="w294" gradientUnits="userSpaceOnUse" cx="223.9" cy="114.1" r="80.0"><stop offset="0" stop-opacity="1"/><stop offset=".05" stop-opacity=".947"/><stop offset=".15" stop-opacity=".844"/><stop offset=".3" stop-opacity=".698"/><stop offset=".5" stop-opacity=".513"/><stop offset=".75" stop-opacity=".286"/><stop offset="1" stop-opacity="0"/></radialGradient>
<radialGradient id="w295" gradientUnits="userSpaceOnUse" cx="223.9" cy="114.1" r="80.9"><stop offset="0" stop-opacity="1"/><stop offset=".05" stop-opacity=".947"/><stop offset=".15" stop-opacity=".844"/><stop offset=".3" stop-opacity=".697"/><stop offset=".5" stop-opacity=".512"/><stop offset=".75" stop-opacity=".285"/><stop offset="1" stop-opacity="0"/></radialGradient>
<radialGradient id="w296" gradientUnits="userSpaceOnUse" cx="223.9" cy="114.1" r="81.9"><stop offset="0" stop-opacity="1"/><stop offset=".05" stop-opacity=".946"/><stop offset=".15" stop-opacity=".843"/><stop offset=".3" stop-opacity=".696"/><stop offset=".5" stop-opacity=".511"/><stop offset=".75" stop-opacity=".284"/><stop offset="1" stop-opacity="0"/></radialGradient>
<radialGradient id="w297" gradientUnits="userSpaceOnUse" cx="223.9" cy="114.1" r="82.8"><stop offset="0" stop-opacity="1"/><stop offset=".05" stop-opacity=".946"/><stop offset=".15" stop-opacity=".842"/><stop offset=".3" stop-opacity=".695"/><stop offset=".5" stop-opacity=".509"/><stop offset=".75" stop-opacity=".283"/><stop offset="1" stop-opacity="0"/></radialGradient>
<radialGradient id="w298" gradientUnits="userSpaceOnUse" cx="223.9" cy="114.1" r="83.9"><stop offset="0" stop-opacity="1"/><stop offset=".05" stop-opacity=".946"/><stop offset=".15" stop-opacity=".841"/><stop offset=".3" stop-opacity=".694"/><stop offset=".5" stop-opacity=".508"/><stop offset=".75" stop-opacity=".282"/><stop offset="1" stop-opacity="0"/></radialGradient>
<radialGradient id="w299" gradientUnits="userSpaceOnUse" cx="223.9" cy="114.1" r="84.9"><stop offset="0" stop-opacity="1"/><stop offset=".05" stop-opacity=".945"/><stop offset=".15" stop-opacity=".841"/><stop offset=".3" stop-opacity=".692"/><stop offset=".5" stop-opacity=".507"/><stop offset=".75" stop-opacity=".281"/><stop offset="1" stop-opacity="0"/></radialGradient>
<radialGradient id="w300" gradientUnits="userSpaceOnUse" cx="223.9" cy="114.1" r="86.1"><stop offset="0" stop-opacity="1"/><stop offset=".05" stop-opacity=".945"/><stop offset=".15" stop-opacity=".84"/><stop offset=".3" stop-opacity=".691"/><stop offset=".5" stop-opacity=".505"/><stop offset=".75" stop-opacity=".28"/><stop offset="1" stop-opacity="0"/></radialGradient>
<radialGradient id="w301" gradientUnits="userSpaceOnUse" cx="223.9" cy="114.1" r="87.3"><stop offset="0" stop-opacity="1"/><stop offset=".05" stop-opacity=".945"/><stop offset=".15" stop-opacity=".839"/><stop offset=".3" stop-opacity=".69"/><stop offset=".5" stop-opacity=".504"/><stop offset=".75" stop-opacity=".279"/><stop offset="1" stop-opacity="0"/></radialGradient>
<radialGradient id="w302" gradientUnits="userSpaceOnUse" cx="223.9" cy="114.1" r="88.5"><stop offset="0" stop-opacity="1"/><stop offset=".05" stop-opacity=".945"/><stop offset=".15" stop-opacity=".838"/><stop offset=".3" stop-opacity=".689"/><stop offset=".5" stop-opacity=".503"/><stop offset=".75" stop-opacity=".278"/><stop offset="1" stop-opacity="0"/></radialGradient>
<radialGradient id="w303" gradientUnits="userSpaceOnUse" cx="223.9" cy="114.1" r="89.8"><stop offset="0" stop-opacity="1"/><stop offset=".05" stop-opacity=".944"/><stop offset=".15" stop-opacity=".837"/><stop offset=".3" stop-opacity=".687"/><stop offset=".5" stop-opacity=".501"/><stop offset=".75" stop-opacity=".277"/><stop offset="1" stop-opacity="0"/></radialGradient>
<radialGradient id="w304" gradientUnits="userSpaceOnUse" cx="223.9" cy="114.1" r="91.2"><stop offset="0" stop-opacity="1"/><stop offset=".05" stop-opacity=".944"/><stop offset=".15" stop-opacity=".837"/><stop offset=".3" stop-opacity=".686"/><stop offset=".5" stop-opacity=".5"/><stop offset=".75" stop-opacity=".276"/><stop offset="1" stop-opacity="0"/></radialGradient>
<radialGradient id="w305" gradientUnits="userSpaceOnUse" cx="223.9" cy="114.1" r="92.7"><stop offset="0" stop-opacity="1"/><stop offset=".05" stop-opacity=".943"/><stop offset=".15" stop-opacity=".836"/><stop offset=".3" stop-opacity=".685"/><stop offset=".5" stop-opacity=".498"/><stop offset=".75" stop-opacity=".275"/><stop offset="1" stop-opacity="0"/></radialGradient>
<radialGradient id="w306" gradientUnits="userSpaceOnUse" cx="223.9" cy="114.1" r="94.2"><stop offset="0" stop-opacity="1"/><stop offset=".05" stop-opacity=".943"/><stop offset=".15" stop-opacity=".835"/><stop offset=".3" stop-opacity=".683"/><stop offset=".5" stop-opacity=".497"/><stop offset=".75" stop-opacity=".274"/><stop offset="1" stop-opacity="0"/></radialGradient>
<radialGradient id="w307" gradientUnits="userSpaceOnUse" cx="223.9" cy="114.1" r="95.8"><stop offset="0" stop-opacity="1"/><stop offset=".05" stop-opacity=".943"/><stop offset=".15" stop-opacity=".834"/><stop offset=".3" stop-opacity=".682"/><stop offset=".5" stop-opacity=".495"/><stop offset=".75" stop-opacity=".272"/><stop offset="1" stop-opacity="0"/></radialGradient>
<radialGradient id="w308" gradientUnits="userSpaceOnUse" cx="223.9" cy="114.1" r="97.5"><stop offset="0" stop-opacity="1"/><stop offset=".05" stop-opacity=".942"/><stop offset=".15" stop-opacity=".833"/><stop offset=".3" stop-opacity=".68"/><stop offset=".5" stop-opacity=".493"/><stop offset=".75" stop-opacity=".271"/><stop offset="1" stop-opacity="0"/></radialGradient>
<radialGradient id="w309" gradientUnits="userSpaceOnUse" cx="223.9" cy="114.1" r="99.3"><stop offset="0" stop-opacity="1"/><stop offset=".05" stop-opacity=".942"/><stop offset=".15" stop-opacity=".832"/><stop offset=".3" stop-opacity=".679"/><stop offset=".5" stop-opacity=".492"/><stop offset=".75" stop-opacity=".27"/><stop offset="1" stop-opacity="0"/></radialGradient>
<radialGradient id="w310" gradientUnits="userSpaceOnUse" cx="223.9" cy="114.1" r="101.2"><stop offset="0" stop-opacity="1"/><stop offset=".05" stop-opacity=".942"/><stop offset=".15" stop-opacity=".831"/><stop offset=".3" stop-opacity=".677"/><stop offset=".5" stop-opacity=".49"/><stop offset=".75" stop-opacity=".269"/><stop offset="1" stop-opacity="0"/></radialGradient>
<radialGradient id="w311" gradientUnits="userSpaceOnUse" cx="223.9" cy="114.1" r="103.2"><stop offset="0" stop-opacity="1"/><stop offset=".05" stop-opacity=".941"/><stop offset=".15" stop-opacity=".83"/><stop offset=".3" stop-opacity=".676"/><stop offset=".5" stop-opacity=".488"/><stop offset=".75" stop-opacity=".267"/><stop offset="1" stop-opacity="0"/></radialGradient>
<radialGradient id="w312" gradientUnits="userSpaceOnUse" cx="223.9" cy="114.1" r="105.3"><stop offset="0" stop-opacity="1"/><stop offset=".05" stop-opacity=".941"/><stop offset=".15" stop-opacity=".829"/><stop offset=".3" stop-opacity=".674"/><stop offset=".5" stop-opacity=".486"/><stop offset=".75" stop-opacity=".266"/><stop offset="1" stop-opacity="0"/></radialGradient>
<radialGradient id="w313" gradientUnits="userSpaceOnUse" cx="223.9" cy="114.1" r="107.5"><stop offset="0" stop-opacity="1"/><stop offset=".05" stop-opacity=".94"/><stop offset=".15" stop-opacity=".827"/><stop offset=".3" stop-opacity=".672"/><stop offset=".5" stop-opacity=".484"/><stop offset=".75" stop-opacity=".265"/><stop offset="1" stop-opacity="0"/></radialGradient>
<radialGradient id="w314" gradientUnits="userSpaceOnUse" cx="223.9" cy="114.1" r="109.9"><stop offset="0" stop-opacity="1"/><stop offset=".05" stop-opacity=".94"/><stop offset=".15" stop-opacity=".826"/><stop offset=".3" stop-opacity=".671"/><stop offset=".5" stop-opacity=".482"/><stop offset=".75" stop-opacity=".263"/><stop offset="1" stop-opacity="0"/></radialGradient>
<radialGradient id="w315" gradientUnits="userSpaceOnUse" cx="223.9" cy="114.1" r="112.4"><stop offset="0" stop-opacity="1"/><stop offset=".05" stop-opacity=".939"/><stop offset=".15" stop-opacity=".825"/><stop offset=".3" stop-opacity=".669"/><stop offset=".5" stop-opacity=".48"/><stop offset=".75" stop-opacity=".262"/><stop offset="1" stop-opacity="0"/></radialGradient>
<radialGradient id="w316" gradientUnits="userSpaceOnUse" cx="223.9" cy="114.1" r="114.9"><stop offset="0" stop-opacity="1"/><stop offset=".05" stop-opacity=".939"/><stop offset=".15" stop-opacity=".824"/><stop offset=".3" stop-opacity=".667"/><stop offset=".5" stop-opacity=".478"/><stop offset=".75" stop-opacity=".26"/><stop offset="1" stop-opacity="0"/></radialGradient>
<radialGradient id="w317" gradientUnits="userSpaceOnUse" cx="223.9" cy="114.1" r="116.0"><stop offset="0" stop-opacity="1"/><stop offset=".05" stop-opacity=".938"/><stop offset=".15" stop-opacity=".823"/><stop offset=".3" stop-opacity=".666"/><stop offset=".5" stop-opacity=".478"/><stop offset=".75" stop-opacity=".26"/><stop offset="1" stop-opacity="0"/></radialGradient>
<radialGradient id="w318" gradientUnits="userSpaceOnUse" cx="223.9" cy="114.1" r="114.7"><stop offset="0" stop-opacity="1"/><stop offset=".05" stop-opacity=".939"/><stop offset=".15" stop-opacity=".824"/><stop offset=".3" stop-opacity=".667"/><stop offset=".5" stop-opacity=".479"/><stop offset=".75" stop-opacity=".26"/><stop offset="1" stop-opacity="0"/></radialGradient>
<radialGradient id="w319" gradientUnits="userSpaceOnUse" cx="223.9" cy="114.1" r="112.4"><stop offset="0" stop-opacity="1"/><stop offset=".05" stop-opacity=".939"/><stop offset=".15" stop-opacity=".825"/><stop offset=".3" stop-opacity=".669"/><stop offset=".5" stop-opacity=".481"/><stop offset=".75" stop-opacity=".262"/><stop offset="1" stop-opacity="0"/></radialGradient>
<radialGradient id="w320" gradientUnits="userSpaceOnUse" cx="223.9" cy="114.1" r="110.2"><stop offset="0" stop-opacity="1"/><stop offset=".05" stop-opacity=".94"/><stop offset=".15" stop-opacity=".826"/><stop offset=".3" stop-opacity=".67"/><stop offset=".5" stop-opacity=".482"/><stop offset=".75" stop-opacity=".263"/><stop offset="1" stop-opacity="0"/></radialGradient>
<radialGradient id="w321" gradientUnits="userSpaceOnUse" cx="223.9" cy="114.1" r="108.1"><stop offset="0" stop-opacity="1"/><stop offset=".05" stop-opacity=".94"/><stop offset=".15" stop-opacity=".827"/><stop offset=".3" stop-opacity=".672"/><stop offset=".5" stop-opacity=".484"/><stop offset=".75" stop-opacity=".264"/><stop offset="1" stop-opacity="0"/></radialGradient>
<radialGradient id="w322" gradientUnits="userSpaceOnUse" cx="223.9" cy="114.1" r="106.2"><stop offset="0" stop-opacity="1"/><stop offset=".05" stop-opacity=".941"/><stop offset=".15" stop-opacity=".828"/><stop offset=".3" stop-opacity=".674"/><stop offset=".5" stop-opacity=".486"/><stop offset=".75" stop-opacity=".266"/><stop offset="1" stop-opacity="0"/></radialGradient>
<radialGradient id="w323" gradientUnits="userSpaceOnUse" cx="223.9" cy="114.1" r="104.3"><stop offset="0" stop-opacity="1"/><stop offset=".05" stop-opacity=".941"/><stop offset=".15" stop-opacity=".829"/><stop offset=".3" stop-opacity=".675"/><stop offset=".5" stop-opacity=".487"/><stop offset=".75" stop-opacity=".267"/><stop offset="1" stop-opacity="0"/></radialGradient>
<radialGradient id="w324" gradientUnits="userSpaceOnUse" cx="223.9" cy="114.1" r="102.6"><stop offset="0" stop-opacity="1"/><stop offset=".05" stop-opacity=".941"/><stop offset=".15" stop-opacity=".83"/><stop offset=".3" stop-opacity=".677"/><stop offset=".5" stop-opacity=".489"/><stop offset=".75" stop-opacity=".268"/><stop offset="1" stop-opacity="0"/></radialGradient>
<radialGradient id="w325" gradientUnits="userSpaceOnUse" cx="223.9" cy="114.1" r="100.9"><stop offset="0" stop-opacity="1"/><stop offset=".05" stop-opacity=".942"/><stop offset=".15" stop-opacity=".831"/><stop offset=".3" stop-opacity=".678"/><stop offset=".5" stop-opacity=".491"/><stop offset=".75" stop-opacity=".269"/><stop offset="1" stop-opacity="0"/></radialGradient>
<radialGradient id="w326" gradientUnits="userSpaceOnUse" cx="223.9" cy="114.1" r="99.3"><stop offset="0" stop-opacity="1"/><stop offset=".05" stop-opacity=".942"/><stop offset=".15" stop-opacity=".832"/><stop offset=".3" stop-opacity=".679"/><stop offset=".5" stop-opacity=".492"/><stop offset=".75" stop-opacity=".27"/><stop offset="1" stop-opacity="0"/></radialGradient>
<radialGradient id="w327" gradientUnits="userSpaceOnUse" cx="223.9" cy="114.1" r="97.8"><stop offset="0" stop-opacity="1"/><stop offset=".05" stop-opacity=".942"/><stop offset=".15" stop-opacity=".833"/><stop offset=".3" stop-opacity=".681"/><stop offset=".5" stop-opacity=".494"/><stop offset=".75" stop-opacity=".271"/><stop offset="1" stop-opacity="0"/></radialGradient>
<radialGradient id="w328" gradientUnits="userSpaceOnUse" cx="223.9" cy="114.1" r="96.3"><stop offset="0" stop-opacity="1"/><stop offset=".05" stop-opacity=".943"/><stop offset=".15" stop-opacity=".834"/><stop offset=".3" stop-opacity=".682"/><stop offset=".5" stop-opacity=".495"/><stop offset=".75" stop-opacity=".273"/><stop offset="1" stop-opacity="0"/></radialGradient>
<radialGradient id="w329" gradientUnits="userSpaceOnUse" cx="223.9" cy="114.1" r="95.0"><stop offset="0" stop-opacity="1"/><stop offset=".05" stop-opacity=".943"/><stop offset=".15" stop-opacity=".835"/><stop offset=".3" stop-opacity=".683"/><stop offset=".5" stop-opacity=".497"/><stop offset=".75" stop-opacity=".274"/><stop offset="1" stop-opacity="0"/></radialGradient>
<radialGradient id="w330" gradientUnits="userSpaceOnUse" cx="223.9" cy="114.1" r="93.7"><stop offset="0" stop-opacity="1"/><stop offset=".05" stop-opacity=".943"/><stop offset=".15" stop-opacity=".836"/><stop offset=".3" stop-opacity=".685"/><stop offset=".5" stop-opacity=".498"/><stop offset=".75" stop-opacity=".275"/><stop offset="1" stop-opacity="0"/></radialGradient>
<radialGradient id="w331" gradientUnits="userSpaceOnUse" cx="223.9" cy="114.1" r="92.4"><stop offset="0" stop-opacity="1"/><stop offset=".05" stop-opacity=".944"/><stop offset=".15" stop-opacity=".836"/><stop offset=".3" stop-opacity=".686"/><stop offset=".5" stop-opacity=".499"/><stop offset=".75" stop-opacity=".276"/><stop offset="1" stop-opacity="0"/></radialGradient>
<radialGradient id="w332" gradientUnits="userSpaceOnUse" cx="223.9" cy="114.1" r="91.2"><stop offset="0" stop-opacity="1"/><stop offset=".05" stop-opacity=".944"/><stop offset=".15" stop-opacity=".837"/><stop offset=".3" stop-opacity=".687"/><stop offset=".5" stop-opacity=".501"/><stop offset=".75" stop-opacity=".277"/><stop offset="1" stop-opacity="0"/></radialGradient>
<radialGradient id="w333" gradientUnits="userSpaceOnUse" cx="223.9" cy="114.1" r="90.1"><stop offset="0" stop-opacity="1"/><stop offset=".05" stop-opacity=".944"/><stop offset=".15" stop-opacity=".838"/><stop offset=".3" stop-opacity=".688"/><stop offset=".5" stop-opacity=".502"/><stop offset=".75" stop-opacity=".278"/><stop offset="1" stop-opacity="0"/></radialGradient>
<radialGradient id="w334" gradientUnits="userSpaceOnUse" cx="223.9" cy="114.1" r="89.0"><stop offset="0" stop-opacity="1"/><stop offset=".05" stop-opacity=".945"/><stop offset=".15" stop-opacity=".839"/><stop offset=".3" stop-opacity=".689"/><stop offset=".5" stop-opacity=".503"/><stop offset=".75" stop-opacity=".279"/><stop offset="1" stop-opacity="0"/></radialGradient>
<radialGradient id="w335" gradientUnits="userSpaceOnUse" cx="223.9" cy="114.1" r="88.0"><stop offset="0" stop-opacity="1"/><stop offset=".05" stop-opacity=".945"/><stop offset=".15" stop-opacity=".839"/><stop offset=".3" stop-opacity=".691"/><stop offset=".5" stop-opacity=".505"/><stop offset=".75" stop-opacity=".28"/><stop offset="1" stop-opacity="0"/></radialGradient>
<radialGradient id="w336" gradientUnits="userSpaceOnUse" cx="223.9" cy="114.1" r="87.1"><stop offset="0" stop-opacity="1"/><stop offset=".05" stop-opacity=".945"/><stop offset=".15" stop-opacity=".84"/><stop offset=".3" stop-opacity=".692"/><stop offset=".5" stop-opacity=".506"/><stop offset=".75" stop-opacity=".281"/><stop offset="1" stop-opacity="0"/></radialGradient>
<radialGradient id="w337" gradientUnits="userSpaceOnUse" cx="223.9" cy="114.1" r="86.1"><stop offset="0" stop-opacity="1"/><stop offset=".05" stop-opacity=".946"/><stop offset=".15" stop-opacity=".841"/><stop offset=".3" stop-opacity=".693"/><stop offset=".5" stop-opacity=".507"/><stop offset=".75" stop-opacity=".282"/><stop offset="1" stop-opacity="0"/></radialGradient>
<radialGradient id="w338" gradientUnits="userSpaceOnUse" cx="223.9" cy="114.1" r="85.3"><stop offset="0" stop-opacity="1"/><stop offset=".05" stop-opacity=".946"/><stop offset=".15" stop-opacity=".842"/><stop offset=".3" stop-opacity=".694"/><stop offset=".5" stop-opacity=".508"/><stop offset=".75" stop-opacity=".282"/><stop offset="1" stop-opacity="0"/></radialGradient>
<radialGradient id="w339" gradientUnits="userSpaceOnUse" cx="223.9" cy="114.1" r="84.4"><stop offset="0" stop-opacity="1"/><stop offset=".05" stop-opacity=".946"/><stop offset=".15" stop-opacity=".842"/><stop offset=".3" stop-opacity=".695"/><stop offset=".5" stop-opacity=".509"/><stop offset=".75" stop-opacity=".283"/><stop offset="1" stop-opacity="0"/></radialGradient>
<radialGradient id="w340" gradientUnits="userSpaceOnUse" cx="223.9" cy="114.1" r="83.6"><stop offset="0" stop-opacity="1"/><stop offset=".05" stop-opacity=".946"/><stop offset=".15" stop-opacity=".843"/><stop offset=".3" stop-opacity=".696"/><stop offset=".5" stop-opacity=".511"/><stop offset=".75" stop-opacity=".284"/><stop offset="1" stop-opacity="0"/></radialGradient>
<radialGradient id="w341" gradientUnits="userSpaceOnUse" cx="223.9" cy="114.1" r="82.9"><stop offset="0" stop-opacity="1"/><stop offset=".05" stop-opacity=".947"/><stop offset=".15" stop-opacity=".844"/><stop offset=".3" stop-opacity=".697"/><stop offset=".5" stop-opacity=".512"/><stop offset=".75" stop-opacity=".285"/><stop offset="1" stop-opacity="0"/></radialGradient>
<radialGradient id="w342" gradientUnits="userSpaceOnUse" cx="223.9" cy="114.1" r="82.2"><stop offset="0" stop-opacity="1"/><stop offset=".05" stop-opacity=".947"/><stop offset=".15" stop-opacity=".844"/><stop offset=".3" stop-opacity=".698"/><stop offset=".5" stop-opacity=".513"/><stop offset=".75" stop-opacity=".286"/><stop offset="1" stop-opacity="0"/></radialGradient>
<radialGradient id="w343" gradientUnits="userSpaceOnUse" cx="223.9" cy="114.1" r="81.5"><stop offset="0" stop-opacity="1"/><stop offset=".05" stop-opacity=".947"/><stop offset=".15" stop-opacity=".845"/><stop offset=".3" stop-opacity=".699"/><stop offset=".5" stop-opacity=".514"/><stop offset=".75" stop-opacity=".287"/><stop offset="1" stop-opacity="0"/></radialGradient>
<radialGradient id="w344" gradientUnits="userSpaceOnUse" cx="223.9" cy="114.1" r="80.9"><stop offset="0" stop-opacity="1"/><stop offset=".05" stop-opacity=".947"/><stop offset=".15" stop-opacity=".845"/><stop offset=".3" stop-opacity=".7"/><stop offset=".5" stop-opacity=".515"/><stop offset=".75" stop-opacity=".288"/><stop offset="1" stop-opacity="0"/></radialGradient>
<radialGradient id="w345" gradientUnits="userSpaceOnUse" cx="223.9" cy="114.1" r="80.2"><stop offset="0" stop-opacity="1"/><stop offset=".05" stop-opacity=".948"/><stop offset=".15" stop-opacity=".846"/><stop offset=".3" stop-opacity=".701"/><stop offset=".5" stop-opacity=".516"/><stop offset=".75" stop-opacity=".289"/><stop offset="1" stop-opacity="0"/></radialGradient>
<radialGradient id="w346" gradientUnits="userSpaceOnUse" cx="223.9" cy="114.1" r="79.7"><stop offset="0" stop-opacity="1"/><stop offset=".05" stop-opacity=".948"/><stop offset=".15" stop-opacity=".847"/><stop offset=".3" stop-opacity=".702"/><stop offset=".5" stop-opacity=".517"/><stop offset=".75" stop-opacity=".289"/><stop offset="1" stop-opacity="0"/></radialGradient>
<radialGradient id="w347" gradientUnits="userSpaceOnUse" cx="223.9" cy="114.1" r="79.1"><stop offset="0" stop-opacity="1"/><stop offset=".05" stop-opacity=".948"/><stop offset=".15" stop-opacity=".847"/><stop offset=".3" stop-opacity=".703"/><stop offset=".5" stop-opacity=".519"/><stop offset=".75" stop-opacity=".29"/><stop offset="1" stop-opacity="0"/></radialGradient>
<radialGradient id="w348" gradientUnits="userSpaceOnUse" cx="223.9" cy="114.1" r="78.6"><stop offset="0" stop-opacity="1"/><stop offset=".05" stop-opacity=".948"/><stop offset=".15" stop-opacity=".848"/><stop offset=".3" stop-opacity=".704"/><stop offset=".5" stop-opacity=".52"/><stop offset=".75" stop-opacity=".291"/><stop offset="1" stop-opacity="0"/></radialGradient>
<radialGradient id="w349" gradientUnits="userSpaceOnUse" cx="223.9" cy="114.1" r="78.1"><stop offset="0" stop-opacity="1"/><stop offset=".05" stop-opacity=".949"/><stop offset=".15" stop-opacity=".849"/><stop offset=".3" stop-opacity=".705"/><stop offset=".5" stop-opacity=".521"/><stop offset=".75" stop-opacity=".292"/><stop offset="1" stop-opacity="0"/></radialGradient>
<radialGradient id="w350" gradientUnits="userSpaceOnUse" cx="223.9" cy="114.1" r="77.7"><stop offset="0" stop-opacity="1"/><stop offset=".05" stop-opacity=".949"/><stop offset=".15" stop-opacity=".849"/><stop offset=".3" stop-opacity=".706"/><stop offset=".5" stop-opacity=".522"/><stop offset=".75" stop-opacity=".293"/><stop offset="1" stop-opacity="0"/></radialGradient>
<radialGradient id="w351" gradientUnits="userSpaceOnUse" cx="223.9" cy="114.1" r="77.3"><stop offset="0" stop-opacity="1"/><stop offset=".05" stop-opacity=".949"/><stop offset=".15" stop-opacity=".85"/><stop offset=".3" stop-opacity=".707"/><stop offset=".5" stop-opacity=".523"/><stop offset=".75" stop-opacity=".294"/><stop offset="1" stop-opacity="0"/></radialGradient>
<radialGradient id="w352" gradientUnits="userSpaceOnUse" cx="223.9" cy="114.1" r="76.9"><stop offset="0" stop-opacity="1"/><stop offset=".05" stop-opacity=".949"/><stop offset=".15" stop-opacity=".85"/><stop offset=".3" stop-opacity=".707"/><stop offset=".5" stop-opacity=".524"/><stop offset=".75" stop-opacity=".294"/><stop offset="1" stop-opacity="0"/></radialGradient>
<radialGradient id="w353" gradientUnits="userSpaceOnUse" cx="223.9" cy="114.1" r="76.5"><stop offset="0" stop-opacity="1"/><stop offset=".05" stop-opacity=".949"/><stop offset=".15" stop-opacity=".851"/><stop offset=".3" stop-opacity=".708"/><stop offset=".5" stop-opacity=".525"/><stop offset=".75" stop-opacity=".295"/><stop offset="1" stop-opacity="0"/></radialGradient>
<radialGradient id="w354" gradientUnits="userSpaceOnUse" cx="223.9" cy="114.1" r="76.2"><stop offset="0" stop-opacity="1"/><stop offset=".05" stop-opacity=".95"/><stop offset=".15" stop-opacity=".851"/><stop offset=".3" stop-opacity=".709"/><stop offset=".5" stop-opacity=".526"/><stop offset=".75" stop-opacity=".296"/><stop offset="1" stop-opacity="0"/></radialGradient>
<radialGradient id="w355" gradientUnits="userSpaceOnUse" cx="223.9" cy="114.1" r="75.8"><stop offset="0" stop-opacity="1"/><stop offset=".05" stop-opacity=".95"/><stop offset=".15" stop-opacity=".852"/><stop offset=".3" stop-opacity=".71"/><stop offset=".5" stop-opacity=".527"/><stop offset=".75" stop-opacity=".297"/><stop offset="1" stop-opacity="0"/></radialGradient>
<radialGradient id="w356" gradientUnits="userSpaceOnUse" cx="223.9" cy="114.1" r="75.6"><stop offset="0" stop-opacity="1"/><stop offset=".05" stop-opacity=".95"/><stop offset=".15" stop-opacity=".853"/><stop offset=".3" stop-opacity=".711"/><stop offset=".5" stop-opacity=".528"/><stop offset=".75" stop-opacity=".298"/><stop offset="1" stop-opacity="0"/></radialGradient>
<radialGradient id="w357" gradientUnits="userSpaceOnUse" cx="223.9" cy="114.1" r="75.3"><stop offset="0" stop-opacity="1"/><stop offset=".05" stop-opacity=".95"/><stop offset=".15" stop-opacity=".853"/><stop offset=".3" stop-opacity=".712"/><stop offset=".5" stop-opacity=".529"/><stop offset=".75" stop-opacity=".299"/><stop offset="1" stop-opacity="0"/></radialGradient>
<radialGradient id="w358" gradientUnits="userSpaceOnUse" cx="223.9" cy="114.1" r="75.1"><stop offset="0" stop-opacity="1"/><stop offset=".05" stop-opacity=".95"/><stop offset=".15" stop-opacity=".854"/><stop offset=".3" stop-opacity=".713"/><stop offset=".5" stop-opacity=".53"/><stop offset=".75" stop-opacity=".299"/><stop offset="1" stop-opacity="0"/></radialGradient>
<radialGradient id="w359" gradientUnits="userSpaceOnUse" cx="223.9" cy="114.1" r="74.8"><stop offset="0" stop-opacity="1"/><stop offset=".05" stop-opacity=".951"/><stop offset=".15" stop-opacity=".854"/><stop offset=".3" stop-opacity=".714"/><stop offset=".5" stop-opacity=".531"/><stop offset=".75" stop-opacity=".3"/><stop offset="1" stop-opacity="0"/></radialGradient>
<radialGradient id="w360" gradientUnits="userSpaceOnUse" cx="223.9" cy="114.1" r="74.6"><stop offset="0" stop-opacity="1"/><stop offset=".05" stop-opacity=".951"/><stop offset=".15" stop-opacity=".855"/><stop offset=".3" stop-opacity=".715"/><stop offset=".5" stop-opacity=".532"/><stop offset=".75" stop-opacity=".301"/><stop offset="1" stop-opacity="0"/></radialGradient>
<radialGradient id="w361" gradientUnits="userSpaceOnUse" cx="223.9" cy="114.1" r="74.5"><stop offset="0" stop-opacity="1"/><stop offset=".05" stop-opacity=".951"/><stop offset=".15" stop-opacity=".855"/><stop offset=".3" stop-opacity=".715"/><stop offset=".5" stop-opacity=".533"/><stop offset=".75" stop-opacity=".302"/><stop offset="1" stop-opacity="0"/></radialGradient>
<radialGradient id="w362" gradientUnits="userSpaceOnUse" cx="223.9" cy="114.1" r="74.3"><stop offset="0" stop-opacity="1"/><stop offset=".05" stop-opacity=".951"/><stop offset=".15" stop-opacity=".856"/><stop offset=".3" stop-opacity=".716"/><stop offset=".5" stop-opacity=".534"/><stop offset=".75" stop-opacity=".303"/><stop offset="1" stop-opacity="0"/></radialGradient>
</defs><g shape-rendering="crispEdges">
<path d="M224 114L224 -786L240 -786Z" fill="url(#w0)"/>
<path d="M224 114L240 -786L255 -785Z" fill="url(#w1)"/>
<path d="M224 114L255 -785L271 -785Z" fill="url(#w2)"/>
<path d="M224 114L271 -785L287 -784Z" fill="url(#w3)"/>
<path d="M224 114L287 -784L302 -782Z" fill="url(#w4)"/>
<path d="M224 114L302 -782L318 -781Z" fill="url(#w5)"/>
<path d="M224 114L318 -781L334 -779Z" fill="url(#w6)"/>
<path d="M224 114L334 -779L349 -777Z" fill="url(#w7)"/>
<path d="M224 114L349 -777L365 -775Z" fill="url(#w8)"/>
<path d="M224 114L365 -775L380 -772Z" fill="url(#w9)"/>
<path d="M224 114L380 -772L396 -769Z" fill="url(#w10)"/>
<path d="M224 114L396 -769L411 -766Z" fill="url(#w11)"/>
<path d="M224 114L411 -766L426 -763Z" fill="url(#w12)"/>
<path d="M224 114L426 -763L442 -759Z" fill="url(#w13)"/>
<path d="M224 114L442 -759L457 -755Z" fill="url(#w14)"/>
<path d="M224 114L457 -755L472 -751Z" fill="url(#w15)"/>
<path d="M224 114L472 -751L487 -747Z" fill="url(#w16)"/>
<path d="M224 114L487 -747L502 -742Z" fill="url(#w17)"/>
<path d="M224 114L502 -742L517 -737Z" fill="url(#w18)"/>
<path d="M224 114L517 -737L532 -732Z" fill="url(#w19)"/>
<path d="M224 114L532 -732L546 -726Z" fill="url(#w20)"/>
<path d="M224 114L546 -726L561 -720Z" fill="url(#w21)"/>
<path d="M224 114L561 -720L576 -714Z" fill="url(#w22)"/>
<path d="M224 114L576 -714L590 -708Z" fill="url(#w23)"/>
<path d="M224 114L590 -708L604 -702Z" fill="url(#w24)"/>
<path d="M224 114L604 -702L618 -695Z" fill="url(#w25)"/>
<path d="M224 114L618 -695L633 -688Z" fill="url(#w26)"/>
<path d="M224 114L633 -688L646 -681Z" fill="url(#w27)"/>
<path d="M224 114L646 -681L660 -673Z" fill="url(#w28)"/>
<path d="M224 114L660 -673L674 -665Z" fill="url(#w29)"/>
<path d="M224 114L674 -665L687 -657Z" fill="url(#w30)"/>
<path d="M224 114L687 -657L701 -649Z" fill="url(#w31)"/>
<path d="M224 114L701 -649L714 -641Z" fill="url(#w32)"/>
<path d="M224 114L714 -641L727 -632Z" fill="url(#w33)"/>
<path d="M224 114L727 -632L740 -623Z" fill="url(#w34)"/>
<path d="M224 114L740 -623L753 -614Z" fill="url(#w35)"/>
<path d="M224 114L753 -614L766 -605Z" fill="url(#w36)"/>
<path d="M224 114L766 -605L778 -595Z" fill="url(#w37)"/>
<path d="M224 114L778 -595L790 -585Z" fill="url(#w38)"/>
<path d="M224 114L790 -585L802 -575Z" fill="url(#w39)"/>
<path d="M224 114L802 -575L814 -565Z" fill="url(#w40)"/>
<path d="M224 114L814 -565L826 -555Z" fill="url(#w41)"/>
<path d="M224 114L826 -555L838 -544Z" fill="url(#w42)"/>
<path d="M224 114L838 -544L849 -533Z" fill="url(#w43)"/>
<path d="M224 114L849 -533L860 -522Z" fill="url(#w44)"/>
<path d="M224 114L860 -522L871 -511Z" fill="url(#w45)"/>
<path d="M224 114L871 -511L882 -500Z" fill="url(#w46)"/>
<path d="M224 114L882 -500L893 -488Z" fill="url(#w47)"/>
<path d="M224 114L893 -488L903 -476Z" fill="url(#w48)"/>
<path d="M224 114L903 -476L913 -464Z" fill="url(#w49)"/>
<path d="M224 114L913 -464L923 -452Z" fill="url(#w50)"/>
<path d="M224 114L923 -452L933 -440Z" fill="url(#w51)"/>
<path d="M224 114L933 -440L943 -428Z" fill="url(#w52)"/>
<path d="M224 114L943 -428L952 -415Z" fill="url(#w53)"/>
<path d="M224 114L952 -415L961 -402Z" fill="url(#w54)"/>
<path d="M224 114L961 -402L970 -389Z" fill="url(#w55)"/>
<path d="M224 114L970 -389L979 -376Z" fill="url(#w56)"/>
<path d="M224 114L979 -376L987 -363Z" fill="url(#w57)"/>
<path d="M224 114L987 -363L995 -349Z" fill="url(#w58)"/>
<path d="M224 114L995 -349L1003 -336Z" fill="url(#w59)"/>
<path d="M224 114L1003 -336L1011 -322Z" fill="url(#w60)"/>
<path d="M224 114L1011 -322L1019 -308Z" fill="url(#w61)"/>
<path d="M224 114L1019 -308L1026 -294Z" fill="url(#w62)"/>
<path d="M224 114L1026 -294L1033 -280Z" fill="url(#w63)"/>
<path d="M224 114L1033 -280L1040 -266Z" fill="url(#w64)"/>
<path d="M224 114L1040 -266L1046 -252Z" fill="url(#w65)"/>
<path d="M224 114L1046 -252L1052 -238Z" fill="url(#w66)"/>
<path d="M224 114L1052 -238L1058 -223Z" fill="url(#w67)"/>
<path d="M224 114L1058 -223L1064 -208Z" fill="url(#w68)"/>
<path d="M224 114L1064 -208L1070 -194Z" fill="url(#w69)"/>
<path d="M224 114L1070 -194L1075 -179Z" fill="url(#w70)"/>
<path d="M224 114L1075 -179L1080 -164Z" fill="url(#w71)"/>
<path d="M224 114L1080 -164L1085 -149Z" fill="url(#w72)"/>
<path d="M224 114L1085 -149L1089 -134Z" fill="url(#w73)"/>
<path d="M224 114L1089 -134L1093 -119Z" fill="url(#w74)"/>
<path d="M224 114L1093 -119L1097 -104Z" fill="url(#w75)"/>
<path d="M224 114L1097 -104L1101 -88Z" fill="url(#w76)"/>
<path d="M224 114L1101 -88L1104 -73Z" fill="url(#w77)"/>
<path d="M224 114L1104 -73L1107 -58Z" fill="url(#w78)"/>
<path d="M224 114L1107 -58L1110 -42Z" fill="url(#w79)"/>
<path d="M224 114L1110 -42L1112 -34Z" fill="url(#w80)"/>
<path d="M224 114L1112 -34L1113 -27Z" fill="url(#w81)"/>
<path d="M224 114L1113 -27L1115 -11Z" fill="url(#w82)"/>
<path d="M224 114L1115 -11L1117 4Z" fill="url(#w83)"/>
<path d="M224 114L1117 4L1119 20Z" fill="url(#w84)"/>
<path d="M224 114L1119 20L1121 36Z" fill="url(#w85)"/>
<path d="M224 114L1121 36L1122 51Z" fill="url(#w86)"/>
<path d="M224 114L1122 51L1123 67Z" fill="url(#w87)"/>
<path d="M224 114L1123 67L1123 83Z" fill="url(#w88)"/>
<path d="M224 114L1123 83L1124 98Z" fill="url(#w89)"/>
<path d="M224 114L1124 98L1124 114Z" fill="url(#w90)"/>
<path d="M224 114L1124 114L1124 130Z" fill="url(#w91)"/>
<path d="M224 114L1124 130L1123 146Z" fill="url(#w92)"/>
<path d="M224 114L1123 146L1123 161Z" fill="url(#w93)"/>
<path d="M224 114L1123 161L1122 177Z" fill="url(#w94)"/>
<path d="M224 114L1122 177L1121 193Z" fill="url(#w95)"/>
<path d="M224 114L1121 193L1119 208Z" fill="url(#w96)"/>
<path d="M224 114L1119 208L1117 224Z" fill="url(#w97)"/>
<path d="M224 114L1117 224L1115 239Z" fill="url(#w98)"/>
<path d="M224 114L1115 239L1113 255Z" fill="url(#w99)"/>
<path d="M224 114L1113 255L1110 270Z" fill="url(#w100)"/>
<path d="M224 114L1110 270L1107 286Z" fill="url(#w101)"/>
<path d="M224 114L1107 286L1104 301Z" fill="url(#w102)"/>
<path d="M224 114L1104 301L1101 317Z" fill="url(#w103)"/>
<path d="M224 114L1101 317L1097 332Z" fill="url(#w104)"/>
<path d="M224 114L1097 332L1093 347Z" fill="url(#w105)"/>
<path d="M224 114L1093 347L1089 362Z" fill="url(#w106)"/>
<path d="M224 114L1089 362L1085 377Z" fill="url(#w107)"/>
<path d="M224 114L1085 377L1080 392Z" fill="url(#w108)"/>
<path d="M224 114L1080 392L1075 407Z" fill="url(#w109)"/>
<path d="M224 114L1075 407L1070 422Z" fill="url(#w110)"/>
<path d="M224 114L1070 422L1064 437Z" fill="url(#w111)"/>
<path d="M224 114L1064 437L1058 451Z" fill="url(#w112)"/>
<path d="M224 114L1058 451L1052 466Z" fill="url(#w113)"/>
<path d="M224 114L1052 466L1046 480Z" fill="url(#w114)"/>
<path d="M224 114L1046 480L1040 494Z" fill="url(#w115)"/>
<path d="M224 114L1040 494L1033 509Z" fill="url(#w116)"/>
<path d="M224 114L1033 509L1026 523Z" fill="url(#w117)"/>
<path d="M224 114L1026 523L1019 537Z" fill="url(#w118)"/>
<path d="M224 114L1019 537L1011 550Z" fill="url(#w119)"/>
<path d="M224 114L1011 550L1003 564Z" fill="url(#w120)"/>
<path d="M224 114L1003 564L995 578Z" fill="url(#w121)"/>
<path d="M224 114L995 578L987 591Z" fill="url(#w122)"/>
<path d="M224 114L987 591L979 604Z" fill="url(#w123)"/>
<path d="M224 114L979 604L970 617Z" fill="url(#w124)"/>
<path d="M224 114L970 617L961 630Z" fill="url(#w125)"/>
<path d="M224 114L961 630L952 643Z" fill="url(#w126)"/>
<path d="M224 114L952 643L943 656Z" fill="url(#w127)"/>
<path d="M224 114L943 656L933 668Z" fill="url(#w128)"/>
<path d="M224 114L933 668L923 681Z" fill="url(#w129)"/>
<path d="M224 114L923 681L913 693Z" fill="url(#w130)"/>
<path d="M224 114L913 693L903 705Z" fill="url(#w131)"/>
<path d="M224 114L903 705L893 716Z" fill="url(#w132)"/>
<path d="M224 114L893 716L882 728Z" fill="url(#w133)"/>
<path d="M224 114L882 728L871 739Z" fill="url(#w134)"/>
<path d="M224 114L871 739L860 751Z" fill="url(#w135)"/>
<path d="M224 114L860 751L849 762Z" fill="url(#w136)"/>
<path d="M224 114L849 762L838 772Z" fill="url(#w137)"/>
<path d="M224 114L838 772L826 783Z" fill="url(#w138)"/>
<path d="M224 114L826 783L814 793Z" fill="url(#w139)"/>
<path d="M224 114L814 793L802 804Z" fill="url(#w140)"/>
<path d="M224 114L802 804L790 814Z" fill="url(#w141)"/>
<path d="M224 114L790 814L778 823Z" fill="url(#w142)"/>
<path d="M224 114L778 823L766 833Z" fill="url(#w143)"/>
<path d="M224 114L766 833L753 842Z" fill="url(#w144)"/>
<path d="M224 114L753 842L740 851Z" fill="url(#w145)"/>
<path d="M224 114L740 851L727 860Z" fill="url(#w146)"/>
<path d="M224 114L727 860L714 869Z" fill="url(#w147)"/>
<path d="M224 114L714 869L701 877Z" fill="url(#w148)"/>
<path d="M224 114L701 877L687 886Z" fill="url(#w149)"/>
<path d="M224 114L687 886L674 894Z" fill="url(#w150)"/>
<path d="M224 114L674 894L660 901Z" fill="url(#w151)"/>
<path d="M224 114L660 901L646 909Z" fill="url(#w152)"/>
<path d="M224 114L646 909L633 916Z" fill="url(#w153)"/>
<path d="M224 114L633 916L618 923Z" fill="url(#w154)"/>
<path d="M224 114L618 923L604 930Z" fill="url(#w155)"/>
<path d="M224 114L604 930L590 936Z" fill="url(#w156)"/>
<path d="M224 114L590 936L576 943Z" fill="url(#w157)"/>
<path d="M224 114L576 943L561 949Z" fill="url(#w158)"/>
<path d="M224 114L561 949L546 954Z" fill="url(#w159)"/>
<path d="M224 114L546 954L532 960Z" fill="url(#w160)"/>
<path d="M224 114L532 960L517 965Z" fill="url(#w161)"/>
<path d="M224 114L517 965L502 970Z" fill="url(#w162)"/>
<path d="M224 114L502 970L487 975Z" fill="url(#w163)"/>
<path d="M224 114L487 975L472 979Z" fill="url(#w164)"/>
<path d="M224 114L472 979L457 983Z" fill="url(#w165)"/>
<path d="M224 114L457 983L442 987Z" fill="url(#w166)"/>
<path d="M224 114L442 987L426 991Z" fill="url(#w167)"/>
<path d="M224 114L426 991L411 994Z" fill="url(#w168)"/>
<path d="M224 114L411 994L396 998Z" fill="url(#w169)"/>
<path d="M224 114L396 998L380 1000Z" fill="url(#w170)"/>
<path d="M224 114L380 1000L365 1003Z" fill="url(#w171)"/>
<path d="M224 114L365 1003L349 1005Z" fill="url(#w172)"/>
<path d="M224 114L349 1005L334 1007Z" fill="url(#w173)"/>
<path d="M224 114L334 1007L318 1009Z" fill="url(#w174)"/>
<path d="M224 114L318 1009L302 1011Z" fill="url(#w175)"/>
<path d="M224 114L302 1011L287 1012Z" fill="url(#w176)"/>
<path d="M224 114L287 1012L271 1013Z" fill="url(#w177)"/>
<path d="M224 114L271 1013L255 1014Z" fill="url(#w178)"/>
<path d="M224 114L255 1014L240 1014Z" fill="url(#w179)"/>
<path d="M224 114L240 1014L224 1014Z" fill="url(#w180)"/>
<path d="M224 114L224 1014L208 1014Z" fill="url(#w181)"/>
<path d="M224 114L208 1014L193 1014Z" fill="url(#w182)"/>
<path d="M224 114L193 1014L177 1013Z" fill="url(#w183)"/>
<path d="M224 114L177 1013L161 1012Z" fill="url(#w184)"/>
<path d="M224 114L161 1012L146 1011Z" fill="url(#w185)"/>
<path d="M224 114L146 1011L140 1010Z" fill="url(#w186)"/>
<path d="M224 114L140 1010L130 1009Z" fill="url(#w187)"/>
<path d="M224 114L130 1009L114 1007Z" fill="url(#w188)"/>
<path d="M224 114L114 1007L99 1005Z" fill="url(#w189)"/>
<path d="M224 114L99 1005L83 1003Z" fill="url(#w190)"/>
<path d="M224 114L83 1003L68 1000Z" fill="url(#w191)"/>
<path d="M224 114L68 1000L52 998Z" fill="url(#w192)"/>
<path d="M224 114L52 998L37 994Z" fill="url(#w193)"/>
<path d="M224 114L37 994L21 991Z" fill="url(#w194)"/>
<path d="M224 114L21 991L6 987Z" fill="url(#w195)"/>
<path d="M224 114L6 987L-9 983Z" fill="url(#w196)"/>
<path d="M224 114L-9 983L-24 979Z" fill="url(#w197)"/>
<path d="M224 114L-24 979L-39 975Z" fill="url(#w198)"/>
<path d="M224 114L-39 975L-54 970Z" fill="url(#w199)"/>
<path d="M224 114L-54 970L-69 965Z" fill="url(#w200)"/>
<path d="M224 114L-69 965L-84 960Z" fill="url(#w201)"/>
<path d="M224 114L-84 960L-99 954Z" fill="url(#w202)"/>
<path d="M224 114L-99 954L-113 949Z" fill="url(#w203)"/>
<path d="M224 114L-113 949L-128 943Z" fill="url(#w204)"/>
<path d="M224 114L-128 943L-142 936Z" fill="url(#w205)"/>
<path d="M224 114L-142 936L-156 930Z" fill="url(#w206)"/>
<path d="M224 114L-156 930L-171 923Z" fill="url(#w207)"/>
<path d="M224 114L-171 923L-185 916Z" fill="url(#w208)"/>
<path d="M224 114L-185 916L-199 909Z" fill="url(#w209)"/>
<path d="M224 114L-199 909L-212 901Z" fill="url(#w210)"/>
<path d="M224 114L-212 901L-226 894Z" fill="url(#w211)"/>
<path d="M224 114L-226 894L-240 886Z" fill="url(#w212)"/>
<path d="M224 114L-240 886L-253 877Z" fill="url(#w213)"/>
<path d="M224 114L-253 877L-266 869Z" fill="url(#w214)"/>
<path d="M224 114L-266 869L-279 860Z" fill="url(#w215)"/>
<path d="M224 114L-279 860L-292 851Z" fill="url(#w216)"/>
<path d="M224 114L-292 851L-305 842Z" fill="url(#w217)"/>
<path d="M224 114L-305 842L-318 833Z" fill="url(#w218)"/>
<path d="M224 114L-318 833L-330 823Z" fill="url(#w219)"/>
<path d="M224 114L-330 823L-342 814Z" fill="url(#w220)"/>
<path d="M224 114L-342 814L-355 804Z" fill="url(#w221)"/>
<path d="M224 114L-355 804L-367 793Z" fill="url(#w222)"/>
<path d="M224 114L-367 793L-378 783Z" fill="url(#w223)"/>
<path d="M224 114L-378 783L-390 772Z" fill="url(#w224)"/>
<path d="M224 114L-390 772L-401 762Z" fill="url(#w225)"/>
<path d="M224 114L-401 762L-412 751Z" fill="url(#w226)"/>
<path d="M224 114L-412 751L-423 739Z" fill="url(#w227)"/>
<path d="M224 114L-423 739L-434 728Z" fill="url(#w228)"/>
<path d="M224 114L-434 728L-445 716Z" fill="url(#w229)"/>
<path d="M224 114L-445 716L-455 705Z" fill="url(#w230)"/>
<path d="M224 114L-455 705L-465 693Z" fill="url(#w231)"/>
<path d="M224 114L-465 693L-475 681Z" fill="url(#w232)"/>
<path d="M224 114L-475 681L-485 668Z" fill="url(#w233)"/>
<path d="M224 114L-485 668L-495 656Z" fill="url(#w234)"/>
<path d="M224 114L-495 656L-504 643Z" fill="url(#w235)"/>
<path d="M224 114L-504 643L-513 630Z" fill="url(#w236)"/>
<path d="M224 114L-513 630L-522 617Z" fill="url(#w237)"/>
<path d="M224 114L-522 617L-531 604Z" fill="url(#w238)"/>
<path d="M224 114L-531 604L-539 591Z" fill="url(#w239)"/>
<path d="M224 114L-539 591L-548 578Z" fill="url(#w240)"/>
<path d="M224 114L-548 578L-555 564Z" fill="url(#w241)"/>
<path d="M224 114L-555 564L-563 550Z" fill="url(#w242)"/>
<path d="M224 114L-563 550L-571 537Z" fill="url(#w243)"/>
<path d="M224 114L-571 537L-578 523Z" fill="url(#w244)"/>
<path d="M224 114L-578 523L-585 509Z" fill="url(#w245)"/>
<path d="M224 114L-585 509L-592 494Z" fill="url(#w246)"/>
<path d="M224 114L-592 494L-598 480Z" fill="url(#w247)"/>
<path d="M224 114L-598 480L-605 466Z" fill="url(#w248)"/>
<path d="M224 114L-605 466L-611 451Z" fill="url(#w249)"/>
<path d="M224 114L-611 451L-616 437Z" fill="url(#w250)"/>
<path d="M224 114L-616 437L-622 422Z" fill="url(#w251)"/>
<path d="M224 114L-622 422L-627 407Z" fill="url(#w252)"/>
<path d="M224 114L-627 407L-632 392Z" fill="url(#w253)"/>
<path d="M224 114L-632 392L-637 377Z" fill="url(#w254)"/>
<path d="M224 114L-637 377L-641 362Z" fill="url(#w255)"/>
<path d="M224 114L-641 362L-645 347Z" fill="url(#w256)"/>
<path d="M224 114L-645 347L-649 332Z" fill="url(#w257)"/>
<path d="M224 114L-649 332L-653 317Z" fill="url(#w258)"/>
<path d="M224 114L-653 317L-656 301Z" fill="url(#w259)"/>
<path d="M224 114L-656 301L-660 286Z" fill="url(#w260)"/>
<path d="M224 114L-660 286L-662 270Z" fill="url(#w261)"/>
<path d="M224 114L-662 270L-665 255Z" fill="url(#w262)"/>
<path d="M224 114L-665 255L-667 239Z" fill="url(#w263)"/>
<path d="M224 114L-667 239L-669 224Z" fill="url(#w264)"/>
<path d="M224 114L-669 224L-671 208Z" fill="url(#w265)"/>
<path d="M224 114L-671 208L-673 193Z" fill="url(#w266)"/>
<path d="M224 114L-673 193L-674 177Z" fill="url(#w267)"/>
<path d="M224 114L-674 177L-675 161Z" fill="url(#w268)"/>
<path d="M224 114L-675 161L-676 146Z" fill="url(#w269)"/>
<path d="M224 114L-676 146L-676 130Z" fill="url(#w270)"/>
<path d="M224 114L-676 130L-676 114Z" fill="url(#w271)"/>
<path d="M224 114L-676 114L-676 98Z" fill="url(#w272)"/>
<path d="M224 114L-676 98L-676 83Z" fill="url(#w273)"/>
<path d="M224 114L-676 83L-675 67Z" fill="url(#w274)"/>
<path d="M224 114L-675 67L-674 51Z" fill="url(#w275)"/>
<path d="M224 114L-674 51L-673 36Z" fill="url(#w276)"/>
<path d="M224 114L-673 36L-671 20Z" fill="url(#w277)"/>
<path d="M224 114L-671 20L-669 4Z" fill="url(#w278)"/>
<path d="M224 114L-669 4L-667 -11Z" fill="url(#w279)"/>
<path d="M224 114L-667 -11L-665 -27Z" fill="url(#w280)"/>
<path d="M224 114L-665 -27L-662 -42Z" fill="url(#w281)"/>
<path d="M224 114L-662 -42L-660 -58Z" fill="url(#w282)"/>
<path d="M224 114L-660 -58L-656 -73Z" fill="url(#w283)"/>
<path d="M224 114L-656 -73L-653 -88Z" fill="url(#w284)"/>
<path d="M224 114L-653 -88L-649 -104Z" fill="url(#w285)"/>
<path d="M224 114L-649 -104L-645 -119Z" fill="url(#w286)"/>
<path d="M224 114L-645 -119L-641 -134Z" fill="url(#w287)"/>
<path d="M224 114L-641 -134L-637 -149Z" fill="url(#w288)"/>
<path d="M224 114L-637 -149L-632 -164Z" fill="url(#w289)"/>
<path d="M224 114L-632 -164L-627 -179Z" fill="url(#w290)"/>
<path d="M224 114L-627 -179L-622 -194Z" fill="url(#w291)"/>
<path d="M224 114L-622 -194L-616 -208Z" fill="url(#w292)"/>
<path d="M224 114L-616 -208L-611 -223Z" fill="url(#w293)"/>
<path d="M224 114L-611 -223L-605 -238Z" fill="url(#w294)"/>
<path d="M224 114L-605 -238L-598 -252Z" fill="url(#w295)"/>
<path d="M224 114L-598 -252L-592 -266Z" fill="url(#w296)"/>
<path d="M224 114L-592 -266L-585 -280Z" fill="url(#w297)"/>
<path d="M224 114L-585 -280L-578 -294Z" fill="url(#w298)"/>
<path d="M224 114L-578 -294L-571 -308Z" fill="url(#w299)"/>
<path d="M224 114L-571 -308L-563 -322Z" fill="url(#w300)"/>
<path d="M224 114L-563 -322L-555 -336Z" fill="url(#w301)"/>
<path d="M224 114L-555 -336L-548 -349Z" fill="url(#w302)"/>
<path d="M224 114L-548 -349L-539 -363Z" fill="url(#w303)"/>
<path d="M224 114L-539 -363L-531 -376Z" fill="url(#w304)"/>
<path d="M224 114L-531 -376L-522 -389Z" fill="url(#w305)"/>
<path d="M224 114L-522 -389L-513 -402Z" fill="url(#w306)"/>
<path d="M224 114L-513 -402L-504 -415Z" fill="url(#w307)"/>
<path d="M224 114L-504 -415L-495 -428Z" fill="url(#w308)"/>
<path d="M224 114L-495 -428L-485 -440Z" fill="url(#w309)"/>
<path d="M224 114L-485 -440L-475 -452Z" fill="url(#w310)"/>
<path d="M224 114L-475 -452L-465 -464Z" fill="url(#w311)"/>
<path d="M224 114L-465 -464L-455 -476Z" fill="url(#w312)"/>
<path d="M224 114L-455 -476L-445 -488Z" fill="url(#w313)"/>
<path d="M224 114L-445 -488L-434 -500Z" fill="url(#w314)"/>
<path d="M224 114L-434 -500L-423 -511Z" fill="url(#w315)"/>
<path d="M224 114L-423 -511L-414 -521Z" fill="url(#w316)"/>
<path d="M224 114L-414 -521L-412 -522Z" fill="url(#w317)"/>
<path d="M224 114L-412 -522L-401 -533Z" fill="url(#w318)"/>
<path d="M224 114L-401 -533L-390 -544Z" fill="url(#w319)"/>
<path d="M224 114L-390 -544L-378 -555Z" fill="url(#w320)"/>
<path d="M224 114L-378 -555L-367 -565Z" fill="url(#w321)"/>
<path d="M224 114L-367 -565L-355 -575Z" fill="url(#w322)"/>
<path d="M224 114L-355 -575L-342 -585Z" fill="url(#w323)"/>
<path d="M224 114L-342 -585L-330 -595Z" fill="url(#w324)"/>
<path d="M224 114L-330 -595L-318 -605Z" fill="url(#w325)"/>
<path d="M224 114L-318 -605L-305 -614Z" fill="url(#w326)"/>
<path d="M224 114L-305 -614L-292 -623Z" fill="url(#w327)"/>
<path d="M224 114L-292 -623L-279 -632Z" fill="url(#w328)"/>
<path d="M224 114L-279 -632L-266 -641Z" fill="url(#w329)"/>
<path d="M224 114L-266 -641L-253 -649Z" fill="url(#w330)"/>
<path d="M224 114L-253 -649L-240 -657Z" fill="url(#w331)"/>
<path d="M224 114L-240 -657L-226 -665Z" fill="url(#w332)"/>
<path d="M224 114L-226 -665L-212 -673Z" fill="url(#w333)"/>
<path d="M224 114L-212 -673L-199 -681Z" fill="url(#w334)"/>
<path d="M224 114L-199 -681L-185 -688Z" fill="url(#w335)"/>
<path d="M224 114L-185 -688L-171 -695Z" fill="url(#w336)"/>
<path d="M224 114L-171 -695L-156 -702Z" fill="url(#w337)"/>
<path d="M224 114L-156 -702L-142 -708Z" fill="url(#w338)"/>
<path d="M224 114L-142 -708L-128 -714Z" fill="url(#w339)"/>
<path d="M224 114L-128 -714L-113 -720Z" fill="url(#w340)"/>
<path d="M224 114L-113 -720L-99 -726Z" fill="url(#w341)"/>
<path d="M224 114L-99 -726L-84 -732Z" fill="url(#w342)"/>
<path d="M224 114L-84 -732L-69 -737Z" fill="url(#w343)"/>
<path d="M224 114L-69 -737L-54 -742Z" fill="url(#w344)"/>
<path d="M224 114L-54 -742L-39 -747Z" fill="url(#w345)"/>
<path d="M224 114L-39 -747L-24 -751Z" fill="url(#w346)"/>
<path d="M224 114L-24 -751L-9 -755Z" fill="url(#w347)"/>
<path d="M224 114L-9 -755L6 -759Z" fill="url(#w348)"/>
<path d="M224 114L6 -759L21 -763Z" fill="url(#w349)"/>
<path d="M224 114L21 -763L37 -766Z" fill="url(#w350)"/>
<path d="M224 114L37 -766L52 -769Z" fill="url(#w351)"/>
<path d="M224 114L52 -769L68 -772Z" fill="url(#w352)"/>
<path d="M224 114L68 -772L83 -775Z" fill="url(#w353)"/>
<path d="M224 114L83 -775L99 -777Z" fill="url(#w354)"/>
<path d="M224 114L99 -777L114 -779Z" fill="url(#w355)"/>
<path d="M224 114L114 -779L130 -781Z" fill="url(#w356)"/>
<path d="M224 114L130 -781L146 -782Z" fill="url(#w357)"/>
<path d="M224 114L146 -782L161 -784Z" fill="url(#w358)"/>
<path d="M224 114L161 -784L177 -785Z" fill="url(#w359)"/>
<path d="M224 114L177 -785L193 -785Z" fill="url(#w360)"/>
<path d="M224 114L193 -785L208 -786Z" fill="url(#w361)"/>
<path d="M224 114L208 -786L224 -786Z" fill="url(#w362)"/>
</g></svg>
</div>
</div>
<div class="a" style="left:1223.5px;top:674.4px;width:6.5px;height:1.3px;background:#c8c8c8"></div>
<div class="t" style="left:1214.2px;top:667.4px;font-size:15.60px;color:#dcdcdc;transform:scaleX(0.960);">0</div>
<div class="a" style="left:1223.5px;top:630.9px;width:6.5px;height:1.3px;background:#c8c8c8"></div>
<div class="t" style="left:1193.4px;top:623.9px;font-size:15.60px;color:#dcdcdc;transform:scaleX(0.960);">0.05</div>
<div class="a" style="left:1223.5px;top:587.5px;width:6.5px;height:1.3px;background:#c8c8c8"></div>
<div class="t" style="left:1201.7px;top:580.5px;font-size:15.60px;color:#dcdcdc;transform:scaleX(0.960);">0.1</div>
<div class="a" style="left:1223.5px;top:544.0px;width:6.5px;height:1.3px;background:#c8c8c8"></div>
<div class="t" style="left:1193.4px;top:537.0px;font-size:15.60px;color:#dcdcdc;transform:scaleX(0.960);">0.15</div>
<div class="a" style="left:1223.5px;top:500.6px;width:6.5px;height:1.3px;background:#c8c8c8"></div>
<div class="t" style="left:1201.7px;top:493.6px;font-size:15.60px;color:#dcdcdc;transform:scaleX(0.960);">0.2</div>
<div class="a" style="left:1223.5px;top:457.1px;width:6.5px;height:1.3px;background:#c8c8c8"></div>
<div class="t" style="left:1193.4px;top:450.1px;font-size:15.60px;color:#dcdcdc;transform:scaleX(0.960);">0.25</div>
<div class="a" style="left:1223.5px;top:413.6px;width:6.5px;height:1.3px;background:#c8c8c8"></div>
<div class="t" style="left:1201.7px;top:406.7px;font-size:15.60px;color:#dcdcdc;transform:scaleX(0.960);">0.3</div>
<div class="a" style="left:1223.5px;top:370.2px;width:6.5px;height:1.3px;background:#c8c8c8"></div>
<div class="t" style="left:1193.4px;top:363.2px;font-size:15.60px;color:#dcdcdc;transform:scaleX(0.960);">0.35</div>
<div class="a" style="left:1223.5px;top:326.8px;width:6.5px;height:1.3px;background:#c8c8c8"></div>
<div class="t" style="left:1201.7px;top:319.8px;font-size:15.60px;color:#dcdcdc;transform:scaleX(0.960);">0.4</div>
<div class="a" style="left:1223.5px;top:283.3px;width:6.5px;height:1.3px;background:#c8c8c8"></div>
<div class="t" style="left:1193.4px;top:276.3px;font-size:15.60px;color:#dcdcdc;transform:scaleX(0.960);">0.45</div>
<div class="a" style="left:1223.5px;top:239.8px;width:6.5px;height:1.3px;background:#c8c8c8"></div>
<div class="t" style="left:1201.7px;top:232.9px;font-size:15.60px;color:#dcdcdc;transform:scaleX(0.960);">0.5</div>
<div class="a" style="left:1223.5px;top:196.4px;width:6.5px;height:1.3px;background:#c8c8c8"></div>
<div class="t" style="left:1193.4px;top:189.4px;font-size:15.60px;color:#dcdcdc;transform:scaleX(0.960);">0.55</div>
<div class="a" style="left:1229.3px;top:674.4px;width:1.3px;height:6.5px;background:#c8c8c8"></div>
<div class="t" style="left:1225.8px;top:684.1px;font-size:15.60px;color:#dcdcdc;transform:scaleX(0.960);">0</div>
<div class="a" style="left:1285.8px;top:674.4px;width:1.3px;height:6.5px;background:#c8c8c8"></div>
<div class="t" style="left:1271.8px;top:684.1px;font-size:15.60px;color:#dcdcdc;transform:scaleX(0.960);">0.05</div>
<div class="a" style="left:1342.1px;top:674.4px;width:1.3px;height:6.5px;background:#c8c8c8"></div>
<div class="t" style="left:1332.4px;top:684.1px;font-size:15.60px;color:#dcdcdc;transform:scaleX(0.960);">0.1</div>
<div class="a" style="left:1398.5px;top:674.4px;width:1.3px;height:6.5px;background:#c8c8c8"></div>
<div class="t" style="left:1384.6px;top:684.1px;font-size:15.60px;color:#dcdcdc;transform:scaleX(0.960);">0.15</div>
<div class="a" style="left:1454.9px;top:674.4px;width:1.3px;height:6.5px;background:#c8c8c8"></div>
<div class="t" style="left:1445.2px;top:684.1px;font-size:15.60px;color:#dcdcdc;transform:scaleX(0.960);">0.2</div>
<div class="a" style="left:1511.3px;top:674.4px;width:1.3px;height:6.5px;background:#c8c8c8"></div>
<div class="t" style="left:1497.4px;top:684.1px;font-size:15.60px;color:#dcdcdc;transform:scaleX(0.960);">0.25</div>
<div class="a" style="left:1567.8px;top:674.4px;width:1.3px;height:6.5px;background:#c8c8c8"></div>
<div class="t" style="left:1558.0px;top:684.1px;font-size:15.60px;color:#dcdcdc;transform:scaleX(0.960);">0.3</div>
<div class="a" style="left:1624.1px;top:674.4px;width:1.3px;height:6.5px;background:#c8c8c8"></div>
<div class="t" style="left:1610.2px;top:684.1px;font-size:15.60px;color:#dcdcdc;transform:scaleX(0.960);">0.35</div>
<div class="a" style="left:1680.5px;top:674.4px;width:1.3px;height:6.5px;background:#c8c8c8"></div>
<div class="t" style="left:1670.8px;top:684.1px;font-size:15.60px;color:#dcdcdc;transform:scaleX(0.960);">0.4</div>
<div class="a" style="left:1736.9px;top:674.4px;width:1.3px;height:6.5px;background:#c8c8c8"></div>
<div class="t" style="left:1723.0px;top:684.1px;font-size:15.60px;color:#dcdcdc;transform:scaleX(0.960);">0.45</div>
<div class="a" style="left:1793.3px;top:674.4px;width:1.3px;height:6.5px;background:#c8c8c8"></div>
<div class="t" style="left:1783.6px;top:684.1px;font-size:15.60px;color:#dcdcdc;transform:scaleX(0.960);">0.5</div>
<div class="a" style="left:1849.8px;top:674.4px;width:1.3px;height:6.5px;background:#c8c8c8"></div>
<div class="t" style="left:1835.8px;top:684.1px;font-size:15.60px;color:#dcdcdc;transform:scaleX(0.960);">0.55</div>
<svg class="a" style="left:1229px;top:152px" width="680" height="523">
<rect x="216.2" y="106.9" width="14.5" height="14.5" fill="#f4f6ff" fill-opacity=".85" stroke="#000" stroke-width="2.4"/>
<rect x="134.2" y="24.6" width="14.8" height="14.8" fill="none" stroke="#fff" stroke-width="2"/>
<rect x="159.6" y="50.4" width="14.8" height="14.8" fill="none" stroke="#fff" stroke-width="2"/>
<rect x="201.7" y="42.1" width="14.8" height="14.8" fill="none" stroke="#fff" stroke-width="2"/>
<rect x="223.6" y="32.9" width="14.8" height="14.8" fill="none" stroke="#fff" stroke-width="2"/>
<rect x="198.5" y="65.5" width="14.8" height="14.8" fill="none" stroke="#fff" stroke-width="2"/>
<rect x="167.3" y="98.2" width="14.8" height="14.8" fill="none" stroke="#fff" stroke-width="2"/>
<rect x="149.9" y="118.6" width="14.8" height="14.8" fill="none" stroke="#fff" stroke-width="2"/>
<rect x="155.6" y="151.5" width="14.8" height="14.8" fill="none" stroke="#fff" stroke-width="2"/>
<rect x="191.6" y="148.6" width="14.8" height="14.8" fill="none" stroke="#fff" stroke-width="2"/>
<rect x="213.2" y="154.3" width="14.8" height="14.8" fill="none" stroke="#fff" stroke-width="2"/>
<rect x="250.8" y="173.3" width="14.8" height="14.8" fill="none" stroke="#fff" stroke-width="2"/>
<rect x="194.4" y="204.5" width="14.8" height="14.8" fill="none" stroke="#fff" stroke-width="2"/>
<rect x="194.4" y="258.6" width="14.8" height="14.8" fill="none" stroke="#fff" stroke-width="2"/>
<rect x="191.7" y="377.1" width="14.8" height="14.8" fill="none" stroke="#fff" stroke-width="2"/>
<rect x="337.4" y="226.3" width="14.8" height="14.8" fill="none" stroke="#fff" stroke-width="2"/>
<rect x="317.5" y="143.1" width="14.8" height="14.8" fill="none" stroke="#fff" stroke-width="2"/>
<rect x="351.5" y="93.8" width="14.8" height="14.8" fill="none" stroke="#fff" stroke-width="2"/>
<rect x="416.7" y="81.0" width="14.8" height="14.8" fill="none" stroke="#fff" stroke-width="2"/>
<rect x="501.8" y="58.9" width="14.8" height="14.8" fill="none" stroke="#fff" stroke-width="2"/>
<rect x="252.3" y="37.7" width="14.8" height="14.8" fill="none" stroke="#fff" stroke-width="2"/>
<rect x="285.5" y="44.6" width="14.8" height="14.8" fill="none" stroke="#fff" stroke-width="2"/>
<rect x="331.5" y="44.6" width="14.8" height="14.8" fill="none" stroke="#fff" stroke-width="2"/>
<rect x="331.5" y="50.6" width="14.8" height="14.8" fill="none" stroke="#fff" stroke-width="2"/>
<rect x="304.2" y="56.6" width="14.8" height="14.8" fill="none" stroke="#fff" stroke-width="2"/>
<rect x="311.9" y="64.2" width="14.8" height="14.8" fill="none" stroke="#fff" stroke-width="2"/>
<rect x="277.9" y="65.1" width="14.8" height="14.8" fill="none" stroke="#fff" stroke-width="2"/>
<rect x="258.3" y="72.7" width="14.8" height="14.8" fill="none" stroke="#fff" stroke-width="2"/>
<rect x="256.6" y="87.2" width="14.8" height="14.8" fill="none" stroke="#fff" stroke-width="2"/>
<rect x="268.5" y="80.4" width="14.8" height="14.8" fill="none" stroke="#fff" stroke-width="2"/>
<rect x="286.4" y="72.7" width="14.8" height="14.8" fill="none" stroke="#fff" stroke-width="2"/>
<rect x="304.2" y="73.6" width="14.8" height="14.8" fill="none" stroke="#fff" stroke-width="2"/>
<rect x="281.3" y="77.8" width="14.8" height="14.8" fill="none" stroke="#fff" stroke-width="2"/>
<rect x="292.6" y="68.6" width="14.8" height="14.8" fill="none" stroke="#fff" stroke-width="2"/>
<rect x="271.6" y="70.6" width="14.8" height="14.8" fill="none" stroke="#fff" stroke-width="2"/>
<circle cx="138.6" cy="29.1" r="4.3" fill="#00ff00" stroke="#000" stroke-width="1.5" stroke-opacity=".85"/>
<circle cx="166.0" cy="50.8" r="4.3" fill="#5a8a50" stroke="#000" stroke-width="1.5" stroke-opacity=".85"/>
<circle cx="213.6" cy="44.8" r="4.3" fill="#a0b050" stroke="#000" stroke-width="1.5" stroke-opacity=".85"/>
<circle cx="235.0" cy="39.1" r="4.3" fill="#ffff00" stroke="#000" stroke-width="1.5" stroke-opacity=".85"/>
<circle cx="207.6" cy="63.5" r="4.3" fill="#506040" stroke="#000" stroke-width="1.5" stroke-opacity=".85"/>
<circle cx="174.4" cy="98.4" r="4.3" fill="#70b0a0" stroke="#000" stroke-width="1.5" stroke-opacity=".85"/>
<circle cx="152.9" cy="121.2" r="4.3" fill="#00ffff" stroke="#000" stroke-width="1.5" stroke-opacity=".85"/>
<circle cx="157.3" cy="146.1" r="4.3" fill="#207888" stroke="#000" stroke-width="1.5" stroke-opacity=".85"/>
<circle cx="198.8" cy="143.2" r="4.3" fill="#607090" stroke="#000" stroke-width="1.5" stroke-opacity=".85"/>
<circle cx="214.9" cy="143.2" r="4.3" fill="#000000" stroke="#000" stroke-width="1.5" stroke-opacity=".85"/>
<circle cx="224.9" cy="147.5" r="4.3" fill="#8080a8" stroke="#000" stroke-width="1.5" stroke-opacity=".85"/>
<circle cx="251.2" cy="177.6" r="4.3" fill="#604870" stroke="#000" stroke-width="1.5" stroke-opacity=".85"/>
<circle cx="199.1" cy="200.5" r="4.3" fill="#505888" stroke="#000" stroke-width="1.5" stroke-opacity=".85"/>
<circle cx="199.1" cy="261.8" r="4.3" fill="#404880" stroke="#000" stroke-width="1.5" stroke-opacity=".85"/>
<circle cx="356.0" cy="225.4" r="4.3" fill="#ff00ff" stroke="#000" stroke-width="1.5" stroke-opacity=".85"/>
<circle cx="193.5" cy="391.8" r="4.3" fill="#0000ff" stroke="#000" stroke-width="1.5" stroke-opacity=".85"/>
<circle cx="369.4" cy="92.7" r="4.3" fill="#c06070" stroke="#000" stroke-width="1.5" stroke-opacity=".85"/>
<circle cx="441.2" cy="81.0" r="4.3" fill="#a04050" stroke="#000" stroke-width="1.5" stroke-opacity=".85"/>
<circle cx="513.5" cy="63.5" r="4.3" fill="#ff0000" stroke="#000" stroke-width="1.5" stroke-opacity=".85"/>
<circle cx="336.2" cy="138.6" r="4.3" fill="#b06090" stroke="#000" stroke-width="1.5" stroke-opacity=".85"/>
<circle cx="265.3" cy="41.8" r="4.3" fill="#e8c830" stroke="#000" stroke-width="1.5" stroke-opacity=".85"/>
<circle cx="298.9" cy="47.8" r="4.3" fill="#e0a830" stroke="#000" stroke-width="1.5" stroke-opacity=".85"/>
<circle cx="344.8" cy="51.6" r="4.3" fill="#d08030" stroke="#000" stroke-width="1.5" stroke-opacity=".85"/>
<circle cx="349.5" cy="55.0" r="4.3" fill="#b86828" stroke="#000" stroke-width="1.5" stroke-opacity=".85"/>
<circle cx="327.4" cy="59.3" r="4.3" fill="#704020" stroke="#000" stroke-width="1.5" stroke-opacity=".85"/>
<circle cx="337.6" cy="63.5" r="4.3" fill="#603818" stroke="#000" stroke-width="1.5" stroke-opacity=".85"/>
<circle cx="311.6" cy="60.1" r="4.3" fill="#8a5a3a" stroke="#000" stroke-width="1.5" stroke-opacity=".85"/>
<circle cx="292.9" cy="66.1" r="4.3" fill="#c08858" stroke="#000" stroke-width="1.5" stroke-opacity=".85"/>
<circle cx="309.1" cy="68.2" r="4.3" fill="#c88858" stroke="#000" stroke-width="1.5" stroke-opacity=".85"/>
<circle cx="315.9" cy="69.1" r="4.3" fill="#c07850" stroke="#000" stroke-width="1.5" stroke-opacity=".85"/>
<circle cx="314.2" cy="74.2" r="4.3" fill="#e8a080" stroke="#000" stroke-width="1.5" stroke-opacity=".85"/>
<circle cx="301.9" cy="75.0" r="4.3" fill="#d09070" stroke="#000" stroke-width="1.5" stroke-opacity=".85"/>
<circle cx="283.6" cy="76.7" r="4.3" fill="#a07050" stroke="#000" stroke-width="1.5" stroke-opacity=".85"/>
<circle cx="288.7" cy="79.3" r="4.3" fill="#604030" stroke="#000" stroke-width="1.5" stroke-opacity=".85"/>
<circle cx="285.3" cy="75.0" r="4.3" fill="#c08868" stroke="#000" stroke-width="1.5" stroke-opacity=".85"/>
<circle cx="291.6" cy="73.7" r="4.3" fill="#c89070" stroke="#000" stroke-width="1.5" stroke-opacity=".85"/>
<circle cx="268.2" cy="77.6" r="4.3" fill="#f0c8a0" stroke="#000" stroke-width="1.5" stroke-opacity=".85"/>
<circle cx="270.8" cy="86.9" r="4.3" fill="#d8a080" stroke="#000" stroke-width="1.5" stroke-opacity=".85"/>
<circle cx="266.5" cy="86.9" r="4.3" fill="#f0c0a0" stroke="#000" stroke-width="1.5" stroke-opacity=".85"/>
<circle cx="225.3" cy="111.5" r="4.3" fill="#f0f0f0" stroke="#000" stroke-width="1.5" stroke-opacity=".85"/>
<circle cx="226.5" cy="109.5" r="4.3" fill="#d8d8d8" stroke="#000" stroke-width="1.5" stroke-opacity=".85"/>
<circle cx="227.5" cy="107.0" r="4.3" fill="#909090" stroke="#000" stroke-width="1.5" stroke-opacity=".85"/>
<circle cx="228.5" cy="104.5" r="4.3" fill="#a0a0a0" stroke="#000" stroke-width="1.5" stroke-opacity=".85"/>
</svg>
<div class="a" style="left:1690px;top:490.5px;width:209px;height:137px;border:2px solid #6a6a6a;background:linear-gradient(135deg,#ff8a2a 0%,#ff6a28 45%,#ff4424 100%)"></div>
<svg class="a" style="left:1690px;top:490px" width="214" height="142">
<rect x="29.0" y="42.9" width="13.5" height="13.5" fill="none" stroke="#fff" stroke-width="2"/>
<rect x="6.3" y="77.8" width="13.5" height="13.5" fill="none" stroke="#fff" stroke-width="2"/>
<rect x="13.5" y="86.2" width="13.5" height="13.5" fill="none" stroke="#fff" stroke-width="2"/>
<rect x="22.0" y="99.0" width="13.5" height="13.5" fill="none" stroke="#fff" stroke-width="2"/>
<rect x="98.5" y="62.8" width="13.5" height="13.5" fill="none" stroke="#fff" stroke-width="2"/>
<rect x="102.8" y="103.2" width="13.5" height="13.5" fill="none" stroke="#fff" stroke-width="2"/>
<rect x="118.3" y="77.8" width="13.5" height="13.5" fill="none" stroke="#fff" stroke-width="2"/>
<rect x="141.0" y="21.0" width="13.5" height="13.5" fill="none" stroke="#fff" stroke-width="2"/>
<rect x="192.7" y="22.5" width="13.5" height="13.5" fill="none" stroke="#fff" stroke-width="2"/>
<rect x="191.2" y="61.5" width="13.5" height="13.5" fill="none" stroke="#fff" stroke-width="2"/>
<circle cx="107.0" cy="19.3" r="4.5" fill="#c08060" stroke="#111" stroke-width="1.4"/>
<circle cx="173.3" cy="42.5" r="4.5" fill="#c88060" stroke="#111" stroke-width="1.4"/>
<circle cx="195.4" cy="55.3" r="4.5" fill="#b87058" stroke="#111" stroke-width="1.4"/>
<circle cx="31.0" cy="59.5" r="4.5" fill="#c88060" stroke="#111" stroke-width="1.4"/>
<circle cx="60.8" cy="56.7" r="4.5" fill="#c88060" stroke="#111" stroke-width="1.4"/>
<circle cx="68.4" cy="58.1" r="4.5" fill="#e0a080" stroke="#111" stroke-width="1.4"/>
<circle cx="90.0" cy="62.4" r="4.5" fill="#c07858" stroke="#111" stroke-width="1.4"/>
<circle cx="11.7" cy="68.3" r="4.5" fill="#d09070" stroke="#111" stroke-width="1.4"/>
<circle cx="19.4" cy="81.6" r="4.5" fill="#604030" stroke="#111" stroke-width="1.4"/>
<circle cx="48.0" cy="71.2" r="4.5" fill="#c08060" stroke="#111" stroke-width="1.4"/>
<circle cx="98.5" cy="75.4" r="4.5" fill="#c08060" stroke="#111" stroke-width="1.4"/>
<circle cx="162.0" cy="84.2" r="4.5" fill="#f0a888" stroke="#111" stroke-width="1.4"/>
</svg>
<div class="a" style="left:1638px;top:639.7px;width:266px;height:29px;background:#333"></div>
<div class="t" style="left:1638.0px;top:644.3px;font-size:21.50px;color:#f4f4f4;transform:scaleX(0.973);">RGB Triplet: 217, 140, 94</div>
<div class="a" style="left:491px;top:728px;width:1427px;height:225px;overflow:hidden">
<div class="a" style="left:0;top:0;width:1427px;height:26.4px;background:linear-gradient(#2c2c2c 0,#262626 48%,#191919 52%,#141414)"></div>
<div class="a" style="left:0;top:0;width:10px;height:26.4px;background:#000"></div>
<div class="a" style="left:0;top:26.4px;width:10px;height:200px;background:#262626"></div>
<div class="a" style="left:10px;top:26.4px;width:1417px;height:24.73px;background:#3c3c3c"></div>
<div class="a" style="left:0;top:26.4px;width:10px;height:1px;background:#1a1a1a"></div>
<div class="a" style="left:10px;top:51.1px;width:1417px;height:24.73px;background:#777"></div>
<div class="a" style="left:0;top:51.1px;width:10px;height:1px;background:#1a1a1a"></div>
<div class="a" style="left:10px;top:75.9px;width:1417px;height:24.73px;background:#3c3c3c"></div>
<div class="a" style="left:0;top:75.9px;width:10px;height:1px;background:#1a1a1a"></div>
<div class="a" style="left:10px;top:100.6px;width:1417px;height:24.73px;background:#777"></div>
<div class="a" style="left:0;top:100.6px;width:10px;height:1px;background:#1a1a1a"></div>
<div class="a" style="left:10px;top:125.3px;width:1417px;height:24.73px;background:#3c3c3c"></div>
<div class="a" style="left:0;top:125.3px;width:10px;height:1px;background:#1a1a1a"></div>
<div class="a" style="left:10px;top:150.1px;width:1417px;height:24.73px;background:#777"></div>
<div class="a" style="left:0;top:150.1px;width:10px;height:1px;background:#1a1a1a"></div>
<div class="a" style="left:10px;top:174.8px;width:1417px;height:24.73px;background:#3c3c3c"></div>
<div class="a" style="left:0;top:174.8px;width:10px;height:1px;background:#1a1a1a"></div>
<div class="a" style="left:10px;top:199.5px;width:1417px;height:24.73px;background:#777"></div>
<div class="a" style="left:0;top:199.5px;width:10px;height:1px;background:#1a1a1a"></div>
</div>
<div class="t" style="left:585.8px;top:734.1px;font-size:14.40px;color:#f0f0f0;transform:scaleX(0.758);">White</div>
<div class="t" style="left:628.3px;top:734.1px;font-size:14.40px;color:#f0f0f0;transform:scaleX(0.758);">Gray 80</div>
<div class="t" style="left:672.3px;top:734.1px;font-size:14.40px;color:#f0f0f0;transform:scaleX(0.758);">Gray 65</div>
<div class="t" style="left:715.8px;top:734.1px;font-size:14.40px;color:#f0f0f0;transform:scaleX(0.758);">Gray 50</div>
<div class="t" style="left:759.6px;top:734.1px;font-size:14.40px;color:#f0f0f0;transform:scaleX(0.758);">Gray 35</div>
<div class="t" style="left:803.5px;top:734.1px;font-size:14.40px;color:#f0f0f0;transform:scaleX(0.758);">Black</div>
<div class="t" style="left:839.4px;top:734.1px;font-size:14.40px;color:#f0f0f0;transform:scaleX(0.758);">Dark Skin</div>
<div class="t" style="left:891.4px;top:734.1px;font-size:14.40px;color:#f0f0f0;transform:scaleX(0.758);">Light Skin</div>
<div class="t" style="left:944.2px;top:734.1px;font-size:14.40px;color:#f0f0f0;transform:scaleX(0.758);">Blue Sky</div>
<div class="t" style="left:991.6px;top:734.1px;font-size:14.40px;color:#f0f0f0;transform:scaleX(0.758);">Foliage</div>
<div class="t" style="left:1032.5px;top:734.1px;font-size:14.40px;color:#f0f0f0;transform:scaleX(0.758);">Blue Flower</div>
<div class="t" style="left:1096.1px;top:734.1px;font-size:14.40px;color:#f0f0f0;transform:scaleX(0.758);">Bluish Green</div>
<div class="t" style="left:1165.0px;top:734.1px;font-size:14.40px;color:#f0f0f0;transform:scaleX(0.758);">Orange</div>
<div class="t" style="left:1206.9px;top:734.1px;font-size:14.40px;color:#f0f0f0;transform:scaleX(0.758);">Purplish Blue</div>
<div class="t" style="left:1277.3px;top:734.1px;font-size:14.40px;color:#f0f0f0;transform:scaleX(0.758);">Moderate Red</div>
<div class="t" style="left:1354.0px;top:734.1px;font-size:14.40px;color:#f0f0f0;transform:scaleX(0.758);">Purple</div>
<div class="t" style="left:1391.8px;top:734.1px;font-size:14.40px;color:#f0f0f0;transform:scaleX(0.758);">Yellow Green</div>
<div class="t" style="left:1462.4px;top:734.1px;font-size:14.40px;color:#f0f0f0;transform:scaleX(0.758);">Orange Yellow</div>
<div class="t" style="left:1538.9px;top:734.1px;font-size:14.40px;color:#f0f0f0;transform:scaleX(0.758);">Blue</div>
<div class="t" style="left:1574.6px;top:734.1px;font-size:14.40px;color:#f0f0f0;transform:scaleX(0.758);">Green</div>
<div class="t" style="left:1610.6px;top:734.1px;font-size:14.40px;color:#f0f0f0;transform:scaleX(0.758);">Red</div>
<div class="t" style="left:1646.6px;top:734.1px;font-size:14.40px;color:#f0f0f0;transform:scaleX(0.758);">Yellow</div>
<div class="t" style="left:1689.0px;top:734.1px;font-size:14.40px;color:#f0f0f0;transform:scaleX(0.758);">Magenta</div>
<div class="t" style="left:1738.5px;top:734.1px;font-size:14.40px;color:#f0f0f0;transform:scaleX(0.758);">Cyan</div>
<div class="t" style="left:1774.5px;top:734.1px;font-size:14.40px;color:#f0f0f0;transform:scaleX(0.758);">100% Red</div>
<div class="t" style="left:1829.4px;top:734.1px;font-size:14.40px;color:#f0f0f0;transform:scaleX(0.758);">100% Green</div>
<div class="t" style="left:1895.5px;top:734.1px;font-size:14.40px;color:#f0f0f0;transform:scaleX(0.758);">100%</div>
<div class="t" style="left:504.2px;top:760.4px;font-size:14.40px;color:#f4f4f4;transform:scaleX(0.745);">x: CIE31</div>
<div class="t" style="left:585.8px;top:760.4px;font-size:14.40px;color:#f4f4f4;transform:scaleX(0.795);">0.32</div>
<div class="t" style="left:628.3px;top:760.4px;font-size:14.40px;color:#f4f4f4;transform:scaleX(0.795);">0.32</div>
<div class="t" style="left:672.3px;top:760.4px;font-size:14.40px;color:#f4f4f4;transform:scaleX(0.795);">0.33</div>
<div class="t" style="left:715.8px;top:760.4px;font-size:14.40px;color:#f4f4f4;transform:scaleX(0.795);">0.33</div>
<div class="t" style="left:759.6px;top:760.4px;font-size:14.40px;color:#f4f4f4;transform:scaleX(0.795);">0.33</div>
<div class="t" style="left:803.5px;top:760.4px;font-size:14.40px;color:#f4f4f4;transform:scaleX(0.795);">0.28</div>
<div class="t" style="left:839.4px;top:760.4px;font-size:14.40px;color:#f4f4f4;transform:scaleX(0.795);">0.43</div>
<div class="t" style="left:891.4px;top:760.4px;font-size:14.40px;color:#f4f4f4;transform:scaleX(0.795);">0.40</div>
<div class="t" style="left:944.2px;top:760.4px;font-size:14.40px;color:#f4f4f4;transform:scaleX(0.795);">0.26</div>
<div class="t" style="left:991.6px;top:760.4px;font-size:14.40px;color:#f4f4f4;transform:scaleX(0.795);">0.35</div>
<div class="t" style="left:1032.5px;top:760.4px;font-size:14.40px;color:#f4f4f4;transform:scaleX(0.795);">0.28</div>
<div class="t" style="left:1096.1px;top:760.4px;font-size:14.40px;color:#f4f4f4;transform:scaleX(0.795);">0.27</div>
<div class="t" style="left:1165.0px;top:760.4px;font-size:14.40px;color:#f4f4f4;transform:scaleX(0.795);">0.53</div>
<div class="t" style="left:1206.9px;top:760.4px;font-size:14.40px;color:#f4f4f4;transform:scaleX(0.795);">0.22</div>
<div class="t" style="left:1277.3px;top:760.4px;font-size:14.40px;color:#f4f4f4;transform:scaleX(0.795);">0.48</div>
<div class="t" style="left:1354.0px;top:760.4px;font-size:14.40px;color:#f4f4f4;transform:scaleX(0.795);">0.28</div>
<div class="t" style="left:1391.8px;top:760.4px;font-size:14.40px;color:#f4f4f4;transform:scaleX(0.795);">0.39</div>
<div class="t" style="left:1462.4px;top:760.4px;font-size:14.40px;color:#f4f4f4;transform:scaleX(0.795);">0.49</div>
<div class="t" style="left:1538.9px;top:760.4px;font-size:14.40px;color:#f4f4f4;transform:scaleX(0.795);">0.19</div>
<div class="t" style="left:1574.6px;top:760.4px;font-size:14.40px;color:#f4f4f4;transform:scaleX(0.795);">0.31</div>
<div class="t" style="left:1610.6px;top:760.4px;font-size:14.40px;color:#f4f4f4;transform:scaleX(0.795);">0.56</div>
<div class="t" style="left:1646.6px;top:760.4px;font-size:14.40px;color:#f4f4f4;transform:scaleX(0.795);">0.46</div>
<div class="t" style="left:1689.0px;top:760.4px;font-size:14.40px;color:#f4f4f4;transform:scaleX(0.795);">0.40</div>
<div class="t" style="left:1738.5px;top:760.4px;font-size:14.40px;color:#f4f4f4;transform:scaleX(0.795);">0.21</div>
<div class="t" style="left:1774.5px;top:760.4px;font-size:14.40px;color:#f4f4f4;transform:scaleX(0.795);">0.65</div>
<div class="t" style="left:1829.4px;top:760.4px;font-size:14.40px;color:#f4f4f4;transform:scaleX(0.795);">0.30</div>
<div class="t" style="left:1895.5px;top:760.4px;font-size:14.40px;color:#f4f4f4;transform:scaleX(0.795);">0.14</div>
<div class="t" style="left:504.2px;top:785.1px;font-size:14.40px;color:#f4f4f4;transform:scaleX(0.745);">y: CIE31</div>
<div class="t" style="left:585.8px;top:785.1px;font-size:14.40px;color:#f4f4f4;transform:scaleX(0.795);">0.34</div>
<div class="t" style="left:628.3px;top:785.1px;font-size:14.40px;color:#f4f4f4;transform:scaleX(0.795);">0.34</div>
<div class="t" style="left:672.3px;top:785.1px;font-size:14.40px;color:#f4f4f4;transform:scaleX(0.795);">0.34</div>
<div class="t" style="left:715.8px;top:785.1px;font-size:14.40px;color:#f4f4f4;transform:scaleX(0.795);">0.34</div>
<div class="t" style="left:759.6px;top:785.1px;font-size:14.40px;color:#f4f4f4;transform:scaleX(0.795);">0.35</div>
<div class="t" style="left:803.5px;top:785.1px;font-size:14.40px;color:#f4f4f4;transform:scaleX(0.795);">0.28</div>
<div class="t" style="left:839.4px;top:785.1px;font-size:14.40px;color:#f4f4f4;transform:scaleX(0.795);">0.38</div>
<div class="t" style="left:891.4px;top:785.1px;font-size:14.40px;color:#f4f4f4;transform:scaleX(0.795);">0.37</div>
<div class="t" style="left:944.2px;top:785.1px;font-size:14.40px;color:#f4f4f4;transform:scaleX(0.795);">0.29</div>
<div class="t" style="left:991.6px;top:785.1px;font-size:14.40px;color:#f4f4f4;transform:scaleX(0.795);">0.45</div>
<div class="t" style="left:1032.5px;top:785.1px;font-size:14.40px;color:#f4f4f4;transform:scaleX(0.795);">0.27</div>
<div class="t" style="left:1096.1px;top:785.1px;font-size:14.40px;color:#f4f4f4;transform:scaleX(0.795);">0.38</div>
<div class="t" style="left:1165.0px;top:785.1px;font-size:14.40px;color:#f4f4f4;transform:scaleX(0.795);">0.41</div>
<div class="t" style="left:1206.9px;top:785.1px;font-size:14.40px;color:#f4f4f4;transform:scaleX(0.795);">0.21</div>
<div class="t" style="left:1277.3px;top:785.1px;font-size:14.40px;color:#f4f4f4;transform:scaleX(0.795);">0.32</div>
<div class="t" style="left:1354.0px;top:785.1px;font-size:14.40px;color:#f4f4f4;transform:scaleX(0.795);">0.22</div>
<div class="t" style="left:1391.8px;top:785.1px;font-size:14.40px;color:#f4f4f4;transform:scaleX(0.795);">0.50</div>
<div class="t" style="left:1462.4px;top:785.1px;font-size:14.40px;color:#f4f4f4;transform:scaleX(0.795);">0.45</div>
<div class="t" style="left:1538.9px;top:785.1px;font-size:14.40px;color:#f4f4f4;transform:scaleX(0.795);">0.14</div>
<div class="t" style="left:1574.6px;top:785.1px;font-size:14.40px;color:#f4f4f4;transform:scaleX(0.795);">0.51</div>
<div class="t" style="left:1610.6px;top:785.1px;font-size:14.40px;color:#f4f4f4;transform:scaleX(0.795);">0.33</div>
<div class="t" style="left:1646.6px;top:785.1px;font-size:14.40px;color:#f4f4f4;transform:scaleX(0.795);">0.48</div>
<div class="t" style="left:1689.0px;top:785.1px;font-size:14.40px;color:#f4f4f4;transform:scaleX(0.795);">0.26</div>
<div class="t" style="left:1738.5px;top:785.1px;font-size:14.40px;color:#f4f4f4;transform:scaleX(0.795);">0.29</div>
<div class="t" style="left:1774.5px;top:785.1px;font-size:14.40px;color:#f4f4f4;transform:scaleX(0.795);">0.33</div>
<div class="t" style="left:1829.4px;top:785.1px;font-size:14.40px;color:#f4f4f4;transform:scaleX(0.795);">0.61</div>
<div class="t" style="left:1895.5px;top:785.1px;font-size:14.40px;color:#f4f4f4;transform:scaleX(0.795);">0.06</div>
<div class="t" style="left:504.2px;top:809.9px;font-size:14.40px;color:#f4f4f4;transform:scaleX(0.772);">Y</div>
<div class="t" style="left:585.8px;top:809.9px;font-size:14.40px;color:#f4f4f4;transform:scaleX(0.795);">303.42</div>
<div class="t" style="left:628.3px;top:809.9px;font-size:14.40px;color:#f4f4f4;transform:scaleX(0.795);">247.88</div>
<div class="t" style="left:672.3px;top:809.9px;font-size:14.40px;color:#f4f4f4;transform:scaleX(0.795);">202.54</div>
<div class="t" style="left:715.8px;top:809.9px;font-size:14.40px;color:#f4f4f4;transform:scaleX(0.795);">156.89</div>
<div class="a" style="left:756.6px;top:804.3px;width:43px;height:23.3px;background:#f4f4f4;box-shadow:inset 0 0 0 1px #999"></div>
<div class="t" style="left:759.6px;top:809.9px;font-size:14.40px;color:#111;transform:scaleX(0.795);">110.45</div>
<div class="t" style="left:803.5px;top:809.9px;font-size:14.40px;color:#f4f4f4;transform:scaleX(0.795);">0.29</div>
<div class="t" style="left:839.4px;top:809.9px;font-size:14.40px;color:#f4f4f4;transform:scaleX(0.795);">32.98</div>
<div class="t" style="left:891.4px;top:809.9px;font-size:14.40px;color:#f4f4f4;transform:scaleX(0.795);">114.27</div>
<div class="t" style="left:944.2px;top:809.9px;font-size:14.40px;color:#f4f4f4;transform:scaleX(0.795);">60.59</div>
<div class="t" style="left:991.6px;top:809.9px;font-size:14.40px;color:#f4f4f4;transform:scaleX(0.795);">42.80</div>
<div class="t" style="left:1032.5px;top:809.9px;font-size:14.40px;color:#f4f4f4;transform:scaleX(0.795);">76.00</div>
<div class="t" style="left:1096.1px;top:809.9px;font-size:14.40px;color:#f4f4f4;transform:scaleX(0.795);">131.73</div>
<div class="t" style="left:1165.0px;top:809.9px;font-size:14.40px;color:#f4f4f4;transform:scaleX(0.795);">95.18</div>
<div class="t" style="left:1206.9px;top:809.9px;font-size:14.40px;color:#f4f4f4;transform:scaleX(0.795);">36.67</div>
<div class="t" style="left:1277.3px;top:809.9px;font-size:14.40px;color:#f4f4f4;transform:scaleX(0.795);">62.16</div>
<div class="t" style="left:1354.0px;top:809.9px;font-size:14.40px;color:#f4f4f4;transform:scaleX(0.795);">18.95</div>
<div class="t" style="left:1391.8px;top:809.9px;font-size:14.40px;color:#f4f4f4;transform:scaleX(0.795);">136.95</div>
<div class="t" style="left:1462.4px;top:809.9px;font-size:14.40px;color:#f4f4f4;transform:scaleX(0.795);">138.76</div>
<div class="t" style="left:1538.9px;top:809.9px;font-size:14.40px;color:#f4f4f4;transform:scaleX(0.795);">18.02</div>
<div class="t" style="left:1574.6px;top:809.9px;font-size:14.40px;color:#f4f4f4;transform:scaleX(0.795);">73.28</div>
<div class="t" style="left:1610.6px;top:809.9px;font-size:14.40px;color:#f4f4f4;transform:scaleX(0.795);">38.63</div>
<div class="t" style="left:1646.6px;top:809.9px;font-size:14.40px;color:#f4f4f4;transform:scaleX(0.795);">188.82</div>
<div class="t" style="left:1689.0px;top:809.9px;font-size:14.40px;color:#f4f4f4;transform:scaleX(0.795);">61.93</div>
<div class="t" style="left:1738.5px;top:809.9px;font-size:14.40px;color:#f4f4f4;transform:scaleX(0.795);">61.23</div>
<div class="t" style="left:1774.5px;top:809.9px;font-size:14.40px;color:#f4f4f4;transform:scaleX(0.795);">69.58</div>
<div class="t" style="left:1829.4px;top:809.9px;font-size:14.40px;color:#f4f4f4;transform:scaleX(0.795);">215.28</div>
<div class="t" style="left:1895.5px;top:809.9px;font-size:14.40px;color:#f4f4f4;transform:scaleX(0.795);">19.3</div>
<div class="t" style="left:504.2px;top:834.6px;font-size:14.40px;color:#f4f4f4;transform:scaleX(0.772);">Target x:CIE31</div>
<div class="t" style="left:585.8px;top:834.6px;font-size:14.40px;color:#f4f4f4;transform:scaleX(0.795);">0.31</div>
<div class="t" style="left:628.3px;top:834.6px;font-size:14.40px;color:#f4f4f4;transform:scaleX(0.795);">0.31</div>
<div class="t" style="left:672.3px;top:834.6px;font-size:14.40px;color:#f4f4f4;transform:scaleX(0.795);">0.31</div>
<div class="t" style="left:715.8px;top:834.6px;font-size:14.40px;color:#f4f4f4;transform:scaleX(0.795);">0.31</div>
<div class="t" style="left:759.6px;top:834.6px;font-size:14.40px;color:#f4f4f4;transform:scaleX(0.795);">0.31</div>
<div class="t" style="left:803.5px;top:834.6px;font-size:14.40px;color:#f4f4f4;transform:scaleX(0.795);">0.31</div>
<div class="t" style="left:839.4px;top:834.6px;font-size:14.40px;color:#f4f4f4;transform:scaleX(0.795);">0.40</div>
<div class="t" style="left:891.4px;top:834.6px;font-size:14.40px;color:#f4f4f4;transform:scaleX(0.795);">0.38</div>
<div class="t" style="left:944.2px;top:834.6px;font-size:14.40px;color:#f4f4f4;transform:scaleX(0.795);">0.25</div>
<div class="t" style="left:991.6px;top:834.6px;font-size:14.40px;color:#f4f4f4;transform:scaleX(0.795);">0.34</div>
<div class="t" style="left:1032.5px;top:834.6px;font-size:14.40px;color:#f4f4f4;transform:scaleX(0.795);">0.27</div>
<div class="t" style="left:1096.1px;top:834.6px;font-size:14.40px;color:#f4f4f4;transform:scaleX(0.795);">0.26</div>
<div class="t" style="left:1165.0px;top:834.6px;font-size:14.40px;color:#f4f4f4;transform:scaleX(0.795);">0.51</div>
<div class="t" style="left:1206.9px;top:834.6px;font-size:14.40px;color:#f4f4f4;transform:scaleX(0.795);">0.22</div>
<div class="t" style="left:1277.3px;top:834.6px;font-size:14.40px;color:#f4f4f4;transform:scaleX(0.795);">0.46</div>
<div class="t" style="left:1354.0px;top:834.6px;font-size:14.40px;color:#f4f4f4;transform:scaleX(0.795);">0.29</div>
<div class="t" style="left:1391.8px;top:834.6px;font-size:14.40px;color:#f4f4f4;transform:scaleX(0.795);">0.38</div>
<div class="t" style="left:1462.4px;top:834.6px;font-size:14.40px;color:#f4f4f4;transform:scaleX(0.795);">0.47</div>
<div class="t" style="left:1538.9px;top:834.6px;font-size:14.40px;color:#f4f4f4;transform:scaleX(0.795);">0.19</div>
<div class="t" style="left:1574.6px;top:834.6px;font-size:14.40px;color:#f4f4f4;transform:scaleX(0.795);">0.31</div>
<div class="t" style="left:1610.6px;top:834.6px;font-size:14.40px;color:#f4f4f4;transform:scaleX(0.795);">0.54</div>
<div class="t" style="left:1646.6px;top:834.6px;font-size:14.40px;color:#f4f4f4;transform:scaleX(0.795);">0.45</div>
<div class="t" style="left:1689.0px;top:834.6px;font-size:14.40px;color:#f4f4f4;transform:scaleX(0.795);">0.37</div>
<div class="t" style="left:1738.5px;top:834.6px;font-size:14.40px;color:#f4f4f4;transform:scaleX(0.795);">0.21</div>
<div class="t" style="left:1774.5px;top:834.6px;font-size:14.40px;color:#f4f4f4;transform:scaleX(0.795);">0.64</div>
<div class="t" style="left:1829.4px;top:834.6px;font-size:14.40px;color:#f4f4f4;transform:scaleX(0.795);">0.30</div>
<div class="t" style="left:1895.5px;top:834.6px;font-size:14.40px;color:#f4f4f4;transform:scaleX(0.795);">0.15</div>
<div class="t" style="left:504.2px;top:859.3px;font-size:14.40px;color:#f4f4f4;transform:scaleX(0.772);">Target y:CIE31</div>
<div class="t" style="left:585.8px;top:859.3px;font-size:14.40px;color:#f4f4f4;transform:scaleX(0.795);">0.33</div>
<div class="t" style="left:628.3px;top:859.3px;font-size:14.40px;color:#f4f4f4;transform:scaleX(0.795);">0.33</div>
<div class="t" style="left:672.3px;top:859.3px;font-size:14.40px;color:#f4f4f4;transform:scaleX(0.795);">0.33</div>
<div class="t" style="left:715.8px;top:859.3px;font-size:14.40px;color:#f4f4f4;transform:scaleX(0.795);">0.33</div>
<div class="t" style="left:759.6px;top:859.3px;font-size:14.40px;color:#f4f4f4;transform:scaleX(0.795);">0.33</div>
<div class="t" style="left:803.5px;top:859.3px;font-size:14.40px;color:#f4f4f4;transform:scaleX(0.795);">0.33</div>
<div class="t" style="left:839.4px;top:859.3px;font-size:14.40px;color:#f4f4f4;transform:scaleX(0.795);">0.36</div>
<div class="t" style="left:891.4px;top:859.3px;font-size:14.40px;color:#f4f4f4;transform:scaleX(0.795);">0.36</div>
<div class="t" style="left:944.2px;top:859.3px;font-size:14.40px;color:#f4f4f4;transform:scaleX(0.795);">0.27</div>
<div class="t" style="left:991.6px;top:859.3px;font-size:14.40px;color:#f4f4f4;transform:scaleX(0.795);">0.43</div>
<div class="t" style="left:1032.5px;top:859.3px;font-size:14.40px;color:#f4f4f4;transform:scaleX(0.795);">0.25</div>
<div class="t" style="left:1096.1px;top:859.3px;font-size:14.40px;color:#f4f4f4;transform:scaleX(0.795);">0.36</div>
<div class="t" style="left:1165.0px;top:859.3px;font-size:14.40px;color:#f4f4f4;transform:scaleX(0.795);">0.41</div>
<div class="t" style="left:1206.9px;top:859.3px;font-size:14.40px;color:#f4f4f4;transform:scaleX(0.795);">0.19</div>
<div class="t" style="left:1277.3px;top:859.3px;font-size:14.40px;color:#f4f4f4;transform:scaleX(0.795);">0.31</div>
<div class="t" style="left:1354.0px;top:859.3px;font-size:14.40px;color:#f4f4f4;transform:scaleX(0.795);">0.22</div>
<div class="t" style="left:1391.8px;top:859.3px;font-size:14.40px;color:#f4f4f4;transform:scaleX(0.795);">0.49</div>
<div class="t" style="left:1462.4px;top:859.3px;font-size:14.40px;color:#f4f4f4;transform:scaleX(0.795);">0.44</div>
<div class="t" style="left:1538.9px;top:859.3px;font-size:14.40px;color:#f4f4f4;transform:scaleX(0.795);">0.14</div>
<div class="t" style="left:1574.6px;top:859.3px;font-size:14.40px;color:#f4f4f4;transform:scaleX(0.795);">0.49</div>
<div class="t" style="left:1610.6px;top:859.3px;font-size:14.40px;color:#f4f4f4;transform:scaleX(0.795);">0.32</div>
<div class="t" style="left:1646.6px;top:859.3px;font-size:14.40px;color:#f4f4f4;transform:scaleX(0.795);">0.47</div>
<div class="t" style="left:1689.0px;top:859.3px;font-size:14.40px;color:#f4f4f4;transform:scaleX(0.795);">0.25</div>
<div class="t" style="left:1738.5px;top:859.3px;font-size:14.40px;color:#f4f4f4;transform:scaleX(0.795);">0.27</div>
<div class="t" style="left:1774.5px;top:859.3px;font-size:14.40px;color:#f4f4f4;transform:scaleX(0.795);">0.33</div>
<div class="t" style="left:1829.4px;top:859.3px;font-size:14.40px;color:#f4f4f4;transform:scaleX(0.795);">0.60</div>
<div class="t" style="left:1895.5px;top:859.3px;font-size:14.40px;color:#f4f4f4;transform:scaleX(0.795);">0.06</div>
<div class="t" style="left:504.2px;top:884.1px;font-size:14.40px;color:#f4f4f4;transform:scaleX(0.772);">Target Y</div>
<div class="t" style="left:585.8px;top:884.1px;font-size:14.40px;color:#f4f4f4;transform:scaleX(0.795);">303.42</div>
<div class="t" style="left:628.3px;top:884.1px;font-size:14.40px;color:#f4f4f4;transform:scaleX(0.795);">240.09</div>
<div class="t" style="left:672.3px;top:884.1px;font-size:14.40px;color:#f4f4f4;transform:scaleX(0.795);">193.46</div>
<div class="t" style="left:715.8px;top:884.1px;font-size:14.40px;color:#f4f4f4;transform:scaleX(0.795);">148.98</div>
<div class="t" style="left:759.6px;top:884.1px;font-size:14.40px;color:#f4f4f4;transform:scaleX(0.795);">103.74</div>
<div class="t" style="left:803.5px;top:884.1px;font-size:14.40px;color:#f4f4f4;transform:scaleX(0.795);">0.00</div>
<div class="t" style="left:839.4px;top:884.1px;font-size:14.40px;color:#f4f4f4;transform:scaleX(0.795);">30.56</div>
<div class="t" style="left:891.4px;top:884.1px;font-size:14.40px;color:#f4f4f4;transform:scaleX(0.795);">105.88</div>
<div class="t" style="left:944.2px;top:884.1px;font-size:14.40px;color:#f4f4f4;transform:scaleX(0.795);">56.73</div>
<div class="t" style="left:991.6px;top:884.1px;font-size:14.40px;color:#f4f4f4;transform:scaleX(0.795);">39.54</div>
<div class="t" style="left:1032.5px;top:884.1px;font-size:14.40px;color:#f4f4f4;transform:scaleX(0.795);">70.75</div>
<div class="t" style="left:1096.1px;top:884.1px;font-size:14.40px;color:#f4f4f4;transform:scaleX(0.795);">127.05</div>
<div class="t" style="left:1165.0px;top:884.1px;font-size:14.40px;color:#f4f4f4;transform:scaleX(0.795);">86.01</div>
<div class="t" style="left:1206.9px;top:884.1px;font-size:14.40px;color:#f4f4f4;transform:scaleX(0.795);">35.66</div>
<div class="t" style="left:1277.3px;top:884.1px;font-size:14.40px;color:#f4f4f4;transform:scaleX(0.795);">56.67</div>
<div class="t" style="left:1354.0px;top:884.1px;font-size:14.40px;color:#f4f4f4;transform:scaleX(0.795);">20.25</div>
<div class="t" style="left:1391.8px;top:884.1px;font-size:14.40px;color:#f4f4f4;transform:scaleX(0.795);">129.73</div>
<div class="t" style="left:1462.4px;top:884.1px;font-size:14.40px;color:#f4f4f4;transform:scaleX(0.795);">128.99</div>
<div class="t" style="left:1538.9px;top:884.1px;font-size:14.40px;color:#f4f4f4;transform:scaleX(0.795);">18.94</div>
<div class="t" style="left:1574.6px;top:884.1px;font-size:14.40px;color:#f4f4f4;transform:scaleX(0.795);">69.71</div>
<div class="t" style="left:1610.6px;top:884.1px;font-size:14.40px;color:#f4f4f4;transform:scaleX(0.795);">35.38</div>
<div class="t" style="left:1646.6px;top:884.1px;font-size:14.40px;color:#f4f4f4;transform:scaleX(0.795);">178.91</div>
<div class="t" style="left:1689.0px;top:884.1px;font-size:14.40px;color:#f4f4f4;transform:scaleX(0.795);">57.12</div>
<div class="t" style="left:1738.5px;top:884.1px;font-size:14.40px;color:#f4f4f4;transform:scaleX(0.795);">58.92</div>
<div class="t" style="left:1774.5px;top:884.1px;font-size:14.40px;color:#f4f4f4;transform:scaleX(0.795);">64.52</div>
<div class="t" style="left:1829.4px;top:884.1px;font-size:14.40px;color:#f4f4f4;transform:scaleX(0.795);">216.99</div>
<div class="t" style="left:1895.5px;top:884.1px;font-size:14.40px;color:#f4f4f4;transform:scaleX(0.795);">21.9</div>
<div class="t" style="left:504.2px;top:908.8px;font-size:14.40px;color:#f4f4f4;transform:scaleX(0.772);">ΔE 2000</div>
<div class="t" style="left:585.8px;top:908.8px;font-size:14.40px;color:#f4f4f4;transform:scaleX(0.795);">4.13</div>
<div class="t" style="left:628.3px;top:908.8px;font-size:14.40px;color:#f4f4f4;transform:scaleX(0.795);">5.96</div>
<div class="t" style="left:672.3px;top:908.8px;font-size:14.40px;color:#f4f4f4;transform:scaleX(0.795);">6.04</div>
<div class="t" style="left:715.8px;top:908.8px;font-size:14.40px;color:#f4f4f4;transform:scaleX(0.795);">6.04</div>
<div class="t" style="left:759.6px;top:908.8px;font-size:14.40px;color:#f4f4f4;transform:scaleX(0.795);">5.92</div>
<div class="t" style="left:803.5px;top:908.8px;font-size:14.40px;color:#f4f4f4;transform:scaleX(0.795);">0.83</div>
<div class="t" style="left:839.4px;top:908.8px;font-size:14.40px;color:#f4f4f4;transform:scaleX(0.795);">3.83</div>
<div class="t" style="left:891.4px;top:908.8px;font-size:14.40px;color:#f4f4f4;transform:scaleX(0.795);">4.13</div>
<div class="t" style="left:944.2px;top:908.8px;font-size:14.40px;color:#f4f4f4;transform:scaleX(0.795);">4.89</div>
<div class="t" style="left:991.6px;top:908.8px;font-size:14.40px;color:#f4f4f4;transform:scaleX(0.795);">3.46</div>
<div class="t" style="left:1032.5px;top:908.8px;font-size:14.40px;color:#f4f4f4;transform:scaleX(0.795);">4.01</div>
<div class="t" style="left:1096.1px;top:908.8px;font-size:14.40px;color:#f4f4f4;transform:scaleX(0.795);">3.71</div>
<div class="t" style="left:1165.0px;top:908.8px;font-size:14.40px;color:#f4f4f4;transform:scaleX(0.795);">3.65</div>
<div class="t" style="left:1206.9px;top:908.8px;font-size:14.40px;color:#f4f4f4;transform:scaleX(0.795);">1.69</div>
<div class="t" style="left:1277.3px;top:908.8px;font-size:14.40px;color:#f4f4f4;transform:scaleX(0.795);">4.04</div>
<div class="t" style="left:1354.0px;top:908.8px;font-size:14.40px;color:#f4f4f4;transform:scaleX(0.795);">1.77</div>
<div class="t" style="left:1391.8px;top:908.8px;font-size:14.40px;color:#f4f4f4;transform:scaleX(0.795);">2.99</div>
<div class="t" style="left:1462.4px;top:908.8px;font-size:14.40px;color:#f4f4f4;transform:scaleX(0.795);">2.77</div>
<div class="t" style="left:1538.9px;top:908.8px;font-size:14.40px;color:#f4f4f4;transform:scaleX(0.795);">1.27</div>
<div class="t" style="left:1574.6px;top:908.8px;font-size:14.40px;color:#f4f4f4;transform:scaleX(0.795);">2.44</div>
<div class="t" style="left:1610.6px;top:908.8px;font-size:14.40px;color:#f4f4f4;transform:scaleX(0.795);">3.75</div>
<div class="t" style="left:1646.6px;top:908.8px;font-size:14.40px;color:#f4f4f4;transform:scaleX(0.795);">2.56</div>
<div class="t" style="left:1689.0px;top:908.8px;font-size:14.40px;color:#f4f4f4;transform:scaleX(0.795);">3.66</div>
<div class="t" style="left:1738.5px;top:908.8px;font-size:14.40px;color:#f4f4f4;transform:scaleX(0.795);">4.97</div>
<div class="t" style="left:1774.5px;top:908.8px;font-size:14.40px;color:#f4f4f4;transform:scaleX(0.795);">3.08</div>
<div class="t" style="left:1829.4px;top:908.8px;font-size:14.40px;color:#f4f4f4;transform:scaleX(0.795);">0.84</div>
<div class="t" style="left:1895.5px;top:908.8px;font-size:14.40px;color:#f4f4f4;transform:scaleX(0.795);">1.61</div>
<div class="t" style="left:504.2px;top:933.5px;font-size:14.40px;color:#f4f4f4;transform:scaleX(0.772);">dEITP</div>
<div class="t" style="left:585.8px;top:933.5px;font-size:14.40px;color:#f4f4f4;transform:scaleX(0.795);">4.82</div>
<div class="t" style="left:628.3px;top:933.5px;font-size:14.40px;color:#f4f4f4;transform:scaleX(0.795);">7.60</div>
<div class="t" style="left:672.3px;top:933.5px;font-size:14.40px;color:#f4f4f4;transform:scaleX(0.795);">8.58</div>
<div class="t" style="left:715.8px;top:933.5px;font-size:14.40px;color:#f4f4f4;transform:scaleX(0.795);">9.11</div>
<div class="t" style="left:759.6px;top:933.5px;font-size:14.40px;color:#f4f4f4;transform:scaleX(0.795);">9.69</div>
<div class="t" style="left:803.5px;top:933.5px;font-size:14.40px;color:#f4f4f4;transform:scaleX(0.795);">69.83</div>
<div class="t" style="left:839.4px;top:933.5px;font-size:14.40px;color:#f4f4f4;transform:scaleX(0.795);">14.07</div>
<div class="t" style="left:891.4px;top:933.5px;font-size:14.40px;color:#f4f4f4;transform:scaleX(0.795);">10.73</div>
<div class="t" style="left:944.2px;top:933.5px;font-size:14.40px;color:#f4f4f4;transform:scaleX(0.795);">8.71</div>
<div class="t" style="left:991.6px;top:933.5px;font-size:14.40px;color:#f4f4f4;transform:scaleX(0.795);">11.40</div>
<div class="t" style="left:1032.5px;top:933.5px;font-size:14.40px;color:#f4f4f4;transform:scaleX(0.795);">10.09</div>
<div class="t" style="left:1096.1px;top:933.5px;font-size:14.40px;color:#f4f4f4;transform:scaleX(0.795);">6.87</div>
<div class="t" style="left:1165.0px;top:933.5px;font-size:14.40px;color:#f4f4f4;transform:scaleX(0.795);">13.98</div>
<div class="t" style="left:1206.9px;top:933.5px;font-size:14.40px;color:#f4f4f4;transform:scaleX(0.795);">5.62</div>
<div class="t" style="left:1277.3px;top:933.5px;font-size:14.40px;color:#f4f4f4;transform:scaleX(0.795);">13.35</div>
<div class="t" style="left:1354.0px;top:933.5px;font-size:14.40px;color:#f4f4f4;transform:scaleX(0.795);">7.38</div>
<div class="t" style="left:1391.8px;top:933.5px;font-size:14.40px;color:#f4f4f4;transform:scaleX(0.795);">10.32</div>
<div class="t" style="left:1462.4px;top:933.5px;font-size:14.40px;color:#f4f4f4;transform:scaleX(0.795);">12.10</div>
<div class="t" style="left:1538.9px;top:933.5px;font-size:14.40px;color:#f4f4f4;transform:scaleX(0.795);">4.75</div>
<div class="t" style="left:1574.6px;top:933.5px;font-size:14.40px;color:#f4f4f4;transform:scaleX(0.795);">9.21</div>
<div class="t" style="left:1610.6px;top:933.5px;font-size:14.40px;color:#f4f4f4;transform:scaleX(0.795);">17.10</div>
<div class="t" style="left:1646.6px;top:933.5px;font-size:14.40px;color:#f4f4f4;transform:scaleX(0.795);">10.77</div>
<div class="t" style="left:1689.0px;top:933.5px;font-size:14.40px;color:#f4f4f4;transform:scaleX(0.795);">12.97</div>
<div class="t" style="left:1738.5px;top:933.5px;font-size:14.40px;color:#f4f4f4;transform:scaleX(0.795);">7.24</div>
<div class="t" style="left:1774.5px;top:933.5px;font-size:14.40px;color:#f4f4f4;transform:scaleX(0.795);">10.78</div>
<div class="t" style="left:1829.4px;top:933.5px;font-size:14.40px;color:#f4f4f4;transform:scaleX(0.795);">5.60</div>
<div class="t" style="left:1895.5px;top:933.5px;font-size:14.40px;color:#f4f4f4;transform:scaleX(0.795);">15.5</div>
<div class="a" style="left:1917.5px;top:720px;width:3px;height:260px;background:#2c2c2c"></div>
<div class="a" style="left:501px;top:953px;width:1414px;height:14px;background:#5a5a5a"></div>
<div class="a" style="left:515px;top:955px;width:839px;height:10px;border-radius:5px;background:#404040"></div>
<div class="a" style="left:502px;top:954px;width:11px;height:12px;background:linear-gradient(#9a9a9a,#7a7a7a);border-radius:2px"></div>
<svg class="a" style="left:505px;top:956px" width="6" height="8"><path d="M5 0.5V7.5L0.5 4Z" fill="#333"/></svg>
<div class="a" style="left:1903px;top:954px;width:11px;height:12px;background:linear-gradient(#9a9a9a,#7a7a7a);border-radius:2px"></div>
<svg class="a" style="left:1906px;top:956px" width="6" height="8"><path d="M0.5 0.5V7.5L5 4Z" fill="#333"/></svg>
<div class="a" style="left:151.2px;top:1012px;width:37px;height:35px;border-radius:3px 3px 0 0;background:linear-gradient(#9c9c9c,#7e7e7e 45%,#646464);box-shadow:inset 0 1px 0 #aaa"></div>
<div class="a" style="left:154.7px;top:1015.5px;width:30px;height:18px;border-radius:3px;background:#fff;box-shadow:0 0 0 1px rgba(0,0,0,.25)"></div>
<div class="t" style="left:159.8px;top:1037.2px;font-size:9.00px;color:#1e1e1e;transform:scaleX(0.860);">White</div>
<div class="a" style="left:149.7px;top:1013px;width:1.5px;height:36px;background:#2a2a2a"></div>
<div class="a" style="left:190.2px;top:1012px;width:37px;height:35px;border-radius:3px 3px 0 0;background:linear-gradient(#9c9c9c,#7e7e7e 45%,#646464);box-shadow:inset 0 1px 0 #aaa"></div>
<div class="a" style="left:193.8px;top:1015.5px;width:30px;height:18px;border-radius:3px;background:#e6e6e6;box-shadow:0 0 0 1px rgba(0,0,0,.25)"></div>
<div class="t" style="left:195.0px;top:1037.2px;font-size:9.00px;color:#1e1e1e;transform:scaleX(0.860);">Gray 80</div>
<div class="a" style="left:188.8px;top:1013px;width:1.5px;height:36px;background:#2a2a2a"></div>
<div class="a" style="left:229.3px;top:1012px;width:37px;height:35px;border-radius:3px 3px 0 0;background:linear-gradient(#9c9c9c,#7e7e7e 45%,#646464);box-shadow:inset 0 1px 0 #aaa"></div>
<div class="a" style="left:232.8px;top:1015.5px;width:30px;height:18px;border-radius:3px;background:#d0d0d0;box-shadow:0 0 0 1px rgba(0,0,0,.25)"></div>
<div class="t" style="left:234.0px;top:1037.2px;font-size:9.00px;color:#1e1e1e;transform:scaleX(0.860);">Gray 65</div>
<div class="a" style="left:227.8px;top:1013px;width:1.5px;height:36px;background:#2a2a2a"></div>
<div class="a" style="left:268.3px;top:1012px;width:37px;height:35px;border-radius:3px 3px 0 0;background:linear-gradient(#9c9c9c,#7e7e7e 45%,#646464);box-shadow:inset 0 1px 0 #aaa"></div>
<div class="a" style="left:271.8px;top:1015.5px;width:30px;height:18px;border-radius:3px;background:#b8b8b8;box-shadow:0 0 0 1px rgba(0,0,0,.25)"></div>
<div class="t" style="left:273.1px;top:1037.2px;font-size:9.00px;color:#1e1e1e;transform:scaleX(0.860);">Gray 50</div>
<div class="a" style="left:266.8px;top:1013px;width:1.5px;height:36px;background:#2a2a2a"></div>
<div class="a" style="left:307.4px;top:1012px;width:37px;height:35px;border-radius:3px 3px 0 0;background:linear-gradient(#9c9c9c,#7e7e7e 45%,#646464);box-shadow:inset 0 1px 0 #aaa"></div>
<div class="a" style="left:310.9px;top:1015.5px;width:30px;height:18px;border-radius:3px;background:#a0a0a0;box-shadow:0 0 0 1px rgba(0,0,0,.25)"></div>
<div class="t" style="left:312.1px;top:1037.2px;font-size:9.00px;color:#1e1e1e;transform:scaleX(0.860);">Gray 35</div>
<div class="a" style="left:305.9px;top:1013px;width:1.5px;height:36px;background:#2a2a2a"></div>
<div class="a" style="left:346.4px;top:1012px;width:37px;height:35px;border-radius:3px 3px 0 0;background:linear-gradient(#9c9c9c,#7e7e7e 45%,#646464);box-shadow:inset 0 1px 0 #aaa"></div>
<div class="a" style="left:349.9px;top:1015.5px;width:30px;height:18px;border-radius:3px;background:#000;box-shadow:0 0 0 1px rgba(0,0,0,.25)"></div>
<div class="t" style="left:355.5px;top:1037.2px;font-size:9.00px;color:#1e1e1e;transform:scaleX(0.860);">Black</div>
<div class="a" style="left:344.9px;top:1013px;width:1.5px;height:36px;background:#2a2a2a"></div>
<div class="a" style="left:385.5px;top:1012px;width:37px;height:35px;border-radius:3px 3px 0 0;background:linear-gradient(#9c9c9c,#7e7e7e 45%,#646464);box-shadow:inset 0 1px 0 #aaa"></div>
<div class="a" style="left:389.0px;top:1015.5px;width:30px;height:18px;border-radius:3px;background:#735446;box-shadow:0 0 0 1px rgba(0,0,0,.25)"></div>
<div class="t" style="left:387.2px;top:1037.2px;font-size:9.00px;color:#1e1e1e;transform:scaleX(0.860);">Dark Skin</div>
<div class="a" style="left:384.0px;top:1013px;width:1.5px;height:36px;background:#2a2a2a"></div>
<div class="a" style="left:424.5px;top:1012px;width:37px;height:35px;border-radius:3px 3px 0 0;background:linear-gradient(#9c9c9c,#7e7e7e 45%,#646464);box-shadow:inset 0 1px 0 #aaa"></div>
<div class="a" style="left:428.0px;top:1015.5px;width:30px;height:18px;border-radius:3px;background:#c49583;box-shadow:0 0 0 1px rgba(0,0,0,.25)"></div>
<div class="t" style="left:426.1px;top:1037.2px;font-size:9.00px;color:#1e1e1e;transform:scaleX(0.860);">Light Skin</div>
<div class="a" style="left:423.0px;top:1013px;width:1.5px;height:36px;background:#2a2a2a"></div>
<div class="a" style="left:463.6px;top:1012px;width:37px;height:35px;border-radius:3px 3px 0 0;background:linear-gradient(#9c9c9c,#7e7e7e 45%,#646464);box-shadow:inset 0 1px 0 #aaa"></div>
<div class="a" style="left:467.1px;top:1015.5px;width:30px;height:18px;border-radius:3px;background:#5f7fa6;box-shadow:0 0 0 1px rgba(0,0,0,.25)"></div>
<div class="t" style="left:466.8px;top:1037.2px;font-size:9.00px;color:#1e1e1e;transform:scaleX(0.860);">Blue Sky</div>
<div class="a" style="left:462.1px;top:1013px;width:1.5px;height:36px;background:#2a2a2a"></div>
<div class="a" style="left:502.6px;top:1012px;width:37px;height:35px;border-radius:3px 3px 0 0;background:linear-gradient(#9c9c9c,#7e7e7e 45%,#646464);box-shadow:inset 0 1px 0 #aaa"></div>
<div class="a" style="left:506.1px;top:1015.5px;width:30px;height:18px;border-radius:3px;background:#5a6e42;box-shadow:0 0 0 1px rgba(0,0,0,.25)"></div>
<div class="t" style="left:508.5px;top:1037.2px;font-size:9.00px;color:#1e1e1e;transform:scaleX(0.860);">Foliage</div>
<div class="a" style="left:501.1px;top:1013px;width:1.5px;height:36px;background:#2a2a2a"></div>
<div class="a" style="left:541.7px;top:1012px;width:37px;height:35px;border-radius:3px 3px 0 0;background:linear-gradient(#9c9c9c,#7e7e7e 45%,#646464);box-shadow:inset 0 1px 0 #aaa"></div>
<div class="a" style="left:545.2px;top:1015.5px;width:30px;height:10px;border-radius:3px;background:#8482b4;box-shadow:0 0 0 1px rgba(0,0,0,.25)"></div>
<div class="t" style="left:552.9px;top:1029.2px;font-size:8.60px;color:#222;transform:scaleX(0.850);">Blue</div>
<div class="t" style="left:549.2px;top:1037.5px;font-size:8.60px;color:#222;transform:scaleX(0.850);">Flower</div>
<div class="a" style="left:540.2px;top:1013px;width:1.5px;height:36px;background:#2a2a2a"></div>
<div class="a" style="left:580.8px;top:1012px;width:37px;height:35px;border-radius:3px 3px 0 0;background:linear-gradient(#9c9c9c,#7e7e7e 45%,#646464);box-shadow:inset 0 1px 0 #aaa"></div>
<div class="a" style="left:584.2px;top:1015.5px;width:30px;height:10px;border-radius:3px;background:#62c3ad;box-shadow:0 0 0 1px rgba(0,0,0,.25)"></div>
<div class="t" style="left:589.3px;top:1029.2px;font-size:8.60px;color:#222;transform:scaleX(0.850);">Bluish</div>
<div class="t" style="left:589.1px;top:1037.5px;font-size:8.60px;color:#222;transform:scaleX(0.850);">Green</div>
<div class="a" style="left:579.2px;top:1013px;width:1.5px;height:36px;background:#2a2a2a"></div>
<div class="a" style="left:619.8px;top:1012px;width:37px;height:35px;border-radius:3px 3px 0 0;background:linear-gradient(#9c9c9c,#7e7e7e 45%,#646464);box-shadow:inset 0 1px 0 #aaa"></div>
<div class="a" style="left:623.3px;top:1015.5px;width:30px;height:18px;border-radius:3px;background:#e07828;box-shadow:0 0 0 1px rgba(0,0,0,.25)"></div>
<div class="t" style="left:625.4px;top:1037.2px;font-size:9.00px;color:#1e1e1e;transform:scaleX(0.860);">Orange</div>
<div class="a" style="left:618.3px;top:1013px;width:1.5px;height:36px;background:#2a2a2a"></div>
<div class="a" style="left:658.8px;top:1012px;width:37px;height:35px;border-radius:3px 3px 0 0;background:linear-gradient(#9c9c9c,#7e7e7e 45%,#646464);box-shadow:inset 0 1px 0 #aaa"></div>
<div class="a" style="left:662.3px;top:1015.5px;width:30px;height:10px;border-radius:3px;background:#4a5aa6;box-shadow:0 0 0 1px rgba(0,0,0,.25)"></div>
<div class="t" style="left:664.1px;top:1029.2px;font-size:8.60px;color:#222;transform:scaleX(0.850);">Purplish</div>
<div class="t" style="left:670.0px;top:1037.5px;font-size:8.60px;color:#222;transform:scaleX(0.850);">Blue</div>
<div class="a" style="left:657.3px;top:1013px;width:1.5px;height:36px;background:#2a2a2a"></div>
<div class="a" style="left:697.9px;top:1012px;width:37px;height:35px;border-radius:3px 3px 0 0;background:linear-gradient(#9c9c9c,#7e7e7e 45%,#646464);box-shadow:inset 0 1px 0 #aaa"></div>
<div class="a" style="left:701.4px;top:1015.5px;width:30px;height:10px;border-radius:3px;background:#c05a64;box-shadow:0 0 0 1px rgba(0,0,0,.25)"></div>
<div class="t" style="left:701.0px;top:1029.2px;font-size:8.60px;color:#222;transform:scaleX(0.850);">Moderate</div>
<div class="t" style="left:709.7px;top:1037.5px;font-size:8.60px;color:#222;transform:scaleX(0.850);">Red</div>
<div class="a" style="left:696.4px;top:1013px;width:1.5px;height:36px;background:#2a2a2a"></div>
<div class="a" style="left:737.0px;top:1012px;width:37px;height:35px;border-radius:3px 3px 0 0;background:linear-gradient(#9c9c9c,#7e7e7e 45%,#646464);box-shadow:inset 0 1px 0 #aaa"></div>
<div class="a" style="left:740.5px;top:1015.5px;width:30px;height:18px;border-radius:3px;background:#5c3c6c;box-shadow:0 0 0 1px rgba(0,0,0,.25)"></div>
<div class="t" style="left:744.3px;top:1037.2px;font-size:9.00px;color:#1e1e1e;transform:scaleX(0.860);">Purple</div>
<div class="a" style="left:735.5px;top:1013px;width:1.5px;height:36px;background:#2a2a2a"></div>
<div class="a" style="left:776.0px;top:1012px;width:37px;height:35px;border-radius:3px 3px 0 0;background:linear-gradient(#9c9c9c,#7e7e7e 45%,#646464);box-shadow:inset 0 1px 0 #aaa"></div>
<div class="a" style="left:779.5px;top:1015.5px;width:30px;height:10px;border-radius:3px;background:#a0bc40;box-shadow:0 0 0 1px rgba(0,0,0,.25)"></div>
<div class="t" style="left:784.1px;top:1029.2px;font-size:8.60px;color:#222;transform:scaleX(0.850);">Yellow</div>
<div class="t" style="left:784.3px;top:1037.5px;font-size:8.60px;color:#222;transform:scaleX(0.850);">Green</div>
<div class="a" style="left:774.5px;top:1013px;width:1.5px;height:36px;background:#2a2a2a"></div>
<div class="a" style="left:815.0px;top:1012px;width:37px;height:35px;border-radius:3px 3px 0 0;background:linear-gradient(#9c9c9c,#7e7e7e 45%,#646464);box-shadow:inset 0 1px 0 #aaa"></div>
<div class="a" style="left:818.5px;top:1015.5px;width:30px;height:10px;border-radius:3px;background:#e8a030;box-shadow:0 0 0 1px rgba(0,0,0,.25)"></div>
<div class="t" style="left:821.4px;top:1029.2px;font-size:8.60px;color:#222;transform:scaleX(0.850);">Orange</div>
<div class="t" style="left:823.1px;top:1037.5px;font-size:8.60px;color:#222;transform:scaleX(0.850);">Yellow</div>
<div class="a" style="left:813.5px;top:1013px;width:1.5px;height:36px;background:#2a2a2a"></div>
<div class="a" style="left:854.1px;top:1012px;width:37px;height:35px;border-radius:3px 3px 0 0;background:linear-gradient(#9c9c9c,#7e7e7e 45%,#646464);box-shadow:inset 0 1px 0 #aaa"></div>
<div class="a" style="left:857.6px;top:1015.5px;width:30px;height:18px;border-radius:3px;background:#3440a0;box-shadow:0 0 0 1px rgba(0,0,0,.25)"></div>
<div class="t" style="left:864.9px;top:1037.2px;font-size:9.00px;color:#1e1e1e;transform:scaleX(0.860);">Blue</div>
<div class="a" style="left:852.6px;top:1013px;width:1.5px;height:36px;background:#2a2a2a"></div>
<div class="a" style="left:893.1px;top:1012px;width:37px;height:35px;border-radius:3px 3px 0 0;background:linear-gradient(#9c9c9c,#7e7e7e 45%,#646464);box-shadow:inset 0 1px 0 #aaa"></div>
<div class="a" style="left:896.6px;top:1015.5px;width:30px;height:18px;border-radius:3px;background:#48943c;box-shadow:0 0 0 1px rgba(0,0,0,.25)"></div>
<div class="t" style="left:900.9px;top:1037.2px;font-size:9.00px;color:#1e1e1e;transform:scaleX(0.860);">Green</div>
<div class="a" style="left:891.6px;top:1013px;width:1.5px;height:36px;background:#2a2a2a"></div>
<div class="a" style="left:932.2px;top:1012px;width:37px;height:35px;border-radius:3px 3px 0 0;background:linear-gradient(#9c9c9c,#7e7e7e 45%,#646464);box-shadow:inset 0 1px 0 #aaa"></div>
<div class="a" style="left:935.7px;top:1015.5px;width:30px;height:18px;border-radius:3px;background:#b43038;box-shadow:0 0 0 1px rgba(0,0,0,.25)"></div>
<div class="t" style="left:943.6px;top:1037.2px;font-size:9.00px;color:#1e1e1e;transform:scaleX(0.860);">Red</div>
<div class="a" style="left:930.7px;top:1013px;width:1.5px;height:36px;background:#2a2a2a"></div>
<div class="a" style="left:971.2px;top:1012px;width:37px;height:35px;border-radius:3px 3px 0 0;background:linear-gradient(#9c9c9c,#7e7e7e 45%,#646464);box-shadow:inset 0 1px 0 #aaa"></div>
<div class="a" style="left:974.8px;top:1015.5px;width:30px;height:18px;border-radius:3px;background:#e8c820;box-shadow:0 0 0 1px rgba(0,0,0,.25)"></div>
<div class="t" style="left:978.7px;top:1037.2px;font-size:9.00px;color:#1e1e1e;transform:scaleX(0.860);">Yellow</div>
<div class="a" style="left:969.8px;top:1013px;width:1.5px;height:36px;background:#2a2a2a"></div>
<div class="a" style="left:1010.3px;top:1012px;width:37px;height:35px;border-radius:3px 3px 0 0;background:linear-gradient(#9c9c9c,#7e7e7e 45%,#646464);box-shadow:inset 0 1px 0 #aaa"></div>
<div class="a" style="left:1013.8px;top:1015.5px;width:30px;height:18px;border-radius:3px;background:#b85098;box-shadow:0 0 0 1px rgba(0,0,0,.25)"></div>
<div class="t" style="left:1013.7px;top:1037.2px;font-size:9.00px;color:#1e1e1e;transform:scaleX(0.860);">Magenta</div>
<div class="a" style="left:1008.8px;top:1013px;width:1.5px;height:36px;background:#2a2a2a"></div>
<div class="a" style="left:1049.3px;top:1012px;width:37px;height:35px;border-radius:3px 3px 0 0;background:linear-gradient(#9c9c9c,#7e7e7e 45%,#646464);box-shadow:inset 0 1px 0 #aaa"></div>
<div class="a" style="left:1052.8px;top:1015.5px;width:30px;height:18px;border-radius:3px;background:#0888a8;box-shadow:0 0 0 1px rgba(0,0,0,.25)"></div>
<div class="t" style="left:1058.8px;top:1037.2px;font-size:9.00px;color:#1e1e1e;transform:scaleX(0.860);">Cyan</div>
<div class="a" style="left:1047.8px;top:1013px;width:1.5px;height:36px;background:#2a2a2a"></div>
<div class="a" style="left:1088.4px;top:1012px;width:37px;height:35px;border-radius:3px 3px 0 0;background:linear-gradient(#9c9c9c,#7e7e7e 45%,#646464);box-shadow:inset 0 1px 0 #aaa"></div>
<div class="a" style="left:1091.9px;top:1015.5px;width:30px;height:18px;border-radius:3px;background:#ff0000;box-shadow:0 0 0 1px rgba(0,0,0,.25)"></div>
<div class="t" style="left:1088.9px;top:1037.2px;font-size:9.00px;color:#1e1e1e;transform:scaleX(0.857);">100% Red</div>
<div class="a" style="left:1086.9px;top:1013px;width:1.5px;height:36px;background:#2a2a2a"></div>
<div class="a" style="left:1127.4px;top:1012px;width:37px;height:35px;border-radius:3px 3px 0 0;background:linear-gradient(#9c9c9c,#7e7e7e 45%,#646464);box-shadow:inset 0 1px 0 #aaa"></div>
<div class="a" style="left:1130.9px;top:1015.5px;width:30px;height:10px;border-radius:3px;background:#00ff00;box-shadow:0 0 0 1px rgba(0,0,0,.25)"></div>
<div class="t" style="left:1136.6px;top:1029.2px;font-size:8.60px;color:#222;transform:scaleX(0.850);">100%</div>
<div class="t" style="left:1135.8px;top:1037.5px;font-size:8.60px;color:#222;transform:scaleX(0.850);">Green</div>
<div class="a" style="left:1125.9px;top:1013px;width:1.5px;height:36px;background:#2a2a2a"></div>
<div class="a" style="left:1166.5px;top:1012px;width:37px;height:35px;border-radius:3px 3px 0 0;background:linear-gradient(#9c9c9c,#7e7e7e 45%,#646464);box-shadow:inset 0 1px 0 #aaa"></div>
<div class="a" style="left:1170.0px;top:1015.5px;width:30px;height:10px;border-radius:3px;background:#0000ff;box-shadow:0 0 0 1px rgba(0,0,0,.25)"></div>
<div class="t" style="left:1175.7px;top:1029.2px;font-size:8.60px;color:#222;transform:scaleX(0.850);">100%</div>
<div class="t" style="left:1177.7px;top:1037.5px;font-size:8.60px;color:#222;transform:scaleX(0.850);">Blue</div>
<div class="a" style="left:1165.0px;top:1013px;width:1.5px;height:36px;background:#2a2a2a"></div>
<div class="a" style="left:1205.5px;top:1012px;width:37px;height:35px;border-radius:3px 3px 0 0;background:linear-gradient(#9c9c9c,#7e7e7e 45%,#646464);box-shadow:inset 0 1px 0 #aaa"></div>
<div class="a" style="left:1209.0px;top:1015.5px;width:30px;height:10px;border-radius:3px;background:#00ffff;box-shadow:0 0 0 1px rgba(0,0,0,.25)"></div>
<div class="t" style="left:1214.7px;top:1029.2px;font-size:8.60px;color:#222;transform:scaleX(0.850);">100%</div>
<div class="t" style="left:1215.5px;top:1037.5px;font-size:8.60px;color:#222;transform:scaleX(0.850);">Cyan</div>
<div class="a" style="left:1204.0px;top:1013px;width:1.5px;height:36px;background:#2a2a2a"></div>
<div class="a" style="left:1244.6px;top:1012px;width:37px;height:35px;border-radius:3px 3px 0 0;background:linear-gradient(#9c9c9c,#7e7e7e 45%,#646464);box-shadow:inset 0 1px 0 #aaa"></div>
<div class="a" style="left:1248.1px;top:1015.5px;width:30px;height:10px;border-radius:3px;background:#ff00ff;box-shadow:0 0 0 1px rgba(0,0,0,.25)"></div>
<div class="t" style="left:1253.8px;top:1029.2px;font-size:8.60px;color:#222;transform:scaleX(0.850);">100%</div>
<div class="t" style="left:1248.9px;top:1037.5px;font-size:8.60px;color:#222;transform:scaleX(0.850);">Magenta</div>
<div class="a" style="left:1243.1px;top:1013px;width:1.5px;height:36px;background:#2a2a2a"></div>
<div class="a" style="left:1283.6px;top:1012px;width:37px;height:35px;border-radius:3px 3px 0 0;background:linear-gradient(#9c9c9c,#7e7e7e 45%,#646464);box-shadow:inset 0 1px 0 #aaa"></div>
<div class="a" style="left:1287.1px;top:1015.5px;width:30px;height:10px;border-radius:3px;background:#ffff00;box-shadow:0 0 0 1px rgba(0,0,0,.25)"></div>
<div class="t" style="left:1292.8px;top:1029.2px;font-size:8.60px;color:#222;transform:scaleX(0.850);">100%</div>
<div class="t" style="left:1291.7px;top:1037.5px;font-size:8.60px;color:#222;transform:scaleX(0.850);">Yellow</div>
<div class="a" style="left:1282.1px;top:1013px;width:1.5px;height:36px;background:#2a2a2a"></div>
<div class="a" style="left:1322.7px;top:1012px;width:37px;height:35px;border-radius:3px 3px 0 0;background:linear-gradient(#9c9c9c,#7e7e7e 45%,#646464);box-shadow:inset 0 1px 0 #aaa"></div>
<div class="a" style="left:1326.2px;top:1015.5px;width:30px;height:18px;border-radius:3px;background:#7a4428;box-shadow:0 0 0 1px rgba(0,0,0,.25)"></div>
<div class="t" style="left:1336.5px;top:1037.2px;font-size:9.00px;color:#1e1e1e;transform:scaleX(0.860);">2E</div>
<div class="a" style="left:1321.2px;top:1013px;width:1.5px;height:36px;background:#2a2a2a"></div>
<div class="a" style="left:1361.8px;top:1012px;width:37px;height:35px;border-radius:3px 3px 0 0;background:linear-gradient(#9c9c9c,#7e7e7e 45%,#646464);box-shadow:inset 0 1px 0 #aaa"></div>
<div class="a" style="left:1365.2px;top:1015.5px;width:30px;height:18px;border-radius:3px;background:#c88868;box-shadow:0 0 0 1px rgba(0,0,0,.25)"></div>
<div class="t" style="left:1375.7px;top:1037.2px;font-size:9.00px;color:#1e1e1e;transform:scaleX(0.860);">2F</div>
<div class="a" style="left:1360.2px;top:1013px;width:1.5px;height:36px;background:#2a2a2a"></div>
<div class="a" style="left:1400.8px;top:1012px;width:37px;height:35px;border-radius:3px 3px 0 0;background:linear-gradient(#9c9c9c,#7e7e7e 45%,#646464);box-shadow:inset 0 1px 0 #aaa"></div>
<div class="a" style="left:1404.3px;top:1015.5px;width:30px;height:18px;border-radius:3px;background:#f8c8a0;box-shadow:0 0 0 1px rgba(0,0,0,.25)"></div>
<div class="t" style="left:1414.6px;top:1037.2px;font-size:9.00px;color:#1e1e1e;transform:scaleX(0.860);">2K</div>
<div class="a" style="left:1399.3px;top:1013px;width:1.5px;height:36px;background:#2a2a2a"></div>
<div class="a" style="left:1439.8px;top:1012px;width:37px;height:35px;border-radius:3px 3px 0 0;background:linear-gradient(#9c9c9c,#7e7e7e 45%,#646464);box-shadow:inset 0 1px 0 #aaa"></div>
<div class="a" style="left:1443.3px;top:1015.5px;width:30px;height:18px;border-radius:3px;background:#f8c8b0;box-shadow:0 0 0 1px rgba(0,0,0,.25)"></div>
<div class="t" style="left:1453.4px;top:1037.2px;font-size:9.00px;color:#1e1e1e;transform:scaleX(0.860);">5D</div>
<div class="a" style="left:1438.3px;top:1013px;width:1.5px;height:36px;background:#2a2a2a"></div>
<div class="a" style="left:1478.9px;top:1012px;width:37px;height:35px;border-radius:3px 3px 0 0;background:linear-gradient(#9c9c9c,#7e7e7e 45%,#646464);box-shadow:inset 0 1px 0 #aaa"></div>
<div class="a" style="left:1482.4px;top:1015.5px;width:30px;height:18px;border-radius:3px;background:#f0a078;box-shadow:0 0 0 1px rgba(0,0,0,.25)"></div>
<div class="t" style="left:1492.7px;top:1037.2px;font-size:9.00px;color:#1e1e1e;transform:scaleX(0.860);">7E</div>
<div class="a" style="left:1477.4px;top:1013px;width:1.5px;height:36px;background:#2a2a2a"></div>
<div class="a" style="left:1518.0px;top:1012px;width:37px;height:35px;border-radius:3px 3px 0 0;background:linear-gradient(#9c9c9c,#7e7e7e 45%,#646464);box-shadow:inset 0 1px 0 #aaa"></div>
<div class="a" style="left:1521.5px;top:1015.5px;width:30px;height:18px;border-radius:3px;background:#d09060;box-shadow:0 0 0 1px rgba(0,0,0,.25)"></div>
<div class="t" style="left:1531.9px;top:1037.2px;font-size:9.00px;color:#1e1e1e;transform:scaleX(0.860);">7F</div>
<div class="a" style="left:1516.5px;top:1013px;width:1.5px;height:36px;background:#2a2a2a"></div>
<div class="a" style="left:1557.0px;top:1012px;width:37px;height:35px;border-radius:3px 3px 0 0;background:linear-gradient(#9c9c9c,#7e7e7e 45%,#646464);box-shadow:inset 0 1px 0 #aaa"></div>
<div class="a" style="left:1560.5px;top:1015.5px;width:30px;height:18px;border-radius:3px;background:#a06838;box-shadow:0 0 0 1px rgba(0,0,0,.25)"></div>
<div class="t" style="left:1570.3px;top:1037.2px;font-size:9.00px;color:#1e1e1e;transform:scaleX(0.860);">7G</div>
<div class="a" style="left:1555.5px;top:1013px;width:1.5px;height:36px;background:#2a2a2a"></div>
<div class="a" style="left:1596.0px;top:1012px;width:37px;height:35px;border-radius:3px 3px 0 0;background:linear-gradient(#9c9c9c,#7e7e7e 45%,#646464);box-shadow:inset 0 1px 0 #aaa"></div>
<div class="a" style="left:1599.5px;top:1015.5px;width:30px;height:18px;border-radius:3px;background:#d8a080;box-shadow:0 0 0 1px rgba(0,0,0,.25)"></div>
<div class="t" style="left:1609.6px;top:1037.2px;font-size:9.00px;color:#1e1e1e;transform:scaleX(0.860);">7H</div>
<div class="a" style="left:1594.5px;top:1013px;width:1.5px;height:36px;background:#2a2a2a"></div>
<div class="a" style="left:1635.1px;top:1012px;width:37px;height:35px;border-radius:3px 3px 0 0;background:linear-gradient(#9c9c9c,#7e7e7e 45%,#646464);box-shadow:inset 0 1px 0 #aaa"></div>
<div class="a" style="left:1638.6px;top:1015.5px;width:30px;height:18px;border-radius:3px;background:#c87830;box-shadow:0 0 0 1px rgba(0,0,0,.25)"></div>
<div class="a" style="left:1633.6px;top:1013px;width:1.5px;height:36px;background:#2a2a2a"></div>
<div class="a" style="left:151px;top:1048.5px;width:1522px;height:9.5px;background:#5a5a5a"></div>
<div class="a" style="left:152px;top:1049.5px;width:9px;height:8px;background:#8a8a8a;border-radius:1px"></div>
<svg class="a" style="left:154px;top:1050.5px" width="5" height="6"><path d="M4.5 0V6L0.5 3Z" fill="#333"/></svg>
<div class="a" style="left:162px;top:1049.5px;width:1243px;height:7px;border-radius:3.5px;background:#3c3c3c"></div>
<div class="a" style="left:1663px;top:1049.5px;width:9px;height:8px;background:#8a8a8a;border-radius:1px"></div>
<svg class="a" style="left:1665px;top:1050.5px" width="5" height="6"><path d="M0.5 0V6L4.5 3Z" fill="#333"/></svg>
<div class="a" style="left:1678.5px;top:1025.5px;width:34.5px;height:32.5px;background:linear-gradient(#8a8a8a,#666);border-radius:3px 3px 0 0"></div>
<div class="a" style="left:1684.3px;top:1030.6px;width:18px;height:17.5px;border-radius:3px;border:2px solid #1e1e1e;background:linear-gradient(#c8c8c8,#8a8a8a)"></div>
<div class="a" style="left:1690.8px;top:1036.5px;width:10px;height:9.5px;background:#000"></div>
<div class="a" style="left:1715px;top:1011.7px;width:135px;height:22.5px;background:linear-gradient(#9a9a9a,#7a7a7a);border-radius:3px 3px 0 0"></div>
<div class="a" style="left:1749.4px;top:1012px;width:1px;height:22px;background:#555"></div>
<div class="a" style="left:1783.3px;top:1012px;width:1px;height:22px;background:#555"></div>
<div class="a" style="left:1817.1px;top:1012px;width:1px;height:22px;background:#555"></div>
<div class="a" style="left:1725px;top:1019px;width:15px;height:15px;border-radius:50%;background:radial-gradient(#9a9a9a,#7c7c7c)"></div>
<div class="a" style="left:1759px;top:1019px;width:15px;height:15px;border-radius:50%;background:radial-gradient(#9a9a9a,#7c7c7c)"></div>
<div class="a" style="left:1793px;top:1019px;width:15px;height:15px;border-radius:50%;background:radial-gradient(#9a9a9a,#7c7c7c)"></div>
<div class="a" style="left:1827px;top:1019px;width:15px;height:15px;border-radius:50%;background:radial-gradient(#9a9a9a,#7c7c7c)"></div>
<div class="a" style="left:1850px;top:1011.7px;width:70px;height:22.5px;background:linear-gradient(#3e3e3e,#2e2e2e)"></div>
<div class="a" style="left:1884px;top:1012px;width:1px;height:22px;background:#222"></div>
<div class="a" style="left:1860px;top:1019px;width:15px;height:15px;border-radius:50%;background:radial-gradient(#404040,#333)"></div>
<div class="a" style="left:1894px;top:1019px;width:15px;height:15px;border-radius:50%;background:radial-gradient(#404040,#333)"></div>
<div class="a" style="left:1715px;top:1035px;width:101.5px;height:23px;border-radius:3px 3px 0 0;background:linear-gradient(#c4c4c4,#a8a8a8 50%,#8c8c8c);box-shadow:inset 0 1px 0 #d8d8d8"></div>
<div class="a" style="left:1817px;top:1035px;width:101.5px;height:23px;border-radius:3px 3px 0 0;background:linear-gradient(#c4c4c4,#a8a8a8 50%,#8c8c8c);box-shadow:inset 0 1px 0 #d8d8d8"></div>
<div class="a" style="left:1730px;top:1038.3px;width:15px;height:15px;border-radius:50%;background:radial-gradient(circle at 50% 40%,#bbb,#909090)"></div>
<div class="t" style="left:1734.1px;top:1039.5px;font-size:13.00px;color:#2a2a2a;">«</div>
<div class="t" style="left:1758.0px;top:1037.9px;font-size:16.00px;color:#282828;transform:scaleX(1.060);">Back</div>
<div class="a" style="left:1889.7px;top:1038.3px;width:15px;height:15px;border-radius:50%;background:radial-gradient(circle at 50% 40%,#bbb,#909090)"></div>
<div class="t" style="left:1893.6px;top:1039.5px;font-size:13.00px;color:#2a2a2a;">»</div>
<div class="t" style="left:1838.0px;top:1037.9px;font-size:16.00px;color:#282828;transform:scaleX(1.167);">Next</div>
<svg class="a" style="left:1620px;top:985px" width="300" height="73" viewBox="0 0 300 73">
<g fill="none" stroke-linejoin="round" stroke-linecap="round">
<path d="M10.8 10.8 L46.7 19.2 L50 41 L77.5 47.5 L35 60 L12.5 46.7 Z" stroke="rgba(225,225,225,.5)" stroke-width="6.5"/>
<path d="M10.8 10.8 L46.7 19.2 L50 41 L77.5 47.5 L35 60 L12.5 46.7 Z" stroke="rgba(135,25,38,.85)" stroke-width="3.8"/>
<path d="M16 16.5 L42 22.5 L45 41.5 L20 44 Z" stroke="rgba(40,40,40,.35)" stroke-width="1"/>
<path d="M20 44 L46.5 41" stroke="rgba(255,255,255,.55)" stroke-width="2.5"/>
<path d="M22.5 24 L34 38.5 L54 10.8" stroke="rgba(235,235,235,.6)" stroke-width="5"/>
<path d="M22.5 24 L34 38.5 L54 10.8" stroke="rgba(45,45,45,.9)" stroke-width="2.6"/>
</g>
<text x="54" y="40.5" font-family="Liberation Sans" font-weight="bold" font-size="28" textLength="149" lengthAdjust="spacingAndGlyphs" fill="rgba(140,28,40,.78)" stroke="rgba(225,225,225,.55)" stroke-width="2.4" paint-order="stroke">NOTEBOOK</text>
<text x="203" y="40.5" font-family="Liberation Sans" font-weight="bold" font-size="28" textLength="90" lengthAdjust="spacingAndGlyphs" fill="rgba(40,40,40,.45)" stroke="rgba(225,225,225,.55)" stroke-width="2.2" paint-order="stroke">CHECK</text>
<text x="203" y="40.5" font-family="Liberation Sans" font-weight="bold" font-size="28" textLength="90" lengthAdjust="spacingAndGlyphs" fill="none" stroke="rgba(30,30,30,.7)" stroke-width=".5">CHECK</text>
</svg>
</body></html>
